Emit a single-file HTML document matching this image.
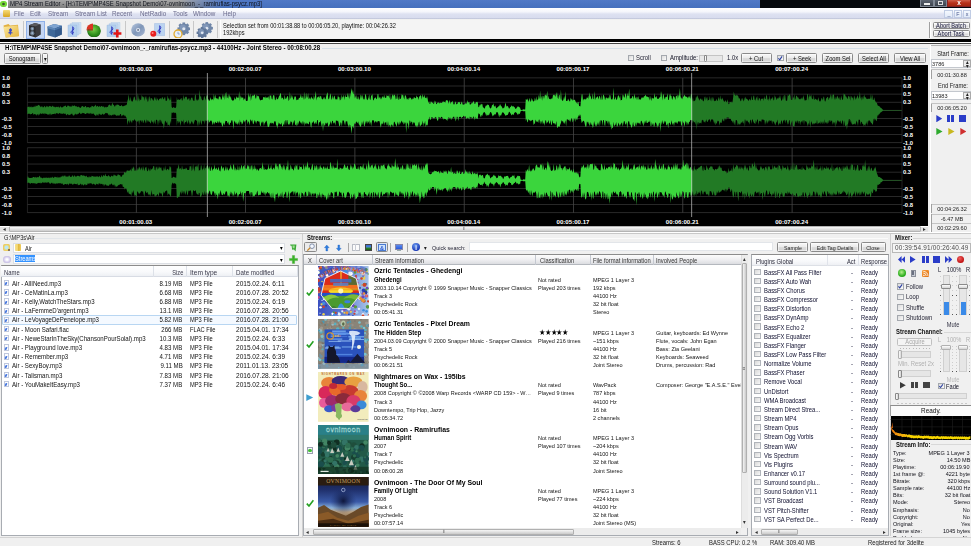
<!DOCTYPE html>
<html><head><meta charset="utf-8"><title>MP4 Stream Editor</title>
<style>
html,body{margin:0;padding:0;background:#f0f0f0;}
#r{position:relative;width:971px;height:546px;overflow:hidden;background:#f0f0f0;font-family:"Liberation Sans",sans-serif;font-size:6.1px;color:#000;}
#r div{position:absolute;box-sizing:border-box;}
#r svg{position:absolute;}
.t{position:absolute;white-space:nowrap;}
.btn{background:linear-gradient(#f8f8f8,#ececec 45%,#dcdcdc 55%,#d2d2d2);border:0.6px solid #8a8a8a;border-radius:1.5px;box-shadow:inset 0 0 0 0.5px #fff;}
.inp{background:#fff;border:1px solid #b4b8c0;}
.cb{background:#f4f4f4;border:1px solid #8f8f8f;}
</style></head><body><div id="r">

<div style="left:0px;top:0px;width:971px;height:8.3px;background:linear-gradient(#5179c6,#4670bd);"></div>
<div style="left:0px;top:0px;width:225px;height:8.3px;background:linear-gradient(#a8a8a8,#8e8e8e 60%,#7e7e7e);-webkit-mask-image:linear-gradient(90deg,#000 80%,transparent);mask-image:linear-gradient(90deg,#000 80%,transparent);"></div>
<div style="left:760.2px;top:0px;width:211px;height:8.3px;background:#05080c;"></div>
<div style="left:0px;top:0px;width:8px;height:8.3px;background:#fff;"></div>
<div style="left:0.3px;top:0.6px;width:6.6px;height:6.6px;background:radial-gradient(#3a5a2a 15%,#7fe83a 45%,#3fb81a);border-radius:4px;"></div>
<span class="t" style="top:-0.80px;line-height:10px;font-size:6.67px;color:#10131c;left:10px;transform:scaleX(0.9);transform-origin:0 50%;">MP4 Stream Editor - [H:\TEMP\MP4SE Snapshot Demo\07-ovnimoon_-_ramirufias-psycz.mp3]</span>
<div style="left:920px;top:0px;width:13.5px;height:7px;background:linear-gradient(#5c6470,#3c424c);border:0.5px solid #808894;border-top:0;"></div>
<div style="left:934px;top:0px;width:12.8px;height:7px;background:linear-gradient(#5c6470,#3c424c);border:0.5px solid #808894;border-top:0;"></div>
<div style="left:947.2px;top:0px;width:23.8px;height:7px;background:linear-gradient(#d0604a,#b83018 50%,#a42810);border:0.5px solid #822;border-top:0;"></div>
<div style="left:924px;top:3px;width:6px;height:1.5px;background:#eee;"></div>
<div style="left:937.5px;top:1px;width:5px;height:4px;border:1px solid #ddd;"></div>
<span class="t" style="top:-2.00px;line-height:10px;font-size:7.22px;color:#fff;font-weight:bold;left:859px;width:200px;text-align:center;transform:scaleX(0.9);transform-origin:50% 50%;">x</span>
<div style="left:0px;top:8.3px;width:971px;height:10.5px;background:linear-gradient(#ffffff 0%,#f4f5fb 35%,#dde1f1 55%,#d8dcee 90%,#b4bad0 100%);"></div>
<span class="t" style="top:9.40px;line-height:10px;font-size:7.0px;color:#6a6a8c;left:14px;transform:scaleX(0.9);transform-origin:0 50%;">File</span>
<span class="t" style="top:9.40px;line-height:10px;font-size:7.0px;color:#6a6a8c;left:29.5px;transform:scaleX(0.9);transform-origin:0 50%;">Edit</span>
<span class="t" style="top:9.40px;line-height:10px;font-size:7.0px;color:#6a6a8c;left:47.5px;transform:scaleX(0.9);transform-origin:0 50%;">Stream</span>
<span class="t" style="top:9.40px;line-height:10px;font-size:7.0px;color:#6a6a8c;left:74.5px;transform:scaleX(0.9);transform-origin:0 50%;">Stream List</span>
<span class="t" style="top:9.40px;line-height:10px;font-size:7.0px;color:#6a6a8c;left:112px;transform:scaleX(0.9);transform-origin:0 50%;">Recent</span>
<span class="t" style="top:9.40px;line-height:10px;font-size:7.0px;color:#6a6a8c;left:139.5px;transform:scaleX(0.9);transform-origin:0 50%;">NetRadio</span>
<span class="t" style="top:9.40px;line-height:10px;font-size:7.0px;color:#6a6a8c;left:173px;transform:scaleX(0.9);transform-origin:0 50%;">Tools</span>
<span class="t" style="top:9.40px;line-height:10px;font-size:7.0px;color:#6a6a8c;left:193px;transform:scaleX(0.9);transform-origin:0 50%;">Window</span>
<span class="t" style="top:9.40px;line-height:10px;font-size:7.0px;color:#6a6a8c;left:223px;transform:scaleX(0.9);transform-origin:0 50%;">Help</span>
<div style="left:3px;top:10px;width:7px;height:7px;background:linear-gradient(#f7dc7a,#d8a520);border-radius:1px;"></div>
<div style="left:944.3px;top:9.7px;width:8.5px;height:8.6px;background:linear-gradient(#f4f8fe,#e2eaf8);border:0.5px solid #c0cce4;"></div>
<span class="t" style="top:9.30px;line-height:10px;font-size:6.0px;color:#44558a;left:848.55px;width:200px;text-align:center;transform:scaleX(0.9);transform-origin:50% 50%;">_</span>
<div style="left:954.3px;top:9.7px;width:8px;height:8.6px;background:linear-gradient(#f4f8fe,#e2eaf8);border:0.5px solid #c0cce4;"></div>
<span class="t" style="top:9.30px;line-height:10px;font-size:6.0px;color:#44558a;left:858.3px;width:200px;text-align:center;transform:scaleX(0.9);transform-origin:50% 50%;">F</span>
<div style="left:963.4px;top:9.7px;width:7.6px;height:8.6px;background:linear-gradient(#f4f8fe,#e2eaf8);border:0.5px solid #c0cce4;"></div>
<span class="t" style="top:9.30px;line-height:10px;font-size:6.0px;color:#44558a;left:867.1999999999999px;width:200px;text-align:center;transform:scaleX(0.9);transform-origin:50% 50%;">x</span>
<div style="left:0px;top:19px;width:971px;height:20.5px;background:#f0f0f0;"></div>
<div style="left:25.5px;top:20.5px;width:19.5px;height:18px;background:#c3d5f3;border:0.5px solid #8fb0e8;"></div>
<svg style="left:2.5px;top:22.5px" width="16.5" height="15" viewBox="0 0 16.5 15"><defs><linearGradient id="fg" x1="0" y1="0" x2="1" y2="1"><stop offset="0" stop-color="#fbe9a0"/><stop offset="1" stop-color="#e6b43c"/></linearGradient></defs><path d="M0.5 2.5 L5.5 1 L7 2.5 L15 1.8 L16 13 L3 14.5Z" fill="#e2b040"/><path d="M0.3 4 L14.5 2.5 L16 13.2 L2.5 14.6Z" fill="url(#fg)"/><path d="M7.6 5 L9.2 7 L8 9 L10.2 10 L8 10.6 L7.4 12.4 L6.6 10.4 L4.8 10 L6.6 8.8 L6 6.8Z" fill="#3a4ac8"/></svg>
<svg style="left:28px;top:22px" width="13" height="15.8" viewBox="0 0 13 15.8"><path d="M1 3.2 L7 1 L12.5 2.5 L12.5 12.5 L7.5 15.5 L1 13.5Z" fill="#2c2c2e"/><path d="M1 3.2 L7 1 L12.5 2.5 L7.5 4.6Z" fill="#5a5a5e"/><path d="M7.5 4.6 L12.5 2.5 L12.5 12.5 L7.5 15.5Z" fill="#3c3c40"/><ellipse cx="4.3" cy="6.8" rx="1.9" ry="2" fill="#6a7a8c"/><ellipse cx="4.3" cy="11.2" rx="2.1" ry="2.2" fill="#6a7a8c"/><ellipse cx="4.3" cy="6.8" rx="0.9" ry="1" fill="#9ab0c8"/><ellipse cx="4.3" cy="11.2" rx="1" ry="1.1" fill="#9ab0c8"/></svg>
<svg style="left:47px;top:23px" width="15.2" height="14.8" viewBox="0 0 15.2 14.8"><path d="M0.5 3.5 L7 1 L14.8 2.8 L14.8 11.5 L8 14.4 L0.5 12.2Z" fill="#3f6898"/><path d="M0.5 3.5 L7 1 L14.8 2.8 L8 5.6Z" fill="#7fa4d0"/><path d="M8 5.6 L14.8 2.8 L14.8 11.5 L8 14.4Z" fill="#345a8a"/><path d="M0.5 3.5 L8 5.6 L8 7.2 L0.5 5.2Z" fill="#5f88b8"/><path d="M8 5.6 L14.8 2.8 L14.8 4.6 L8 7.2Z" fill="#4a74a8"/></svg>
<svg style="left:66.5px;top:22px" width="15" height="15" viewBox="0 0 15 15"><path d="M5 0.5 H14 V11.5 H5Z" fill="#cfe0f4" stroke="#a8c4e4" stroke-width="0.4"/><path d="M3 1.8 H12 V13 H3Z" fill="#c4daf2" stroke="#9fbde0" stroke-width="0.4"/><path d="M1 3.2 H10 V14.5 H1Z" fill="#b4d0ee" stroke="#8fb0dc" stroke-width="0.4"/><path d="M5.6 5 C7.4 5.4 7.2 8.2 5.2 8.6 C3.4 9.4 3.6 11.6 5.6 11.4 C6.8 11.2 6.6 9.6 5.6 9.8 M5.7 4.6 V12.8" fill="none" stroke="#2a34c0" stroke-width="0.9"/></svg>
<svg style="left:86px;top:22.6px" width="15" height="14.6" viewBox="0 0 15 14.6"><defs><radialGradient id="pg" cx="0.45" cy="0.4"><stop offset="0" stop-color="#7ad048"/><stop offset="1" stop-color="#2a8a18"/></radialGradient></defs><ellipse cx="8" cy="8.4" rx="6.6" ry="6" fill="#1f6a12"/><ellipse cx="8" cy="7.6" rx="6.6" ry="6" fill="url(#pg)"/><path d="M7 6.4 L7 0.6 A6.4 5.8 0 0 0 0.6 6.4Z" fill="#d83424"/><path d="M7 6.4 L0.6 6.4 L0.6 7.4 L7 7.4Z" fill="#a02010"/></svg>
<svg style="left:106px;top:22px" width="16" height="15.5" viewBox="0 0 16 15.5"><path d="M5 0.5 H14 V11.5 H5Z" fill="#cfe0f4" stroke="#a8c4e4" stroke-width="0.4"/><path d="M3 1.8 H12 V13 H3Z" fill="#c4daf2" stroke="#9fbde0" stroke-width="0.4"/><path d="M1 3.2 H10 V14.5 H1Z" fill="#b4d0ee" stroke="#8fb0dc" stroke-width="0.4"/><path d="M5.6 5 C7.4 5.4 7.2 8.2 5.2 8.6 C3.4 9.4 3.6 11.6 5.6 11.4 C6.8 11.2 6.6 9.6 5.6 9.8 M5.7 4.6 V12.8" fill="none" stroke="#2a34c0" stroke-width="0.9"/><path d="M10 7.6 H12.6 V10.2 H15.4 V12.8 H12.6 V15.4 H10 V12.8 H7.4 V10.2 H10Z" fill="#e01818"/></svg>
<svg style="left:130.8px;top:23.2px" width="14.2" height="13.8" viewBox="0 0 14.2 13.8"><defs><linearGradient id="cg" x1="0" y1="0" x2="1" y2="1"><stop offset="0" stop-color="#b8c8e0"/><stop offset="0.5" stop-color="#7f96b8"/><stop offset="1" stop-color="#a8b8d4"/></linearGradient></defs><ellipse cx="7.1" cy="6.9" rx="6.9" ry="6.6" fill="url(#cg)"/><ellipse cx="7.1" cy="6.9" rx="2.1" ry="2" fill="#dfe6f2"/><ellipse cx="7.1" cy="6.9" rx="0.9" ry="0.9" fill="#55657f"/></svg>
<svg style="left:149.5px;top:23px" width="15.5" height="14" viewBox="0 0 15.5 14"><path d="M4.5 0.5 H14.8 V12.6 H4.5Z" fill="#bcd4f0" stroke="#94b4de" stroke-width="0.4"/><path d="M9.6 3 C11.4 3.4 11.2 6.2 9.2 6.6 C7.4 7.4 7.6 9.6 9.6 9.4 C10.8 9.2 10.6 7.6 9.6 7.8 M9.7 2.6 V10.8" fill="none" stroke="#2a34c0" stroke-width="0.9"/><circle cx="3.3" cy="10.8" r="3" fill="#e82020"/><circle cx="2.6" cy="10" r="1" fill="#ff8080"/></svg>
<svg style="left:172.5px;top:21.5px" width="17.5" height="16.5" viewBox="0 0 17.5 16.5"><rect x="9.45" y="0.46" width="2.70" height="2.60" fill="#6f86a8" transform="rotate(0 10.8 6.8)"/><rect x="9.45" y="0.46" width="2.70" height="2.60" fill="#6f86a8" transform="rotate(45 10.8 6.8)"/><rect x="9.45" y="0.46" width="2.70" height="2.60" fill="#6f86a8" transform="rotate(90 10.8 6.8)"/><rect x="9.45" y="0.46" width="2.70" height="2.60" fill="#6f86a8" transform="rotate(135 10.8 6.8)"/><rect x="9.45" y="0.46" width="2.70" height="2.60" fill="#6f86a8" transform="rotate(180 10.8 6.8)"/><rect x="9.45" y="0.46" width="2.70" height="2.60" fill="#6f86a8" transform="rotate(225 10.8 6.8)"/><rect x="9.45" y="0.46" width="2.70" height="2.60" fill="#6f86a8" transform="rotate(270 10.8 6.8)"/><rect x="9.45" y="0.46" width="2.70" height="2.60" fill="#6f86a8" transform="rotate(315 10.8 6.8)"/><circle cx="10.8" cy="6.8" r="5.2" fill="#6f86a8"/><circle cx="9.760000000000002" cy="5.5" r="3.12" fill="#8ea4c4" opacity="0.6"/><circle cx="10.8" cy="6.8" r="1.56" fill="#dfe6f0"/><circle cx="5" cy="12" r="4" fill="#e8f0fa" stroke="#e0aa30" stroke-width="1.3"/><path d="M5 9.8 V12 H6.8" stroke="#6a88c0" stroke-width="0.7" fill="none"/></svg>
<svg style="left:196px;top:21.5px" width="17.5" height="16.5" viewBox="0 0 17.5 16.5"><rect x="9.50" y="0.10" width="2.60" height="2.50" fill="#6f86a8" transform="rotate(0 10.8 6.2)"/><rect x="9.50" y="0.10" width="2.60" height="2.50" fill="#6f86a8" transform="rotate(45 10.8 6.2)"/><rect x="9.50" y="0.10" width="2.60" height="2.50" fill="#6f86a8" transform="rotate(90 10.8 6.2)"/><rect x="9.50" y="0.10" width="2.60" height="2.50" fill="#6f86a8" transform="rotate(135 10.8 6.2)"/><rect x="9.50" y="0.10" width="2.60" height="2.50" fill="#6f86a8" transform="rotate(180 10.8 6.2)"/><rect x="9.50" y="0.10" width="2.60" height="2.50" fill="#6f86a8" transform="rotate(225 10.8 6.2)"/><rect x="9.50" y="0.10" width="2.60" height="2.50" fill="#6f86a8" transform="rotate(270 10.8 6.2)"/><rect x="9.50" y="0.10" width="2.60" height="2.50" fill="#6f86a8" transform="rotate(315 10.8 6.2)"/><circle cx="10.8" cy="6.2" r="5" fill="#6f86a8"/><circle cx="9.8" cy="4.95" r="3.0" fill="#8ea4c4" opacity="0.6"/><circle cx="10.8" cy="6.2" r="1.5" fill="#dfe6f0"/><rect x="5.00" y="5.19" width="2.39" height="2.30" fill="#62789a" transform="rotate(0 6.2 10.8)"/><rect x="5.00" y="5.19" width="2.39" height="2.30" fill="#62789a" transform="rotate(45 6.2 10.8)"/><rect x="5.00" y="5.19" width="2.39" height="2.30" fill="#62789a" transform="rotate(90 6.2 10.8)"/><rect x="5.00" y="5.19" width="2.39" height="2.30" fill="#62789a" transform="rotate(135 6.2 10.8)"/><rect x="5.00" y="5.19" width="2.39" height="2.30" fill="#62789a" transform="rotate(180 6.2 10.8)"/><rect x="5.00" y="5.19" width="2.39" height="2.30" fill="#62789a" transform="rotate(225 6.2 10.8)"/><rect x="5.00" y="5.19" width="2.39" height="2.30" fill="#62789a" transform="rotate(270 6.2 10.8)"/><rect x="5.00" y="5.19" width="2.39" height="2.30" fill="#62789a" transform="rotate(315 6.2 10.8)"/><circle cx="6.2" cy="10.8" r="4.6" fill="#62789a"/><circle cx="5.28" cy="9.65" r="2.76" fill="#8ea4c4" opacity="0.6"/><circle cx="6.2" cy="10.8" r="1.38" fill="#dfe6f0"/></svg>
<div style="left:22.5px;top:21px;width:1px;height:17px;background:#c8c8c8;"></div>
<div style="left:124.5px;top:21px;width:1px;height:17px;background:#c8c8c8;"></div>
<div style="left:168.5px;top:21px;width:1px;height:17px;background:#c8c8c8;"></div>
<div style="left:192.5px;top:21px;width:1px;height:17px;background:#c8c8c8;"></div>
<div style="left:216.5px;top:21px;width:1px;height:17px;background:#c8c8c8;"></div>
<div style="left:219.5px;top:20px;width:712px;height:19px;background:#f4f4f4;border-left:1px solid #fff;"></div>
<span class="t" style="top:21.40px;line-height:10px;font-size:6.33px;color:#111;left:222.5px;transform:scaleX(0.9);transform-origin:0 50%;">Selection set from 00:01:38.88 to 00:06:05.20, playtime: 00:04:26.32</span>
<span class="t" style="top:28.40px;line-height:10px;font-size:6.33px;color:#111;left:222.5px;transform:scaleX(0.9);transform-origin:0 50%;">192kbps</span>
<div style="left:929.3px;top:21.5px;width:0.7px;height:16px;background:#a0a0a0;"></div>
<div style="left:930px;top:21.5px;width:0.7px;height:16px;background:#fff;"></div>
<div class="btn" style="left:932.6px;top:21.7px;width:37.6px;height:6.9px;"></div>
<span class="t" style="top:20.70px;line-height:10px;font-size:6.33px;color:#15153a;left:851.4px;width:200px;text-align:center;transform:scaleX(0.9);transform-origin:50% 50%;">Abort Batch</span>
<div class="btn" style="left:932.6px;top:30.3px;width:37.6px;height:6.9px;"></div>
<span class="t" style="top:29.30px;line-height:10px;font-size:6.33px;color:#15153a;left:851.4px;width:200px;text-align:center;transform:scaleX(0.9);transform-origin:50% 50%;">Abort Task</span>
<div style="left:0px;top:39.4px;width:971px;height:3px;background:#000;"></div>
<div style="left:0px;top:42.4px;width:971px;height:0.7px;background:#fff;"></div>
<div style="left:0px;top:43.1px;width:971px;height:0.8px;background:#444;"></div>
<span class="t" style="top:43.40px;line-height:10px;font-size:6.77px;color:#000;font-weight:bold;left:4.5px;transform:scaleX(0.9);transform-origin:0 50%;">H:\TEMP\MP4SE Snapshot Demo\07-ovnimoon_-_ramirufias-psycz.mp3 - 44100Hz - Joint Stereo - 00:08:00.28</span>
<div style="left:322px;top:48.3px;width:606px;height:0.6px;background:#d5dfe8;"></div>
<div class="btn" style="left:3.5px;top:53px;width:37px;height:10.5px;"></div>
<span class="t" style="top:53.90px;line-height:10px;font-size:6.44px;color:#111;left:-78px;width:200px;text-align:center;transform:scaleX(0.9);transform-origin:50% 50%;">Sonogram</span>
<div class="btn" style="left:41.5px;top:53px;width:6.5px;height:10.5px;"></div>
<span class="t" style="top:53.90px;line-height:10px;font-size:5.56px;color:#111;left:-55.3px;width:200px;text-align:center;transform:scaleX(0.9);transform-origin:50% 50%;">▾</span>
<div style="left:627.5px;top:54.5px;width:6.3px;height:6.3px;background:linear-gradient(135deg,#dcdcdc,#fafafa);border:0.6px solid #a4a8ae;"></div>
<span class="t" style="top:53.40px;line-height:10px;font-size:6.56px;color:#223;left:636px;transform:scaleX(0.9);transform-origin:0 50%;">Scroll</span>
<div style="left:661px;top:54.5px;width:6.3px;height:6.3px;background:linear-gradient(135deg,#dcdcdc,#fafafa);border:0.6px solid #a4a8ae;"></div>
<span class="t" style="top:53.40px;line-height:10px;font-size:6.56px;color:#112;left:669.5px;transform:scaleX(0.9);transform-origin:0 50%;">Amplitude:</span>
<div style="left:699px;top:54.5px;width:24px;height:7px;background:#e8e8e8;border:0.6px solid #c4c4c4;"></div>
<div style="left:703.5px;top:55px;width:3.5px;height:6.5px;background:#f8f8f8;border:0.6px solid #888;border-radius:0 0 2px 2px;"></div>
<span class="t" style="top:53.40px;line-height:10px;font-size:6.56px;color:#223;left:727px;transform:scaleX(0.9);transform-origin:0 50%;">1.0x</span>
<div class="btn" style="left:740.5px;top:53px;width:31px;height:10.3px;"></div>
<span class="t" style="top:53.75px;line-height:10px;font-size:6.44px;color:#111;left:656.0px;width:200px;text-align:center;transform:scaleX(0.9);transform-origin:50% 50%;">+ Cut</span>
<div style="left:777px;top:54.5px;width:6.5px;height:6.5px;background:linear-gradient(135deg,#dcdcdc,#fafafa);border:0.6px solid #a4a8ae;"></div>
<svg style="left:777px;top:54.5px" width="6.5" height="6.5" viewBox="0 0 6 6"><path d="M1.3 3 L2.5 4.4 L4.7 1.3" fill="none" stroke="#2a3ea0" stroke-width="1"/></svg>
<div class="btn" style="left:786px;top:53px;width:31px;height:10.3px;"></div>
<span class="t" style="top:53.75px;line-height:10px;font-size:6.44px;color:#111;left:701.5px;width:200px;text-align:center;transform:scaleX(0.9);transform-origin:50% 50%;">+ Seek</span>
<div class="btn" style="left:822px;top:53px;width:31px;height:10.3px;"></div>
<span class="t" style="top:53.75px;line-height:10px;font-size:6.44px;color:#111;left:737.5px;width:200px;text-align:center;transform:scaleX(0.9);transform-origin:50% 50%;">Zoom Sel</span>
<div class="btn" style="left:858px;top:53px;width:31px;height:10.3px;"></div>
<span class="t" style="top:53.75px;line-height:10px;font-size:6.44px;color:#111;left:773.5px;width:200px;text-align:center;transform:scaleX(0.9);transform-origin:50% 50%;">Select All</span>
<div class="btn" style="left:894px;top:53px;width:31.5px;height:10.3px;"></div>
<span class="t" style="top:53.75px;line-height:10px;font-size:6.44px;color:#111;left:809.75px;width:200px;text-align:center;transform:scaleX(0.9);transform-origin:50% 50%;">View All</span>
<div style="left:0px;top:64.6px;width:928px;height:161.4px;background:#000;"></div>
<svg style="left:0;top:0" width="971" height="546" viewBox="0 0 971 546">
<defs>
<clipPath id="cs"><rect x="207.3" y="60" width="484.40000000000003" height="170"/></clipPath>
<clipPath id="cl"><rect x="0" y="60" width="207.3" height="170"/><rect x="691.7" y="60" width="300" height="170"/></clipPath>
</defs>
<rect x="27.3" y="77.55" width="874.7" height="0.7" fill="#3a3a3a"/>
<rect x="27.3" y="85.65" width="874.7" height="0.7" fill="#3a3a3a"/>
<rect x="27.3" y="93.75" width="874.7" height="0.7" fill="#3a3a3a"/>
<rect x="27.3" y="101.85" width="874.7" height="0.7" fill="#3a3a3a"/>
<rect x="27.3" y="109.95" width="874.7" height="0.7" fill="#3a3a3a"/>
<rect x="27.3" y="118.05" width="874.7" height="0.7" fill="#3a3a3a"/>
<rect x="27.3" y="126.15" width="874.7" height="0.7" fill="#3a3a3a"/>
<rect x="27.3" y="134.25" width="874.7" height="0.7" fill="#3a3a3a"/>
<rect x="27.3" y="142.35" width="874.7" height="0.7" fill="#3a3a3a"/>
<rect x="26.95" y="77.9" width="0.7" height="64.8" fill="#2e2e2e"/>
<rect x="901.65" y="77.9" width="0.7" height="64.8" fill="#2e2e2e"/>
<rect x="135.9" y="77.9" width="0.8" height="64.8" fill="#464646"/>
<rect x="245.2" y="77.9" width="0.8" height="64.8" fill="#464646"/>
<rect x="354.5" y="77.9" width="0.8" height="64.8" fill="#464646"/>
<rect x="463.8" y="77.9" width="0.8" height="64.8" fill="#464646"/>
<rect x="573.1" y="77.9" width="0.8" height="64.8" fill="#464646"/>
<rect x="682.4" y="77.9" width="0.8" height="64.8" fill="#464646"/>
<rect x="791.7" y="77.9" width="0.8" height="64.8" fill="#464646"/>
<rect x="27.3" y="147.45" width="874.7" height="0.7" fill="#3a3a3a"/>
<rect x="27.3" y="155.56" width="874.7" height="0.7" fill="#3a3a3a"/>
<rect x="27.3" y="163.68" width="874.7" height="0.7" fill="#3a3a3a"/>
<rect x="27.3" y="171.79" width="874.7" height="0.7" fill="#3a3a3a"/>
<rect x="27.3" y="179.90" width="874.7" height="0.7" fill="#3a3a3a"/>
<rect x="27.3" y="188.01" width="874.7" height="0.7" fill="#3a3a3a"/>
<rect x="27.3" y="196.12" width="874.7" height="0.7" fill="#3a3a3a"/>
<rect x="27.3" y="204.24" width="874.7" height="0.7" fill="#3a3a3a"/>
<rect x="27.3" y="212.35" width="874.7" height="0.7" fill="#3a3a3a"/>
<rect x="26.95" y="147.8" width="0.7" height="64.9" fill="#2e2e2e"/>
<rect x="901.65" y="147.8" width="0.7" height="64.9" fill="#2e2e2e"/>
<rect x="135.9" y="147.8" width="0.8" height="64.9" fill="#464646"/>
<rect x="245.2" y="147.8" width="0.8" height="64.9" fill="#464646"/>
<rect x="354.5" y="147.8" width="0.8" height="64.9" fill="#464646"/>
<rect x="463.8" y="147.8" width="0.8" height="64.9" fill="#464646"/>
<rect x="573.1" y="147.8" width="0.8" height="64.9" fill="#464646"/>
<rect x="682.4" y="147.8" width="0.8" height="64.9" fill="#464646"/>
<rect x="791.7" y="147.8" width="0.8" height="64.9" fill="#464646"/>
<defs><path id="w0" d="M27.3 107.2 L27.9 107.1 L28.6 106.6 L29.2 107.5 L29.9 106.3 L30.5 106.9 L31.2 107.5 L31.8 106.3 L32.5 107.2 L33.1 107.2 L33.8 106.6 L34.4 107.0 L35.1 105.3 L35.7 107.0 L36.4 105.6 L37.0 106.2 L37.7 105.6 L38.3 104.7 L39.0 105.2 L39.6 105.6 L40.3 106.5 L40.9 107.2 L41.6 106.3 L42.2 106.3 L42.9 107.6 L43.5 107.2 L44.2 106.6 L44.8 105.8 L45.5 107.4 L46.1 107.0 L46.8 105.7 L47.4 106.2 L48.1 107.3 L48.7 106.6 L49.4 105.8 L50.0 106.6 L50.7 105.9 L51.3 107.0 L52.0 106.6 L52.6 105.5 L53.3 107.1 L53.9 106.3 L54.6 107.1 L55.2 107.4 L55.9 106.8 L56.5 106.8 L57.2 107.3 L57.8 106.8 L58.5 106.4 L59.1 107.8 L59.8 107.2 L60.4 106.1 L61.1 107.5 L61.7 107.2 L62.4 107.4 L63.0 106.7 L63.7 106.6 L64.3 106.3 L65.0 105.7 L65.6 105.6 L66.3 107.1 L66.9 107.0 L67.6 105.6 L68.2 105.5 L68.9 106.0 L69.5 106.3 L70.2 106.9 L70.8 106.1 L71.5 106.9 L72.1 105.0 L72.8 106.2 L73.5 106.0 L74.1 105.5 L74.8 105.6 L75.4 106.4 L76.1 106.1 L76.7 106.5 L77.4 107.3 L78.0 106.4 L78.7 106.8 L79.3 107.0 L80.0 108.0 L80.6 107.7 L81.3 106.9 L81.9 106.1 L82.6 106.1 L83.2 106.6 L83.9 107.3 L84.5 106.9 L85.2 105.9 L85.8 105.9 L86.5 107.7 L87.1 107.0 L87.8 107.2 L88.4 107.0 L89.1 107.6 L89.7 107.8 L90.4 106.7 L91.0 107.7 L91.7 105.7 L92.3 106.1 L93.0 106.2 L93.6 106.9 L94.3 106.2 L94.9 105.7 L95.6 104.4 L96.2 106.7 L96.9 106.3 L97.5 105.8 L98.2 106.6 L98.8 106.9 L99.5 105.8 L100.1 106.9 L100.8 106.6 L101.4 105.9 L102.1 105.9 L102.7 106.9 L103.4 106.6 L104.0 106.6 L104.7 107.8 L105.3 107.3 L106.0 106.6 L106.6 107.6 L107.3 107.1 L107.9 106.7 L108.6 105.1 L109.2 105.1 L109.9 104.3 L110.5 105.8 L111.2 106.2 L111.8 104.4 L112.5 102.4 L113.1 105.3 L113.8 104.5 L114.4 106.4 L115.1 106.4 L115.7 105.0 L116.4 105.5 L117.0 104.1 L117.7 105.0 L118.3 104.8 L119.0 104.9 L119.6 105.9 L120.3 106.0 L120.9 106.0 L121.6 104.8 L122.2 106.3 L122.9 106.3 L123.5 106.2 L124.2 105.7 L124.8 105.7 L125.5 105.2 L126.1 105.3 L126.8 104.4 L127.4 101.1 L128.1 98.7 L128.7 94.2 L129.4 99.9 L130.0 101.1 L130.7 96.6 L131.3 100.7 L132.0 101.7 L132.6 101.5 L133.3 99.6 L133.9 96.9 L134.6 96.5 L135.2 99.3 L135.9 100.7 L136.5 99.8 L137.2 101.5 L137.8 93.0 L138.5 97.8 L139.1 101.4 L139.8 98.2 L140.4 100.1 L141.1 100.2 L141.7 95.1 L142.4 96.2 L143.0 97.5 L143.7 96.4 L144.3 100.9 L145.0 96.0 L145.6 97.3 L146.3 99.9 L146.9 95.9 L147.6 101.7 L148.2 101.4 L148.9 97.0 L149.5 96.3 L150.2 101.2 L150.8 97.7 L151.5 98.3 L152.1 98.6 L152.8 100.0 L153.4 101.1 L154.1 98.7 L154.7 96.8 L155.4 100.3 L156.0 96.6 L156.7 101.3 L157.3 97.9 L158.0 99.8 L158.6 100.8 L159.3 98.7 L159.9 98.7 L160.6 98.1 L161.2 99.5 L161.9 97.5 L162.5 96.9 L163.2 98.8 L163.8 99.6 L164.5 97.4 L165.1 97.1 L165.8 100.9 L166.4 101.1 L167.1 99.8 L167.7 95.3 L168.4 99.0 L169.0 98.0 L169.7 100.6 L170.3 100.1 L171.0 95.4 L171.6 106.7 L172.3 107.9 L172.9 107.7 L173.6 106.9 L174.2 107.6 L174.9 108.0 L175.5 108.1 L176.2 106.8 L176.8 96.9 L177.5 100.0 L178.1 100.1 L178.8 99.1 L179.4 100.0 L180.1 99.8 L180.7 98.8 L181.4 97.8 L182.0 100.8 L182.7 100.0 L183.3 94.8 L184.0 99.4 L184.6 98.2 L185.3 96.4 L185.9 97.2 L186.6 96.4 L187.2 98.9 L187.9 100.0 L188.5 98.4 L189.2 97.9 L189.8 100.9 L190.5 99.9 L191.1 98.0 L191.8 97.6 L192.4 97.7 L193.1 100.8 L193.7 100.5 L194.4 100.9 L195.0 94.7 L195.7 94.5 L196.3 100.8 L197.0 99.1 L197.6 100.8 L198.3 99.9 L198.9 98.5 L199.6 89.5 L200.2 97.2 L200.9 95.4 L201.5 99.1 L202.2 100.1 L202.8 100.4 L203.5 99.7 L204.1 95.7 L204.8 97.2 L205.4 100.5 L206.1 97.0 L206.7 95.2 L207.4 95.5 L208.0 101.0 L208.7 98.7 L209.3 101.2 L210.0 99.8 L210.6 96.9 L211.3 100.4 L211.9 98.8 L212.6 99.3 L213.2 100.4 L213.9 93.5 L214.5 99.3 L215.2 94.3 L215.8 98.0 L216.5 98.6 L217.1 98.1 L217.8 99.2 L218.4 99.6 L219.1 95.8 L219.7 96.9 L220.4 96.8 L221.0 100.1 L221.7 99.1 L222.3 96.7 L223.0 93.8 L223.6 98.3 L224.3 94.5 L224.9 99.9 L225.6 93.6 L226.2 92.1 L226.9 98.5 L227.5 97.5 L228.2 93.9 L228.8 99.1 L229.5 94.0 L230.1 98.0 L230.8 96.1 L231.4 99.3 L232.1 100.6 L232.7 100.5 L233.4 100.4 L234.0 100.0 L234.7 97.0 L235.3 99.7 L236.0 98.2 L236.6 96.2 L237.3 97.5 L237.9 98.1 L238.6 97.4 L239.2 90.9 L239.9 100.9 L240.5 94.9 L241.2 98.5 L241.8 96.5 L242.5 97.9 L243.1 97.3 L243.8 100.6 L244.4 98.8 L245.1 98.2 L245.7 100.3 L246.4 101.0 L247.0 101.0 L247.7 100.5 L248.3 92.4 L249.0 97.8 L249.6 96.2 L250.3 93.5 L250.9 101.1 L251.6 97.0 L252.2 95.1 L252.9 96.3 L253.5 95.8 L254.2 94.5 L254.8 94.7 L255.5 98.6 L256.1 98.6 L256.8 94.4 L257.4 96.0 L258.1 96.6 L258.7 95.7 L259.4 98.8 L260.0 100.0 L260.7 100.5 L261.3 100.1 L262.0 99.7 L262.6 100.1 L263.3 97.0 L263.9 97.1 L264.6 97.8 L265.2 96.2 L265.9 98.4 L266.5 97.4 L267.2 96.9 L267.8 97.9 L268.5 95.9 L269.1 100.1 L269.8 95.3 L270.4 95.8 L271.1 95.3 L271.7 98.7 L272.4 99.6 L273.0 95.8 L273.7 95.0 L274.3 95.4 L275.0 100.2 L275.6 99.9 L276.3 96.5 L276.9 99.2 L277.6 99.3 L278.2 98.4 L278.9 96.5 L279.5 95.8 L280.2 93.5 L280.8 93.0 L281.5 98.7 L282.1 98.0 L282.8 97.6 L283.4 99.5 L284.1 99.4 L284.7 94.7 L285.4 98.8 L286.0 99.0 L286.7 97.6 L287.3 96.1 L288.0 96.6 L288.6 101.1 L289.3 99.7 L289.9 91.4 L290.6 99.0 L291.2 97.5 L291.9 94.8 L292.5 97.1 L293.2 99.1 L293.8 100.1 L294.5 96.2 L295.1 97.0 L295.8 95.9 L296.4 100.2 L297.1 100.1 L297.7 99.6 L298.4 99.7 L299.0 97.4 L299.7 98.2 L300.3 96.4 L300.9 93.9 L301.6 97.8 L302.2 97.9 L302.9 95.4 L303.5 99.9 L304.2 91.6 L304.8 99.5 L305.5 98.1 L306.1 92.5 L306.8 97.4 L307.4 97.4 L308.1 92.8 L308.7 99.2 L309.4 98.5 L310.0 96.9 L310.7 99.7 L311.3 96.3 L312.0 98.1 L312.6 98.6 L313.3 100.0 L313.9 95.1 L314.6 99.1 L315.2 95.0 L315.9 91.0 L316.5 100.4 L317.2 96.9 L317.8 97.5 L318.5 96.8 L319.1 95.8 L319.8 98.2 L320.4 95.8 L321.1 96.3 L321.7 98.7 L322.4 99.2 L323.0 99.5 L323.7 97.5 L324.3 97.0 L325.0 99.4 L325.6 98.9 L326.3 96.1 L326.9 93.8 L327.6 92.3 L328.2 98.4 L328.9 99.4 L329.5 97.3 L330.2 93.3 L330.8 94.9 L331.5 99.9 L332.1 98.5 L332.8 94.9 L333.4 99.5 L334.1 95.6 L334.7 96.3 L335.4 99.2 L336.0 99.5 L336.7 99.3 L337.3 99.5 L338.0 95.0 L338.6 97.3 L339.3 96.9 L339.9 100.5 L340.6 99.7 L341.2 94.2 L341.9 99.6 L342.5 96.6 L343.2 97.2 L343.8 94.6 L344.5 100.2 L345.1 94.4 L345.8 97.1 L346.4 97.1 L347.1 97.1 L347.7 92.4 L348.4 97.9 L349.0 92.2 L349.7 99.2 L350.3 95.4 L351.0 92.0 L351.6 87.9 L352.3 93.5 L352.9 89.5 L353.6 94.0 L354.2 94.2 L354.9 98.4 L355.5 95.4 L356.2 99.2 L356.8 94.8 L357.5 99.0 L358.1 99.6 L358.8 95.9 L359.4 100.3 L360.1 98.6 L360.7 94.6 L361.4 95.7 L362.0 98.8 L362.7 94.4 L363.3 98.7 L364.0 99.7 L364.6 98.9 L365.3 94.0 L365.9 94.6 L366.6 98.7 L367.2 100.3 L367.9 99.2 L368.5 97.7 L369.2 94.3 L369.8 99.3 L370.5 100.1 L371.1 95.8 L371.8 95.3 L372.4 94.1 L373.1 100.6 L373.7 99.9 L374.4 98.2 L375.0 97.8 L375.7 97.3 L376.3 99.2 L377.0 98.4 L377.6 94.1 L378.3 94.1 L378.9 98.7 L379.6 96.4 L380.2 99.4 L380.9 96.7 L381.5 99.6 L382.2 95.9 L382.8 97.3 L383.5 97.7 L384.1 94.7 L384.8 97.6 L385.4 97.8 L386.1 97.9 L386.7 95.1 L387.4 96.3 L388.0 95.2 L388.7 95.9 L389.3 98.5 L390.0 93.6 L390.6 99.7 L391.3 99.2 L391.9 96.2 L392.6 94.0 L393.2 96.7 L393.9 94.4 L394.5 94.8 L395.2 95.7 L395.8 99.4 L396.5 98.6 L397.1 93.5 L397.8 98.7 L398.4 100.2 L399.1 95.7 L399.7 99.4 L400.4 98.8 L401.0 98.4 L401.7 94.0 L402.3 95.6 L403.0 94.2 L403.6 97.3 L404.3 99.6 L404.9 95.3 L405.6 95.3 L406.2 97.1 L406.9 99.4 L407.5 99.3 L408.2 97.8 L408.8 99.9 L409.5 97.6 L410.1 97.8 L410.8 97.8 L411.4 100.1 L412.1 98.0 L412.7 99.5 L413.4 98.7 L414.0 96.7 L414.7 97.8 L415.3 98.3 L416.0 98.0 L416.6 95.2 L417.3 97.5 L417.9 96.8 L418.6 100.0 L419.2 96.5 L419.9 96.2 L420.5 95.0 L421.2 96.1 L421.8 99.5 L422.5 94.0 L423.1 96.2 L423.8 97.7 L424.4 94.5 L425.1 98.3 L425.7 97.4 L426.4 98.6 L427.0 96.0 L427.7 99.0 L428.3 103.3 L429.0 100.9 L429.6 104.1 L430.3 103.7 L430.9 101.2 L431.6 101.9 L432.2 102.9 L432.9 102.5 L433.5 103.9 L434.2 103.4 L434.8 100.6 L435.5 101.7 L436.1 103.8 L436.8 104.2 L437.4 102.4 L438.1 103.2 L438.7 102.1 L439.4 103.6 L440.0 103.0 L440.7 102.8 L441.3 103.1 L442.0 103.0 L442.6 101.8 L443.3 101.2 L443.9 102.3 L444.6 101.8 L445.2 103.1 L445.9 100.4 L446.5 100.0 L447.2 100.8 L447.8 100.1 L448.5 103.8 L449.1 102.3 L449.8 99.8 L450.4 103.9 L451.1 102.3 L451.7 102.3 L452.4 100.8 L453.0 102.7 L453.7 104.5 L454.3 104.4 L455.0 102.7 L455.6 101.3 L456.3 104.3 L456.9 104.3 L457.6 103.4 L458.2 102.0 L458.9 102.3 L459.5 101.7 L460.2 103.8 L460.8 104.4 L461.5 101.4 L462.1 102.6 L462.8 104.7 L463.4 104.8 L464.1 104.2 L464.7 104.6 L465.4 103.3 L466.0 103.2 L466.7 103.7 L467.3 100.0 L468.0 103.0 L468.6 101.9 L469.3 102.0 L469.9 104.8 L470.6 104.5 L471.2 103.3 L471.9 103.4 L472.5 102.9 L473.2 101.5 L473.8 101.2 L474.5 103.8 L475.1 104.1 L475.8 102.5 L476.4 101.8 L477.1 102.4 L477.7 101.4 L478.4 107.1 L479.0 107.3 L479.7 104.8 L480.3 105.6 L481.0 103.6 L481.6 104.4 L482.3 104.0 L482.9 107.3 L483.6 107.4 L484.2 108.8 L484.9 107.9 L485.5 106.2 L486.2 105.0 L486.8 106.1 L487.5 104.2 L488.1 105.0 L488.8 104.8 L489.4 106.9 L490.1 108.2 L490.7 108.4 L491.4 107.5 L492.0 105.2 L492.7 105.1 L493.3 103.2 L494.0 106.0 L494.6 106.7 L495.3 105.3 L495.9 107.5 L496.6 108.6 L497.2 107.6 L497.9 106.9 L498.5 106.2 L499.2 106.2 L499.8 104.4 L500.5 104.6 L501.1 106.8 L501.8 105.9 L502.4 108.3 L503.1 108.5 L503.7 107.8 L504.4 107.4 L505.0 104.8 L505.7 102.5 L506.3 106.3 L507.0 106.4 L507.6 105.8 L508.3 106.9 L508.9 108.6 L509.6 108.6 L510.2 106.9 L510.9 106.7 L511.5 105.3 L512.2 106.3 L512.8 106.4 L513.5 105.9 L514.1 107.4 L514.8 107.1 L515.4 109.0 L516.1 108.7 L516.7 107.8 L517.4 107.1 L518.0 106.1 L518.7 107.0 L519.3 107.2 L520.0 107.5 L520.6 109.6 L521.3 109.9 L521.9 110.1 L522.6 109.7 L523.2 109.3 L523.9 109.4 L524.5 109.4 L525.2 109.5 L525.8 99.0 L526.5 99.5 L527.1 100.3 L527.8 98.3 L528.4 102.1 L529.1 100.2 L529.7 97.8 L530.4 101.8 L531.0 101.5 L531.7 98.0 L532.3 99.5 L533.0 101.2 L533.6 101.6 L534.3 101.1 L534.9 97.4 L535.6 101.3 L536.2 96.3 L536.9 100.8 L537.5 99.6 L538.2 99.3 L538.8 94.8 L539.5 99.6 L540.1 90.5 L540.8 99.3 L541.4 95.6 L542.1 100.7 L542.7 95.8 L543.4 96.0 L544.0 99.1 L544.7 95.6 L545.3 94.5 L546.0 95.7 L546.6 95.5 L547.3 90.8 L547.9 99.5 L548.6 95.6 L549.2 99.2 L549.9 98.7 L550.5 99.4 L551.2 98.1 L551.8 99.3 L552.5 98.1 L553.1 94.6 L553.8 95.3 L554.4 95.4 L555.1 94.0 L555.7 97.0 L556.4 93.9 L557.0 91.9 L557.7 97.7 L558.3 99.2 L559.0 94.8 L559.6 95.1 L560.3 100.1 L560.9 89.5 L561.6 99.3 L562.2 100.6 L562.9 100.9 L563.5 99.3 L564.2 96.0 L564.8 99.4 L565.5 91.2 L566.1 101.1 L566.8 101.0 L567.4 101.0 L568.1 98.4 L568.7 99.9 L569.4 101.0 L570.0 101.7 L570.7 97.4 L571.3 100.0 L572.0 98.3 L572.6 100.7 L573.3 99.7 L573.9 100.2 L574.6 99.5 L575.2 100.6 L575.9 102.3 L576.5 102.5 L577.2 104.0 L577.8 102.1 L578.5 102.1 L579.1 106.3 L579.8 105.9 L580.4 106.4 L581.1 99.2 L581.7 94.3 L582.4 94.3 L583.0 100.8 L583.7 99.0 L584.3 99.4 L585.0 98.5 L585.6 99.7 L586.3 98.9 L586.9 97.2 L587.6 98.3 L588.2 95.3 L588.9 99.5 L589.5 92.3 L590.2 95.8 L590.8 96.8 L591.5 99.5 L592.1 98.4 L592.8 93.3 L593.4 98.7 L594.1 99.6 L594.7 90.9 L595.4 99.9 L596.0 97.8 L596.7 97.4 L597.3 96.0 L598.0 97.3 L598.6 99.4 L599.3 95.7 L599.9 96.2 L600.6 100.2 L601.2 94.4 L601.9 100.3 L602.5 99.1 L603.2 94.3 L603.8 95.3 L604.5 96.9 L605.1 100.2 L605.8 97.7 L606.4 97.3 L607.1 98.7 L607.7 98.1 L608.4 97.2 L609.0 98.9 L609.7 94.7 L610.3 95.3 L611.0 99.1 L611.6 99.6 L612.3 99.4 L612.9 97.7 L613.6 87.6 L614.2 99.4 L614.9 99.2 L615.5 96.2 L616.2 99.4 L616.8 100.0 L617.5 97.6 L618.1 95.2 L618.8 95.8 L619.4 98.6 L620.1 95.2 L620.7 100.5 L621.4 100.0 L622.0 100.1 L622.7 94.5 L623.3 94.9 L624.0 97.4 L624.6 97.5 L625.3 93.4 L625.9 93.7 L626.6 99.5 L627.2 92.7 L627.9 96.3 L628.5 95.4 L629.2 88.5 L629.8 98.6 L630.5 98.4 L631.1 98.6 L631.8 98.1 L632.4 95.9 L633.1 96.3 L633.7 99.5 L634.4 93.5 L635.0 96.6 L635.7 98.7 L636.3 96.4 L637.0 100.2 L637.6 97.2 L638.3 96.2 L638.9 99.9 L639.6 99.1 L640.2 99.8 L640.9 99.3 L641.5 97.7 L642.2 97.0 L642.8 98.3 L643.5 97.5 L644.1 96.1 L644.8 96.5 L645.4 94.4 L646.1 95.9 L646.7 96.8 L647.4 96.6 L648.0 97.3 L648.7 97.0 L649.3 100.5 L650.0 95.5 L650.6 98.4 L651.3 101.0 L651.9 97.3 L652.6 98.5 L653.2 98.1 L653.9 98.9 L654.5 93.1 L655.2 97.3 L655.8 97.4 L656.5 95.7 L657.1 98.7 L657.8 98.8 L658.4 98.9 L659.1 97.9 L659.7 97.3 L660.4 97.1 L661.0 91.0 L661.7 94.6 L662.3 100.6 L663.0 94.0 L663.6 94.4 L664.3 97.9 L664.9 99.5 L665.6 96.8 L666.2 97.3 L666.9 96.6 L667.5 92.9 L668.2 99.9 L668.8 100.0 L669.5 95.5 L670.1 93.6 L670.8 96.3 L671.4 95.8 L672.1 100.1 L672.7 98.5 L673.4 95.7 L674.0 96.5 L674.7 97.4 L675.3 100.1 L676.0 95.4 L676.6 96.4 L677.3 94.6 L677.9 98.8 L678.6 95.1 L679.2 95.7 L679.9 87.9 L680.5 96.0 L681.2 99.1 L681.8 97.3 L682.5 99.5 L683.1 96.8 L683.8 96.5 L684.4 94.5 L685.1 96.3 L685.7 96.6 L686.4 97.1 L687.0 96.5 L687.7 98.4 L688.3 96.0 L689.0 98.5 L689.6 95.5 L690.3 99.1 L690.9 94.5 L691.6 93.4 L692.2 101.5 L692.9 97.1 L693.5 101.4 L694.2 100.4 L694.8 101.3 L695.5 99.5 L696.1 96.0 L696.8 98.0 L697.4 95.1 L698.1 97.6 L698.7 98.8 L699.4 100.8 L700.0 98.8 L700.7 98.4 L701.3 100.2 L702.0 98.2 L702.6 100.3 L703.3 101.5 L703.9 100.6 L704.6 97.0 L705.2 96.5 L705.9 100.4 L706.5 97.8 L707.2 97.1 L707.8 101.0 L708.5 99.8 L709.1 100.3 L709.8 96.1 L710.4 99.3 L711.1 101.5 L711.7 97.5 L712.4 97.3 L713.0 101.2 L713.7 96.9 L714.3 101.3 L715.0 101.0 L715.6 101.0 L716.3 98.4 L716.9 100.6 L717.6 101.0 L718.2 98.7 L718.9 96.7 L719.5 101.0 L720.2 95.2 L720.8 99.1 L721.5 99.8 L722.1 97.6 L722.8 99.1 L723.4 100.2 L724.1 101.8 L724.7 101.8 L725.4 100.1 L726.0 101.6 L726.7 102.7 L727.3 99.3 L728.0 102.1 L728.6 104.3 L729.3 103.8 L729.9 101.7 L730.6 102.3 L731.2 101.6 L731.9 102.7 L732.5 102.2 L733.2 97.0 L733.8 91.6 L734.5 94.7 L735.1 95.0 L735.8 96.0 L736.4 94.4 L737.1 96.3 L737.7 94.7 L738.4 96.8 L739.0 98.8 L739.7 98.0 L740.3 100.4 L741.0 101.4 L741.6 98.7 L742.3 98.0 L742.9 100.0 L743.6 101.5 L744.2 97.2 L744.9 100.5 L745.5 96.4 L746.2 98.5 L746.8 99.0 L747.5 99.2 L748.1 100.4 L748.8 100.7 L749.4 98.7 L750.1 99.7 L750.7 100.7 L751.4 95.5 L752.0 99.9 L752.7 99.9 L753.3 96.6 L754.0 95.3 L754.6 99.6 L755.3 100.8 L755.9 98.4 L756.6 96.6 L757.2 100.8 L757.9 95.4 L758.5 101.1 L759.2 98.5 L759.8 97.8 L760.5 101.4 L761.1 98.4 L761.8 99.1 L762.4 98.9 L763.1 97.7 L763.7 100.9 L764.4 96.0 L765.0 99.3 L765.7 98.7 L766.3 94.6 L767.0 96.2 L767.6 100.1 L768.3 98.5 L768.9 101.1 L769.6 95.1 L770.2 101.1 L770.9 98.2 L771.5 98.7 L772.2 98.6 L772.8 96.4 L773.5 100.4 L774.1 100.0 L774.8 95.1 L775.4 96.9 L776.1 97.9 L776.7 100.2 L777.4 97.5 L778.0 99.3 L778.7 97.3 L779.3 98.0 L780.0 95.1 L780.6 97.8 L781.3 100.7 L781.9 100.6 L782.6 98.4 L783.2 95.3 L783.9 100.1 L784.5 95.1 L785.2 95.2 L785.8 100.6 L786.5 100.7 L787.1 100.7 L787.8 94.5 L788.4 96.2 L789.1 94.6 L789.7 94.3 L790.4 95.6 L791.0 99.7 L791.7 100.1 L792.3 99.7 L793.0 96.6 L793.6 98.6 L794.3 94.1 L794.9 100.0 L795.6 98.6 L796.2 95.7 L796.9 95.8 L797.5 97.4 L798.2 97.3 L798.8 98.8 L799.5 99.6 L800.1 98.3 L800.8 99.5 L801.4 98.4 L802.1 96.9 L802.7 99.6 L803.4 94.9 L804.0 98.0 L804.7 100.6 L805.3 100.6 L806.0 99.9 L806.6 100.3 L807.3 93.9 L807.9 94.1 L808.6 100.6 L809.2 94.0 L809.9 97.3 L810.5 95.9 L811.2 94.6 L811.8 98.3 L812.5 99.0 L813.1 99.5 L813.8 94.7 L814.4 100.0 L815.1 99.2 L815.7 98.4 L816.4 100.3 L817.0 98.7 L817.7 101.1 L818.3 97.0 L819.0 100.3 L819.6 101.4 L820.3 101.5 L820.9 100.2 L821.6 97.7 L822.2 98.4 L822.9 100.5 L823.5 96.3 L824.2 97.6 L824.8 101.3 L825.5 101.4 L826.1 98.4 L826.8 98.0 L827.4 96.7 L828.1 97.2 L828.7 100.3 L829.4 97.4 L830.0 97.8 L830.7 93.9 L831.3 95.4 L832.0 99.8 L832.6 94.7 L833.3 94.7 L833.9 93.9 L834.6 100.1 L835.2 96.6 L835.9 99.7 L836.5 98.1 L837.2 95.5 L837.8 96.8 L838.5 98.9 L839.1 96.5 L839.8 99.4 L840.4 100.2 L841.1 95.5 L841.7 97.7 L842.4 100.0 L843.0 99.4 L843.7 93.3 L844.3 94.6 L845.0 94.1 L845.6 96.4 L846.3 96.4 L846.9 98.1 L847.6 99.2 L848.2 95.8 L848.9 96.6 L849.5 96.6 L850.2 100.7 L850.8 95.7 L851.5 96.5 L852.1 98.4 L852.8 97.1 L853.4 100.8 L854.1 95.3 L854.7 97.0 L855.4 100.0 L856.0 96.7 L856.7 98.9 L857.3 95.0 L858.0 96.7 L858.6 99.0 L859.3 96.1 L859.9 91.6 L860.6 99.1 L861.2 96.4 L861.9 100.6 L862.5 97.8 L863.2 95.5 L863.8 99.5 L864.5 94.1 L865.1 98.1 L865.8 96.8 L866.4 98.8 L867.1 99.2 L867.7 98.8 L868.4 98.5 L869.0 99.3 L869.7 98.5 L870.3 98.5 L871.0 93.2 L871.6 99.8 L872.3 94.3 L872.9 100.2 L873.6 99.7 L874.2 97.3 L874.9 100.3 L875.5 101.6 L876.2 102.9 L876.8 102.2 L877.5 105.0 L878.1 106.0 L878.8 105.7 L879.4 106.2 L880.1 107.3 L880.7 107.8 L881.4 108.0 L882.0 108.9 L882.7 109.4 L883.3 110.0 L884.0 110.0 L884.6 110.0 L885.3 110.0 L885.9 110.0 L886.6 110.0 L887.2 110.0 L887.9 110.0 L888.5 110.0 L889.2 110.0 L889.8 110.0 L890.5 110.0 L891.1 110.0 L891.8 110.0 L892.4 110.0 L893.1 110.0 L893.7 110.0 L894.4 110.0 L895.0 110.0 L895.7 110.0 L896.3 110.0 L897.0 110.0 L897.6 110.0 L898.3 110.0 L898.9 110.0 L899.6 110.0 L900.2 110.0 L900.9 110.0 L901.5 110.0 L901.5 110.6 L900.9 110.6 L900.2 110.6 L899.6 110.6 L898.9 110.6 L898.3 110.6 L897.6 110.6 L897.0 110.6 L896.3 110.6 L895.7 110.6 L895.0 110.6 L894.4 110.6 L893.7 110.6 L893.1 110.6 L892.4 110.6 L891.8 110.6 L891.1 110.6 L890.5 110.6 L889.8 110.6 L889.2 110.6 L888.5 110.6 L887.9 110.6 L887.2 110.6 L886.6 110.6 L885.9 110.6 L885.3 110.6 L884.6 110.6 L884.0 110.6 L883.3 110.6 L882.7 111.0 L882.0 111.4 L881.4 112.1 L880.7 112.6 L880.1 112.8 L879.4 114.3 L878.8 114.2 L878.1 115.7 L877.5 115.3 L876.8 120.4 L876.2 121.2 L875.5 118.7 L874.9 120.8 L874.2 118.1 L873.6 119.2 L872.9 124.5 L872.3 124.4 L871.6 122.9 L871.0 122.8 L870.3 121.4 L869.7 119.9 L869.0 121.6 L868.4 119.9 L867.7 125.9 L867.1 120.7 L866.4 123.7 L865.8 123.4 L865.1 126.3 L864.5 124.2 L863.8 126.3 L863.2 123.9 L862.5 123.9 L861.9 122.2 L861.2 121.4 L860.6 125.0 L859.9 119.7 L859.3 119.7 L858.6 119.8 L858.0 125.9 L857.3 122.7 L856.7 120.6 L856.0 122.7 L855.4 125.0 L854.7 123.3 L854.1 124.4 L853.4 123.9 L852.8 124.9 L852.1 123.8 L851.5 123.6 L850.8 119.6 L850.2 122.7 L849.5 119.1 L848.9 119.0 L848.2 123.3 L847.6 124.5 L846.9 129.8 L846.3 124.4 L845.6 126.0 L845.0 126.1 L844.3 120.2 L843.7 126.6 L843.0 120.5 L842.4 120.6 L841.7 123.2 L841.1 124.1 L840.4 120.5 L839.8 121.3 L839.1 122.5 L838.5 121.1 L837.8 120.1 L837.2 121.3 L836.5 125.1 L835.9 120.4 L835.2 127.9 L834.6 121.7 L833.9 124.0 L833.3 121.4 L832.6 124.9 L832.0 120.2 L831.3 120.9 L830.7 121.9 L830.0 119.7 L829.4 120.7 L828.7 123.4 L828.1 120.2 L827.4 124.3 L826.8 122.0 L826.1 124.0 L825.5 121.5 L824.8 124.3 L824.2 119.2 L823.5 123.9 L822.9 121.3 L822.2 124.2 L821.6 122.8 L820.9 121.0 L820.3 124.3 L819.6 121.9 L819.0 123.8 L818.3 123.0 L817.7 124.4 L817.0 119.8 L816.4 123.5 L815.7 123.6 L815.1 122.5 L814.4 124.1 L813.8 124.6 L813.1 122.7 L812.5 125.1 L811.8 122.6 L811.2 121.1 L810.5 128.5 L809.9 120.0 L809.2 125.0 L808.6 122.8 L807.9 126.4 L807.3 124.2 L806.6 122.1 L806.0 121.3 L805.3 121.5 L804.7 120.0 L804.0 125.2 L803.4 120.3 L802.7 120.5 L802.1 123.0 L801.4 121.0 L800.8 122.0 L800.1 125.3 L799.5 120.9 L798.8 121.0 L798.2 124.1 L797.5 120.6 L796.9 120.8 L796.2 123.2 L795.6 120.4 L794.9 123.5 L794.3 126.9 L793.6 125.9 L793.0 126.5 L792.3 120.5 L791.7 121.7 L791.0 123.4 L790.4 127.0 L789.7 120.5 L789.1 120.0 L788.4 124.1 L787.8 124.6 L787.1 122.1 L786.5 119.7 L785.8 120.4 L785.2 123.5 L784.5 119.6 L783.9 120.5 L783.2 120.4 L782.6 124.6 L781.9 121.4 L781.3 119.9 L780.6 123.8 L780.0 124.5 L779.3 122.6 L778.7 125.7 L778.0 123.3 L777.4 119.6 L776.7 122.2 L776.1 122.6 L775.4 125.6 L774.8 123.9 L774.1 122.2 L773.5 121.6 L772.8 121.1 L772.2 124.3 L771.5 120.4 L770.9 120.4 L770.2 121.1 L769.6 119.9 L768.9 122.4 L768.3 120.2 L767.6 122.4 L767.0 123.9 L766.3 120.1 L765.7 122.6 L765.0 125.1 L764.4 119.9 L763.7 120.2 L763.1 119.2 L762.4 119.8 L761.8 119.2 L761.1 122.5 L760.5 120.9 L759.8 120.7 L759.2 120.9 L758.5 124.9 L757.9 119.4 L757.2 119.6 L756.6 122.9 L755.9 119.8 L755.3 124.3 L754.6 123.3 L754.0 123.1 L753.3 121.6 L752.7 119.5 L752.0 119.6 L751.4 124.1 L750.7 119.6 L750.1 120.3 L749.4 124.8 L748.8 122.3 L748.1 122.3 L747.5 120.7 L746.8 120.3 L746.2 121.7 L745.5 119.1 L744.9 127.6 L744.2 119.1 L743.6 123.4 L742.9 123.1 L742.3 121.1 L741.6 123.1 L741.0 122.2 L740.3 124.6 L739.7 123.7 L739.0 125.5 L738.4 123.0 L737.7 125.4 L737.1 120.8 L736.4 120.0 L735.8 120.1 L735.1 125.6 L734.5 124.0 L733.8 120.5 L733.2 123.7 L732.5 121.8 L731.9 121.1 L731.2 120.6 L730.6 118.5 L729.9 119.0 L729.3 118.4 L728.6 117.4 L728.0 117.7 L727.3 117.5 L726.7 117.4 L726.0 120.5 L725.4 118.6 L724.7 117.9 L724.1 121.4 L723.4 121.1 L722.8 118.5 L722.1 120.7 L721.5 122.9 L720.8 122.7 L720.2 122.2 L719.5 125.7 L718.9 121.4 L718.2 120.7 L717.6 120.7 L716.9 122.9 L716.3 123.6 L715.6 125.2 L715.0 121.3 L714.3 124.1 L713.7 121.7 L713.0 119.6 L712.4 119.6 L711.7 119.4 L711.1 119.6 L710.4 122.6 L709.8 119.1 L709.1 119.7 L708.5 119.8 L707.8 121.8 L707.2 121.9 L706.5 118.9 L705.9 122.9 L705.2 120.4 L704.6 122.3 L703.9 122.3 L703.3 120.3 L702.6 120.3 L702.0 119.4 L701.3 123.8 L700.7 122.6 L700.0 123.4 L699.4 123.3 L698.7 121.7 L698.1 124.9 L697.4 121.8 L696.8 130.0 L696.1 119.9 L695.5 125.0 L694.8 122.1 L694.2 122.6 L693.5 120.6 L692.9 123.6 L692.2 120.0 L691.6 120.0 L690.9 120.3 L690.3 119.9 L689.6 121.9 L689.0 122.1 L688.3 125.0 L687.7 122.0 L687.0 125.8 L686.4 122.2 L685.7 121.1 L685.1 123.2 L684.4 127.1 L683.8 122.4 L683.1 122.8 L682.5 120.6 L681.8 125.7 L681.2 125.6 L680.5 120.7 L679.9 122.4 L679.2 121.1 L678.6 121.3 L677.9 122.1 L677.3 124.0 L676.6 122.9 L676.0 121.6 L675.3 123.0 L674.7 122.0 L674.0 126.5 L673.4 122.7 L672.7 125.1 L672.1 122.9 L671.4 120.3 L670.8 125.4 L670.1 123.7 L669.5 122.5 L668.8 123.3 L668.2 128.5 L667.5 122.9 L666.9 125.5 L666.2 124.8 L665.6 120.7 L664.9 122.9 L664.3 120.6 L663.6 124.1 L663.0 123.8 L662.3 120.1 L661.7 125.2 L661.0 121.1 L660.4 132.0 L659.7 123.4 L659.1 122.4 L658.4 126.4 L657.8 125.3 L657.1 128.1 L656.5 123.7 L655.8 123.1 L655.2 121.9 L654.5 126.3 L653.9 126.9 L653.2 123.1 L652.6 125.5 L651.9 122.0 L651.3 125.9 L650.6 126.0 L650.0 120.2 L649.3 122.2 L648.7 121.6 L648.0 122.5 L647.4 122.9 L646.7 123.0 L646.1 119.9 L645.4 122.2 L644.8 124.0 L644.1 121.0 L643.5 126.4 L642.8 124.0 L642.2 122.5 L641.5 120.7 L640.9 120.9 L640.2 125.2 L639.6 123.5 L638.9 122.5 L638.3 123.4 L637.6 123.2 L637.0 122.1 L636.3 126.2 L635.7 122.3 L635.0 127.0 L634.4 126.1 L633.7 125.5 L633.1 121.7 L632.4 125.7 L631.8 127.7 L631.1 126.9 L630.5 124.6 L629.8 124.7 L629.2 121.5 L628.5 121.0 L627.9 123.1 L627.2 128.8 L626.6 121.8 L625.9 124.5 L625.3 124.3 L624.6 121.3 L624.0 120.9 L623.3 123.8 L622.7 126.5 L622.0 122.3 L621.4 123.2 L620.7 123.9 L620.1 125.8 L619.4 125.5 L618.8 122.5 L618.1 124.3 L617.5 126.6 L616.8 126.4 L616.2 122.1 L615.5 124.8 L614.9 125.0 L614.2 126.4 L613.6 121.7 L612.9 128.1 L612.3 127.6 L611.6 129.7 L611.0 123.4 L610.3 127.5 L609.7 120.7 L609.0 126.0 L608.4 120.6 L607.7 123.9 L607.1 120.5 L606.4 121.4 L605.8 120.1 L605.1 126.3 L604.5 125.0 L603.8 119.9 L603.2 120.1 L602.5 126.1 L601.9 119.9 L601.2 121.1 L600.6 120.0 L599.9 126.4 L599.3 120.6 L598.6 125.8 L598.0 122.1 L597.3 124.5 L596.7 126.7 L596.0 123.6 L595.4 126.7 L594.7 123.7 L594.1 121.1 L593.4 126.4 L592.8 128.1 L592.1 124.5 L591.5 125.1 L590.8 122.1 L590.2 124.6 L589.5 126.1 L588.9 121.4 L588.2 124.3 L587.6 121.9 L586.9 121.6 L586.3 126.4 L585.6 126.9 L585.0 125.1 L584.3 121.7 L583.7 120.8 L583.0 121.1 L582.4 122.0 L581.7 123.0 L581.1 119.8 L580.4 114.2 L579.8 116.6 L579.1 114.2 L578.5 116.2 L577.8 117.3 L577.2 120.1 L576.5 119.5 L575.9 117.6 L575.2 122.0 L574.6 119.1 L573.9 117.8 L573.3 120.9 L572.6 122.5 L572.0 118.1 L571.3 118.3 L570.7 122.6 L570.0 119.0 L569.4 121.4 L568.7 119.4 L568.1 120.6 L567.4 118.9 L566.8 119.6 L566.1 126.5 L565.5 120.2 L564.8 122.4 L564.2 124.0 L563.5 122.4 L562.9 120.8 L562.2 121.7 L561.6 120.1 L560.9 122.9 L560.3 124.6 L559.6 126.8 L559.0 127.0 L558.3 125.9 L557.7 127.9 L557.0 127.3 L556.4 120.9 L555.7 124.0 L555.1 125.1 L554.4 123.1 L553.8 123.4 L553.1 123.0 L552.5 120.1 L551.8 124.6 L551.2 125.2 L550.5 120.0 L549.9 122.9 L549.2 123.9 L548.6 120.1 L547.9 121.9 L547.3 122.4 L546.6 123.8 L546.0 120.3 L545.3 120.5 L544.7 126.0 L544.0 122.3 L543.4 124.3 L542.7 120.1 L542.1 124.6 L541.4 121.5 L540.8 121.0 L540.1 124.6 L539.5 119.5 L538.8 119.8 L538.2 122.9 L537.5 121.2 L536.9 122.3 L536.2 121.1 L535.6 119.5 L534.9 123.6 L534.3 123.7 L533.6 125.1 L533.0 119.7 L532.3 120.0 L531.7 120.9 L531.0 119.9 L530.4 121.4 L529.7 119.9 L529.1 120.5 L528.4 118.8 L527.8 122.5 L527.1 121.6 L526.5 118.4 L525.8 120.9 L525.2 111.1 L524.5 111.2 L523.9 111.2 L523.2 111.3 L522.6 110.8 L521.9 110.5 L521.3 110.9 L520.6 111.3 L520.0 113.6 L519.3 114.1 L518.7 113.6 L518.0 114.9 L517.4 114.2 L516.7 112.9 L516.1 112.4 L515.4 112.0 L514.8 112.6 L514.1 113.3 L513.5 115.2 L512.8 114.2 L512.2 114.4 L511.5 115.5 L510.9 113.9 L510.2 113.0 L509.6 111.7 L508.9 112.0 L508.3 113.8 L507.6 114.9 L507.0 115.0 L506.3 115.2 L505.7 115.9 L505.0 114.8 L504.4 114.0 L503.7 112.7 L503.1 112.4 L502.4 112.3 L501.8 113.4 L501.1 115.5 L500.5 115.6 L499.8 114.9 L499.2 117.5 L498.5 114.8 L497.9 112.8 L497.2 111.9 L496.6 112.0 L495.9 113.7 L495.3 114.8 L494.6 114.0 L494.0 115.5 L493.3 115.2 L492.7 116.5 L492.0 114.5 L491.4 112.8 L490.7 111.9 L490.1 112.3 L489.4 114.2 L488.8 115.4 L488.1 114.5 L487.5 115.8 L486.8 114.3 L486.2 116.2 L485.5 113.8 L484.9 112.5 L484.2 112.0 L483.6 112.5 L482.9 113.7 L482.3 115.9 L481.6 114.7 L481.0 117.6 L480.3 115.9 L479.7 114.0 L479.0 113.7 L478.4 113.3 L477.7 118.9 L477.1 118.8 L476.4 118.3 L475.8 119.2 L475.1 116.5 L474.5 120.6 L473.8 116.1 L473.2 117.6 L472.5 117.9 L471.9 118.7 L471.2 116.7 L470.6 117.7 L469.9 116.3 L469.3 119.6 L468.6 118.5 L468.0 117.6 L467.3 118.0 L466.7 118.6 L466.0 118.7 L465.4 116.1 L464.7 117.1 L464.1 115.9 L463.4 115.8 L462.8 117.3 L462.1 117.0 L461.5 118.5 L460.8 116.5 L460.2 116.9 L459.5 116.7 L458.9 117.5 L458.2 121.0 L457.6 117.0 L456.9 116.6 L456.3 119.3 L455.6 121.4 L455.0 116.3 L454.3 118.9 L453.7 116.5 L453.0 117.0 L452.4 118.6 L451.7 118.2 L451.1 120.2 L450.4 117.6 L449.8 118.5 L449.1 117.5 L448.5 117.3 L447.8 121.2 L447.2 118.3 L446.5 120.4 L445.9 119.2 L445.2 118.9 L444.6 118.9 L443.9 118.2 L443.3 119.7 L442.6 117.9 L442.0 117.1 L441.3 116.8 L440.7 117.8 L440.0 118.2 L439.4 117.3 L438.7 116.7 L438.1 120.6 L437.4 120.8 L436.8 118.9 L436.1 117.3 L435.5 116.8 L434.8 118.7 L434.2 117.6 L433.5 118.4 L432.9 118.3 L432.2 117.0 L431.6 117.1 L430.9 119.6 L430.3 120.0 L429.6 116.4 L429.0 120.1 L428.3 118.6 L427.7 125.7 L427.0 124.6 L426.4 125.1 L425.7 127.2 L425.1 120.7 L424.4 124.0 L423.8 122.7 L423.1 126.4 L422.5 120.4 L421.8 124.3 L421.2 124.9 L420.5 125.8 L419.9 126.6 L419.2 121.4 L418.6 122.7 L417.9 127.8 L417.3 124.9 L416.6 127.5 L416.0 124.8 L415.3 126.7 L414.7 122.9 L414.0 122.3 L413.4 122.4 L412.7 125.0 L412.1 122.0 L411.4 121.4 L410.8 123.6 L410.1 120.7 L409.5 120.5 L408.8 129.5 L408.2 124.7 L407.5 123.1 L406.9 122.2 L406.2 133.1 L405.6 123.2 L404.9 122.1 L404.3 123.7 L403.6 124.4 L403.0 121.3 L402.3 123.2 L401.7 120.5 L401.0 122.1 L400.4 123.0 L399.7 125.1 L399.1 121.3 L398.4 126.1 L397.8 121.6 L397.1 124.1 L396.5 126.9 L395.8 124.4 L395.2 123.4 L394.5 121.5 L393.9 122.3 L393.2 127.3 L392.6 125.7 L391.9 124.3 L391.3 125.1 L390.6 127.7 L390.0 124.4 L389.3 125.6 L388.7 126.7 L388.0 120.9 L387.4 125.3 L386.7 125.2 L386.1 121.6 L385.4 122.7 L384.8 122.5 L384.1 125.6 L383.5 120.8 L382.8 124.6 L382.2 123.3 L381.5 123.8 L380.9 127.8 L380.2 125.3 L379.6 121.3 L378.9 121.2 L378.3 121.0 L377.6 121.3 L377.0 123.1 L376.3 121.6 L375.7 121.5 L375.0 121.2 L374.4 123.6 L373.7 119.9 L373.1 120.4 L372.4 120.0 L371.8 122.2 L371.1 126.4 L370.5 121.4 L369.8 124.6 L369.2 120.2 L368.5 123.1 L367.9 120.7 L367.2 123.9 L366.6 120.5 L365.9 124.6 L365.3 120.9 L364.6 126.4 L364.0 125.9 L363.3 120.3 L362.7 125.3 L362.0 121.2 L361.4 124.9 L360.7 126.7 L360.1 126.7 L359.4 124.8 L358.8 124.2 L358.1 121.3 L357.5 123.4 L356.8 122.2 L356.2 121.3 L355.5 123.4 L354.9 124.6 L354.2 122.8 L353.6 128.4 L352.9 126.8 L352.3 125.7 L351.6 133.9 L351.0 128.5 L350.3 125.2 L349.7 124.2 L349.0 128.1 L348.4 125.7 L347.7 124.3 L347.1 121.1 L346.4 121.5 L345.8 121.3 L345.1 125.5 L344.5 123.5 L343.8 120.4 L343.2 120.6 L342.5 120.4 L341.9 126.5 L341.2 122.7 L340.6 122.3 L339.9 126.2 L339.3 125.9 L338.6 122.8 L338.0 120.5 L337.3 121.2 L336.7 121.1 L336.0 120.1 L335.4 125.7 L334.7 121.9 L334.1 123.5 L333.4 123.3 L332.8 120.7 L332.1 121.0 L331.5 125.0 L330.8 121.0 L330.2 123.3 L329.5 124.8 L328.9 126.8 L328.2 125.9 L327.6 122.6 L326.9 122.7 L326.3 123.9 L325.6 122.6 L325.0 125.8 L324.3 125.2 L323.7 122.7 L323.0 131.7 L322.4 122.7 L321.7 127.1 L321.1 123.4 L320.4 120.4 L319.8 122.3 L319.1 122.2 L318.5 126.5 L317.8 120.0 L317.2 120.1 L316.5 123.7 L315.9 123.9 L315.2 121.7 L314.6 124.4 L313.9 122.5 L313.3 120.7 L312.6 123.3 L312.0 122.0 L311.3 127.7 L310.7 126.8 L310.0 122.0 L309.4 121.4 L308.7 124.4 L308.1 123.9 L307.4 123.6 L306.8 122.6 L306.1 124.5 L305.5 123.7 L304.8 122.0 L304.2 126.6 L303.5 121.0 L302.9 125.0 L302.2 120.7 L301.6 124.4 L300.9 121.4 L300.3 123.4 L299.7 120.5 L299.0 121.7 L298.4 123.8 L297.7 125.8 L297.1 122.1 L296.4 126.0 L295.8 125.1 L295.1 124.6 L294.5 120.1 L293.8 121.5 L293.2 123.3 L292.5 126.0 L291.9 121.2 L291.2 122.6 L290.6 120.9 L289.9 125.3 L289.3 123.3 L288.6 124.7 L288.0 124.2 L287.3 120.1 L286.7 120.2 L286.0 125.6 L285.4 119.8 L284.7 121.6 L284.1 125.4 L283.4 123.4 L282.8 126.7 L282.1 125.9 L281.5 122.5 L280.8 124.8 L280.2 124.1 L279.5 123.0 L278.9 124.9 L278.2 122.0 L277.6 129.0 L276.9 124.4 L276.3 126.7 L275.6 121.0 L275.0 121.9 L274.3 120.7 L273.7 124.8 L273.0 122.4 L272.4 123.4 L271.7 122.5 L271.1 124.0 L270.4 122.5 L269.8 123.7 L269.1 126.8 L268.5 127.0 L267.8 127.1 L267.2 123.7 L266.5 120.5 L265.9 121.2 L265.2 122.5 L264.6 123.3 L263.9 125.9 L263.3 121.7 L262.6 121.5 L262.0 123.7 L261.3 121.6 L260.7 126.3 L260.0 125.4 L259.4 121.3 L258.7 122.1 L258.1 120.7 L257.4 120.9 L256.8 121.6 L256.1 124.0 L255.5 121.8 L254.8 120.0 L254.2 121.7 L253.5 124.3 L252.9 123.8 L252.2 119.5 L251.6 121.8 L250.9 119.4 L250.3 119.8 L249.6 125.5 L249.0 122.6 L248.3 121.1 L247.7 124.6 L247.0 120.0 L246.4 119.6 L245.7 121.8 L245.1 119.9 L244.4 122.7 L243.8 119.7 L243.1 122.2 L242.5 123.8 L241.8 124.4 L241.2 121.7 L240.5 122.5 L239.9 119.5 L239.2 125.7 L238.6 121.3 L237.9 125.3 L237.3 123.3 L236.6 124.2 L236.0 121.4 L235.3 123.9 L234.7 120.5 L234.0 122.2 L233.4 129.6 L232.7 122.0 L232.1 120.0 L231.4 120.5 L230.8 122.8 L230.1 123.1 L229.5 125.3 L228.8 124.4 L228.2 121.6 L227.5 123.7 L226.9 121.1 L226.2 121.1 L225.6 120.7 L224.9 123.0 L224.3 125.6 L223.6 122.4 L223.0 125.2 L222.3 127.0 L221.7 124.4 L221.0 122.0 L220.4 122.9 L219.7 122.5 L219.1 120.5 L218.4 123.8 L217.8 120.7 L217.1 123.0 L216.5 123.1 L215.8 122.4 L215.2 121.4 L214.5 124.7 L213.9 121.6 L213.2 123.8 L212.6 125.0 L211.9 121.7 L211.3 120.5 L210.6 120.6 L210.0 121.4 L209.3 122.7 L208.7 119.5 L208.0 124.8 L207.4 119.5 L206.7 121.0 L206.1 120.5 L205.4 120.5 L204.8 124.4 L204.1 120.3 L203.5 121.7 L202.8 120.4 L202.2 121.2 L201.5 124.9 L200.9 122.9 L200.2 119.9 L199.6 123.2 L198.9 125.9 L198.3 120.8 L197.6 126.4 L197.0 121.0 L196.3 120.6 L195.7 120.1 L195.0 119.7 L194.4 121.5 L193.7 123.4 L193.1 124.5 L192.4 122.2 L191.8 120.9 L191.1 122.4 L190.5 124.4 L189.8 122.1 L189.2 125.1 L188.5 119.8 L187.9 122.1 L187.2 124.2 L186.6 120.2 L185.9 122.2 L185.3 122.1 L184.6 123.0 L184.0 125.3 L183.3 119.5 L182.7 122.3 L182.0 120.7 L181.4 120.8 L180.7 126.0 L180.1 123.3 L179.4 121.0 L178.8 123.6 L178.1 120.8 L177.5 121.1 L176.8 125.8 L176.2 113.7 L175.5 112.5 L174.9 113.2 L174.2 112.6 L173.6 112.6 L172.9 112.6 L172.3 113.0 L171.6 112.4 L171.0 124.5 L170.3 120.8 L169.7 126.0 L169.0 125.3 L168.4 124.4 L167.7 125.8 L167.1 121.3 L166.4 123.3 L165.8 121.4 L165.1 120.5 L164.5 124.6 L163.8 128.7 L163.2 124.3 L162.5 123.8 L161.9 123.0 L161.2 120.8 L160.6 119.5 L159.9 123.4 L159.3 119.6 L158.6 121.3 L158.0 125.7 L157.3 120.4 L156.7 119.8 L156.0 119.8 L155.4 124.5 L154.7 122.2 L154.1 120.1 L153.4 124.5 L152.8 121.2 L152.1 122.8 L151.5 119.7 L150.8 123.8 L150.2 122.8 L149.5 121.6 L148.9 122.0 L148.2 120.5 L147.6 120.2 L146.9 123.2 L146.3 119.0 L145.6 123.7 L145.0 121.0 L144.3 119.5 L143.7 122.3 L143.0 123.3 L142.4 119.7 L141.7 122.4 L141.1 120.1 L140.4 120.7 L139.8 120.3 L139.1 125.3 L138.5 119.9 L137.8 122.3 L137.2 120.5 L136.5 122.5 L135.9 119.9 L135.2 121.2 L134.6 119.0 L133.9 120.0 L133.3 120.9 L132.6 119.8 L132.0 123.5 L131.3 121.4 L130.7 121.4 L130.0 119.5 L129.4 123.7 L128.7 120.1 L128.1 121.8 L127.4 125.3 L126.8 117.8 L126.1 117.6 L125.5 116.1 L124.8 115.1 L124.2 116.4 L123.5 114.5 L122.9 115.2 L122.2 115.6 L121.6 116.6 L120.9 114.1 L120.3 114.0 L119.6 115.2 L119.0 115.9 L118.3 115.3 L117.7 115.5 L117.0 115.5 L116.4 115.9 L115.7 114.5 L115.1 115.6 L114.4 114.2 L113.8 114.2 L113.1 115.4 L112.5 114.6 L111.8 115.4 L111.2 115.4 L110.5 114.8 L109.9 116.1 L109.2 114.2 L108.6 115.6 L107.9 113.4 L107.3 113.3 L106.6 113.3 L106.0 112.8 L105.3 113.2 L104.7 114.1 L104.0 114.4 L103.4 114.8 L102.7 113.4 L102.1 114.3 L101.4 115.0 L100.8 114.3 L100.1 114.9 L99.5 113.7 L98.8 113.7 L98.2 116.0 L97.5 114.9 L96.9 114.1 L96.2 115.8 L95.6 116.0 L94.9 114.5 L94.3 114.9 L93.6 113.5 L93.0 113.4 L92.3 113.9 L91.7 113.3 L91.0 114.5 L90.4 112.8 L89.7 113.7 L89.1 113.4 L88.4 113.5 L87.8 113.6 L87.1 112.8 L86.5 113.4 L85.8 114.1 L85.2 113.9 L84.5 113.6 L83.9 113.0 L83.2 113.3 L82.6 112.8 L81.9 113.7 L81.3 113.5 L80.6 114.2 L80.0 113.0 L79.3 112.6 L78.7 113.9 L78.0 113.4 L77.4 114.6 L76.7 113.9 L76.1 114.9 L75.4 113.4 L74.8 114.2 L74.1 115.5 L73.5 115.6 L72.8 115.2 L72.1 113.6 L71.5 113.8 L70.8 114.4 L70.2 114.5 L69.5 114.9 L68.9 115.3 L68.2 114.6 L67.6 114.0 L66.9 114.7 L66.3 115.4 L65.6 113.7 L65.0 113.5 L64.3 114.0 L63.7 113.3 L63.0 113.7 L62.4 113.8 L61.7 113.9 L61.1 113.2 L60.4 113.8 L59.8 113.1 L59.1 113.3 L58.5 114.2 L57.8 112.8 L57.2 114.1 L56.5 112.9 L55.9 113.2 L55.2 114.6 L54.6 113.6 L53.9 114.0 L53.3 114.1 L52.6 114.0 L52.0 114.5 L51.3 114.7 L50.7 113.2 L50.0 115.8 L49.4 113.6 L48.7 114.6 L48.1 114.8 L47.4 114.6 L46.8 113.8 L46.1 114.0 L45.5 113.7 L44.8 113.1 L44.2 114.4 L43.5 113.5 L42.9 113.7 L42.2 113.3 L41.6 114.3 L40.9 113.3 L40.3 113.4 L39.6 115.1 L39.0 113.6 L38.3 115.7 L37.7 114.6 L37.0 114.0 L36.4 115.7 L35.7 114.4 L35.1 114.0 L34.4 114.0 L33.8 115.1 L33.1 113.4 L32.5 113.1 L31.8 113.9 L31.2 114.1 L30.5 114.6 L29.9 113.6 L29.2 114.1 L28.6 113.5 L27.9 114.3 L27.3 114.1Z"/></defs>
<use href="#w0" fill="#227a25" clip-path="url(#cl)"/>
<use href="#w0" fill="#3bd53d" clip-path="url(#cs)"/>
<defs><path id="w1" d="M27.3 178.0 L27.9 175.9 L28.6 177.7 L29.2 178.0 L29.9 177.8 L30.5 177.9 L31.2 177.9 L31.8 177.8 L32.5 177.8 L33.1 177.0 L33.8 177.0 L34.4 177.3 L35.1 177.7 L35.7 176.7 L36.4 177.5 L37.0 177.8 L37.7 176.7 L38.3 177.5 L39.0 176.8 L39.6 175.5 L40.3 176.9 L40.9 177.9 L41.6 177.5 L42.2 178.3 L42.9 178.2 L43.5 177.4 L44.2 177.9 L44.8 177.5 L45.5 177.8 L46.1 177.7 L46.8 177.5 L47.4 178.1 L48.1 177.5 L48.7 177.8 L49.4 178.3 L50.0 177.0 L50.7 178.1 L51.3 177.2 L52.0 177.9 L52.6 176.5 L53.3 177.7 L53.9 178.0 L54.6 176.8 L55.2 176.7 L55.9 177.2 L56.5 177.6 L57.2 176.5 L57.8 178.0 L58.5 177.3 L59.1 177.6 L59.8 177.2 L60.4 177.5 L61.1 175.9 L61.7 177.0 L62.4 176.2 L63.0 175.2 L63.7 176.8 L64.3 176.0 L65.0 175.1 L65.6 176.5 L66.3 176.9 L66.9 176.0 L67.6 176.8 L68.2 176.7 L68.9 175.6 L69.5 175.5 L70.2 176.9 L70.8 176.7 L71.5 177.1 L72.1 175.4 L72.8 175.4 L73.5 177.0 L74.1 176.2 L74.8 174.9 L75.4 176.8 L76.1 176.4 L76.7 176.4 L77.4 175.4 L78.0 176.2 L78.7 175.7 L79.3 176.0 L80.0 176.9 L80.6 175.1 L81.3 175.1 L81.9 175.3 L82.6 175.8 L83.2 175.5 L83.9 175.5 L84.5 175.8 L85.2 176.4 L85.8 176.3 L86.5 175.5 L87.1 177.0 L87.8 177.3 L88.4 177.4 L89.1 175.8 L89.7 177.4 L90.4 176.6 L91.0 177.6 L91.7 175.8 L92.3 176.1 L93.0 176.2 L93.6 176.6 L94.3 177.1 L94.9 175.9 L95.6 177.0 L96.2 176.1 L96.9 176.9 L97.5 176.0 L98.2 177.3 L98.8 176.6 L99.5 175.8 L100.1 177.3 L100.8 177.2 L101.4 174.7 L102.1 176.9 L102.7 176.6 L103.4 175.0 L104.0 175.6 L104.7 176.2 L105.3 173.5 L106.0 176.1 L106.6 176.1 L107.3 176.5 L107.9 176.1 L108.6 175.0 L109.2 175.9 L109.9 176.7 L110.5 177.3 L111.2 175.6 L111.8 175.9 L112.5 176.3 L113.1 176.4 L113.8 174.5 L114.4 174.8 L115.1 176.1 L115.7 175.0 L116.4 176.1 L117.0 176.2 L117.7 174.6 L118.3 174.3 L119.0 175.2 L119.6 174.9 L120.3 175.5 L120.9 176.9 L121.6 176.7 L122.2 175.6 L122.9 174.5 L123.5 175.0 L124.2 172.3 L124.8 172.1 L125.5 172.7 L126.1 172.6 L126.8 170.6 L127.4 170.2 L128.1 171.0 L128.7 170.6 L129.4 170.5 L130.0 170.7 L130.7 169.0 L131.3 171.4 L132.0 166.9 L132.6 169.3 L133.3 167.6 L133.9 166.2 L134.6 170.7 L135.2 171.0 L135.9 169.3 L136.5 171.2 L137.2 167.8 L137.8 170.4 L138.5 168.7 L139.1 166.5 L139.8 167.8 L140.4 170.4 L141.1 166.9 L141.7 168.2 L142.4 170.8 L143.0 166.0 L143.7 168.5 L144.3 171.2 L145.0 168.3 L145.6 167.3 L146.3 166.8 L146.9 170.3 L147.6 171.5 L148.2 170.1 L148.9 167.6 L149.5 171.4 L150.2 167.9 L150.8 170.9 L151.5 168.9 L152.1 168.9 L152.8 168.0 L153.4 166.0 L154.1 166.1 L154.7 169.9 L155.4 170.4 L156.0 166.3 L156.7 167.4 L157.3 170.0 L158.0 165.9 L158.6 169.2 L159.3 166.3 L159.9 168.4 L160.6 167.4 L161.2 167.2 L161.9 170.5 L162.5 170.4 L163.2 170.8 L163.8 167.1 L164.5 170.4 L165.1 165.2 L165.8 169.7 L166.4 170.6 L167.1 168.7 L167.7 168.9 L168.4 169.5 L169.0 170.4 L169.7 165.7 L170.3 167.8 L171.0 166.1 L171.6 178.1 L172.3 178.0 L172.9 177.1 L173.6 176.8 L174.2 176.9 L174.9 177.5 L175.5 177.4 L176.2 177.7 L176.8 168.3 L177.5 168.8 L178.1 167.0 L178.8 164.1 L179.4 169.4 L180.1 168.1 L180.7 168.5 L181.4 169.9 L182.0 165.3 L182.7 168.7 L183.3 169.4 L184.0 168.5 L184.6 168.9 L185.3 169.2 L185.9 167.6 L186.6 168.2 L187.2 169.8 L187.9 170.1 L188.5 170.0 L189.2 169.8 L189.8 166.1 L190.5 166.8 L191.1 165.3 L191.8 171.3 L192.4 169.5 L193.1 163.6 L193.7 168.5 L194.4 171.4 L195.0 167.1 L195.7 166.5 L196.3 165.5 L197.0 167.8 L197.6 165.9 L198.3 163.5 L198.9 171.0 L199.6 169.9 L200.2 170.3 L200.9 165.2 L201.5 165.6 L202.2 170.6 L202.8 168.8 L203.5 168.4 L204.1 164.1 L204.8 170.5 L205.4 167.5 L206.1 168.4 L206.7 166.2 L207.4 165.2 L208.0 166.3 L208.7 169.5 L209.3 165.6 L210.0 170.9 L210.6 170.8 L211.3 166.0 L211.9 168.5 L212.6 170.9 L213.2 168.2 L213.9 169.4 L214.5 164.2 L215.2 169.8 L215.8 168.4 L216.5 167.4 L217.1 170.1 L217.8 169.5 L218.4 166.6 L219.1 169.3 L219.7 171.0 L220.4 171.5 L221.0 167.1 L221.7 165.3 L222.3 169.5 L223.0 166.9 L223.6 167.6 L224.3 170.1 L224.9 171.2 L225.6 165.7 L226.2 170.8 L226.9 166.6 L227.5 168.2 L228.2 170.7 L228.8 169.8 L229.5 168.7 L230.1 167.3 L230.8 164.2 L231.4 167.5 L232.1 169.6 L232.7 169.5 L233.4 164.1 L234.0 165.0 L234.7 170.8 L235.3 167.0 L236.0 170.9 L236.6 169.1 L237.3 170.2 L237.9 165.1 L238.6 170.2 L239.2 170.2 L239.9 165.8 L240.5 170.0 L241.2 166.0 L241.8 164.8 L242.5 169.7 L243.1 166.5 L243.8 165.9 L244.4 164.6 L245.1 169.7 L245.7 167.7 L246.4 169.3 L247.0 167.2 L247.7 164.5 L248.3 166.9 L249.0 164.8 L249.6 169.2 L250.3 169.4 L250.9 165.4 L251.6 165.4 L252.2 170.8 L252.9 164.8 L253.5 169.2 L254.2 169.3 L254.8 164.8 L255.5 169.3 L256.1 168.2 L256.8 170.7 L257.4 168.4 L258.1 170.5 L258.7 170.7 L259.4 168.7 L260.0 167.9 L260.7 168.1 L261.3 169.6 L262.0 166.5 L262.6 162.1 L263.3 170.2 L263.9 165.7 L264.6 170.3 L265.2 169.0 L265.9 169.6 L266.5 170.0 L267.2 168.4 L267.8 169.8 L268.5 163.5 L269.1 169.3 L269.8 168.2 L270.4 168.2 L271.1 164.6 L271.7 168.4 L272.4 169.7 L273.0 168.4 L273.7 167.2 L274.3 169.7 L275.0 167.0 L275.6 163.2 L276.3 163.7 L276.9 167.1 L277.6 165.6 L278.2 169.9 L278.9 164.5 L279.5 164.0 L280.2 163.5 L280.8 166.0 L281.5 167.0 L282.1 170.1 L282.8 166.4 L283.4 164.4 L284.1 169.4 L284.7 164.9 L285.4 170.6 L286.0 169.0 L286.7 165.4 L287.3 167.3 L288.0 159.6 L288.6 170.5 L289.3 169.0 L289.9 170.7 L290.6 164.5 L291.2 166.6 L291.9 169.3 L292.5 168.4 L293.2 169.7 L293.8 170.7 L294.5 165.6 L295.1 169.3 L295.8 164.4 L296.4 166.8 L297.1 164.1 L297.7 169.6 L298.4 169.4 L299.0 169.8 L299.7 165.3 L300.3 167.1 L300.9 166.9 L301.6 166.4 L302.2 169.1 L302.9 169.6 L303.5 163.7 L304.2 166.4 L304.8 169.9 L305.5 164.6 L306.1 168.0 L306.8 165.6 L307.4 161.3 L308.1 165.8 L308.7 168.6 L309.4 166.7 L310.0 168.7 L310.7 169.9 L311.3 167.9 L312.0 165.1 L312.6 163.6 L313.3 170.3 L313.9 170.0 L314.6 165.3 L315.2 166.0 L315.9 168.8 L316.5 164.7 L317.2 166.6 L317.8 170.0 L318.5 169.0 L319.1 165.6 L319.8 169.5 L320.4 164.5 L321.1 168.3 L321.7 166.9 L322.4 169.7 L323.0 167.3 L323.7 166.0 L324.3 169.4 L325.0 165.9 L325.6 168.7 L326.3 167.3 L326.9 169.4 L327.6 165.2 L328.2 169.3 L328.9 168.7 L329.5 169.2 L330.2 163.6 L330.8 161.8 L331.5 168.8 L332.1 164.8 L332.8 169.2 L333.4 164.8 L334.1 168.9 L334.7 167.2 L335.4 167.9 L336.0 167.5 L336.7 168.1 L337.3 158.6 L338.0 170.3 L338.6 168.5 L339.3 169.7 L339.9 167.2 L340.6 168.2 L341.2 168.0 L341.9 169.6 L342.5 168.5 L343.2 168.3 L343.8 166.2 L344.5 163.9 L345.1 165.5 L345.8 168.1 L346.4 167.9 L347.1 166.1 L347.7 165.4 L348.4 169.1 L349.0 169.8 L349.7 170.1 L350.3 163.7 L351.0 168.5 L351.6 164.9 L352.3 169.5 L352.9 165.9 L353.6 168.5 L354.2 163.4 L354.9 164.0 L355.5 165.7 L356.2 169.0 L356.8 168.7 L357.5 169.2 L358.1 166.1 L358.8 169.0 L359.4 170.1 L360.1 165.8 L360.7 166.5 L361.4 166.4 L362.0 168.3 L362.7 166.1 L363.3 163.4 L364.0 169.8 L364.6 167.5 L365.3 170.0 L365.9 167.9 L366.6 163.5 L367.2 170.1 L367.9 165.6 L368.5 159.4 L369.2 168.3 L369.8 164.0 L370.5 168.2 L371.1 165.8 L371.8 164.9 L372.4 164.5 L373.1 167.5 L373.7 168.8 L374.4 165.0 L375.0 167.2 L375.7 163.2 L376.3 167.3 L377.0 169.3 L377.6 169.6 L378.3 166.1 L378.9 165.1 L379.6 168.9 L380.2 169.6 L380.9 164.8 L381.5 165.6 L382.2 166.5 L382.8 165.2 L383.5 165.0 L384.1 163.9 L384.8 167.3 L385.4 168.5 L386.1 168.4 L386.7 169.7 L387.4 164.7 L388.0 166.5 L388.7 163.3 L389.3 166.0 L390.0 166.8 L390.6 167.4 L391.3 168.4 L391.9 164.0 L392.6 166.5 L393.2 166.0 L393.9 167.3 L394.5 166.2 L395.2 157.9 L395.8 164.8 L396.5 169.0 L397.1 163.2 L397.8 167.9 L398.4 166.3 L399.1 168.4 L399.7 170.3 L400.4 168.2 L401.0 166.1 L401.7 169.4 L402.3 164.7 L403.0 166.0 L403.6 169.6 L404.3 169.6 L404.9 168.1 L405.6 170.3 L406.2 163.1 L406.9 169.3 L407.5 163.5 L408.2 164.4 L408.8 168.0 L409.5 168.9 L410.1 163.7 L410.8 169.2 L411.4 169.0 L412.1 166.0 L412.7 163.9 L413.4 165.5 L414.0 165.2 L414.7 163.8 L415.3 166.1 L416.0 165.6 L416.6 163.5 L417.3 167.6 L417.9 169.9 L418.6 162.8 L419.2 169.5 L419.9 166.6 L420.5 169.6 L421.2 170.4 L421.8 165.3 L422.5 170.7 L423.1 168.8 L423.8 165.2 L424.4 169.6 L425.1 166.0 L425.7 164.2 L426.4 164.6 L427.0 162.4 L427.7 164.5 L428.3 172.3 L429.0 173.6 L429.6 173.8 L430.3 174.3 L430.9 174.3 L431.6 173.8 L432.2 172.0 L432.9 172.6 L433.5 171.9 L434.2 170.3 L434.8 171.4 L435.5 171.0 L436.1 171.1 L436.8 171.6 L437.4 172.0 L438.1 172.1 L438.7 170.8 L439.4 173.0 L440.0 173.5 L440.7 170.5 L441.3 172.6 L442.0 172.8 L442.6 172.9 L443.3 173.3 L443.9 170.2 L444.6 171.7 L445.2 172.2 L445.9 170.3 L446.5 171.2 L447.2 173.8 L447.8 173.6 L448.5 169.7 L449.1 172.0 L449.8 170.9 L450.4 172.6 L451.1 166.8 L451.7 172.9 L452.4 171.6 L453.0 172.5 L453.7 174.0 L454.3 173.2 L455.0 172.4 L455.6 174.0 L456.3 173.7 L456.9 170.3 L457.6 171.0 L458.2 173.5 L458.9 172.8 L459.5 170.4 L460.2 174.0 L460.8 174.1 L461.5 173.3 L462.1 171.8 L462.8 172.0 L463.4 173.9 L464.1 173.4 L464.7 173.2 L465.4 169.1 L466.0 172.5 L466.7 171.0 L467.3 173.8 L468.0 171.1 L468.6 174.2 L469.3 170.8 L469.9 173.9 L470.6 172.4 L471.2 174.4 L471.9 173.9 L472.5 170.9 L473.2 173.2 L473.8 174.2 L474.5 172.9 L475.1 173.0 L475.8 174.5 L476.4 173.3 L477.1 174.7 L477.7 171.9 L478.4 178.4 L479.0 174.9 L479.7 174.8 L480.3 174.4 L481.0 175.4 L481.6 175.7 L482.3 175.0 L482.9 175.1 L483.6 177.9 L484.2 178.6 L484.9 178.1 L485.5 175.8 L486.2 174.7 L486.8 174.8 L487.5 173.5 L488.1 175.2 L488.8 175.2 L489.4 175.2 L490.1 177.7 L490.7 178.6 L491.4 177.3 L492.0 177.1 L492.7 176.4 L493.3 175.6 L494.0 174.6 L494.6 175.9 L495.3 175.7 L495.9 177.1 L496.6 178.2 L497.2 178.0 L497.9 177.6 L498.5 174.9 L499.2 176.2 L499.8 175.7 L500.5 175.7 L501.1 176.1 L501.8 177.3 L502.4 177.2 L503.1 179.2 L503.7 178.3 L504.4 176.3 L505.0 176.6 L505.7 176.5 L506.3 176.1 L507.0 176.0 L507.6 175.7 L508.3 176.4 L508.9 177.9 L509.6 178.7 L510.2 177.6 L510.9 176.9 L511.5 177.1 L512.2 175.8 L512.8 175.6 L513.5 176.3 L514.1 174.5 L514.8 178.1 L515.4 178.8 L516.1 178.1 L516.7 177.0 L517.4 175.9 L518.0 175.4 L518.7 176.2 L519.3 176.1 L520.0 176.2 L520.6 179.4 L521.3 179.8 L521.9 180.0 L522.6 179.9 L523.2 179.3 L523.9 179.4 L524.5 179.4 L525.2 179.5 L525.8 169.7 L526.5 171.9 L527.1 169.1 L527.8 169.9 L528.4 171.4 L529.1 164.5 L529.7 170.4 L530.4 171.8 L531.0 169.4 L531.7 171.4 L532.3 169.8 L533.0 168.2 L533.6 168.6 L534.3 170.3 L534.9 170.8 L535.6 165.9 L536.2 165.2 L536.9 164.2 L537.5 167.2 L538.2 167.5 L538.8 167.2 L539.5 168.1 L540.1 165.6 L540.8 163.8 L541.4 165.7 L542.1 163.0 L542.7 170.1 L543.4 163.9 L544.0 170.1 L544.7 169.6 L545.3 167.8 L546.0 167.7 L546.6 170.4 L547.3 163.8 L547.9 161.1 L548.6 164.2 L549.2 168.0 L549.9 164.3 L550.5 169.4 L551.2 171.0 L551.8 170.7 L552.5 170.6 L553.1 169.3 L553.8 163.8 L554.4 170.9 L555.1 170.1 L555.7 170.5 L556.4 165.4 L557.0 165.5 L557.7 170.6 L558.3 166.1 L559.0 170.3 L559.6 163.8 L560.3 164.8 L560.9 168.1 L561.6 167.9 L562.2 170.5 L562.9 168.1 L563.5 168.4 L564.2 166.0 L564.8 167.1 L565.5 166.0 L566.1 171.2 L566.8 167.8 L567.4 169.4 L568.1 168.9 L568.7 169.8 L569.4 167.0 L570.0 169.3 L570.7 171.4 L571.3 169.3 L572.0 171.0 L572.6 172.8 L573.3 168.4 L573.9 171.2 L574.6 172.7 L575.2 173.2 L575.9 171.7 L576.5 172.6 L577.2 173.9 L577.8 172.4 L578.5 173.8 L579.1 176.6 L579.8 177.4 L580.4 176.6 L581.1 165.4 L581.7 168.5 L582.4 167.0 L583.0 166.1 L583.7 164.3 L584.3 168.8 L585.0 166.5 L585.6 168.0 L586.3 166.3 L586.9 168.9 L587.6 164.1 L588.2 164.6 L588.9 168.9 L589.5 165.6 L590.2 164.0 L590.8 164.1 L591.5 164.2 L592.1 163.4 L592.8 163.9 L593.4 170.0 L594.1 169.1 L594.7 163.4 L595.4 166.5 L596.0 165.2 L596.7 167.8 L597.3 168.8 L598.0 167.9 L598.6 169.9 L599.3 170.0 L599.9 170.4 L600.6 170.2 L601.2 164.0 L601.9 163.8 L602.5 166.8 L603.2 169.7 L603.8 169.0 L604.5 163.9 L605.1 169.6 L605.8 169.4 L606.4 167.4 L607.1 168.0 L607.7 169.1 L608.4 166.7 L609.0 167.0 L609.7 166.6 L610.3 169.0 L611.0 164.6 L611.6 167.6 L612.3 167.0 L612.9 169.8 L613.6 162.6 L614.2 164.1 L614.9 163.4 L615.5 169.2 L616.2 166.8 L616.8 167.4 L617.5 170.2 L618.1 167.2 L618.8 169.0 L619.4 170.7 L620.1 168.5 L620.7 169.2 L621.4 168.1 L622.0 166.2 L622.7 159.8 L623.3 168.6 L624.0 164.3 L624.6 169.4 L625.3 167.5 L625.9 169.8 L626.6 164.7 L627.2 168.0 L627.9 165.8 L628.5 162.9 L629.2 170.4 L629.8 169.3 L630.5 169.1 L631.1 167.6 L631.8 169.8 L632.4 169.8 L633.1 167.8 L633.7 165.2 L634.4 164.0 L635.0 167.3 L635.7 169.6 L636.3 167.2 L637.0 167.6 L637.6 166.8 L638.3 165.9 L638.9 168.9 L639.6 163.5 L640.2 169.9 L640.9 167.0 L641.5 165.8 L642.2 165.6 L642.8 168.0 L643.5 164.0 L644.1 169.4 L644.8 166.3 L645.4 166.4 L646.1 168.8 L646.7 170.0 L647.4 169.2 L648.0 164.1 L648.7 168.8 L649.3 167.7 L650.0 169.7 L650.6 167.8 L651.3 164.7 L651.9 167.5 L652.6 169.8 L653.2 166.1 L653.9 169.3 L654.5 167.8 L655.2 158.9 L655.8 164.5 L656.5 166.0 L657.1 169.9 L657.8 168.0 L658.4 170.7 L659.1 164.2 L659.7 166.3 L660.4 168.8 L661.0 169.1 L661.7 165.1 L662.3 169.4 L663.0 163.9 L663.6 164.0 L664.3 168.0 L664.9 170.1 L665.6 167.0 L666.2 169.0 L666.9 169.9 L667.5 168.5 L668.2 164.4 L668.8 166.9 L669.5 166.5 L670.1 168.7 L670.8 170.2 L671.4 166.6 L672.1 167.1 L672.7 169.5 L673.4 166.2 L674.0 164.1 L674.7 169.6 L675.3 162.5 L676.0 168.8 L676.6 165.3 L677.3 163.5 L677.9 170.0 L678.6 167.9 L679.2 169.5 L679.9 167.5 L680.5 169.6 L681.2 169.8 L681.8 166.3 L682.5 168.0 L683.1 159.5 L683.8 165.6 L684.4 166.8 L685.1 164.2 L685.7 164.9 L686.4 162.2 L687.0 169.5 L687.7 162.7 L688.3 165.1 L689.0 169.7 L689.6 168.3 L690.3 166.7 L690.9 167.7 L691.6 170.6 L692.2 168.9 L692.9 171.3 L693.5 170.3 L694.2 165.3 L694.8 169.3 L695.5 169.3 L696.1 170.7 L696.8 168.4 L697.4 169.1 L698.1 168.4 L698.7 167.4 L699.4 167.5 L700.0 167.1 L700.7 166.1 L701.3 165.7 L702.0 166.1 L702.6 170.2 L703.3 171.1 L703.9 166.0 L704.6 169.8 L705.2 170.3 L705.9 170.1 L706.5 164.9 L707.2 167.2 L707.8 168.7 L708.5 170.2 L709.1 167.5 L709.8 167.9 L710.4 165.9 L711.1 166.9 L711.7 166.0 L712.4 166.7 L713.0 169.2 L713.7 168.9 L714.3 170.7 L715.0 169.3 L715.6 168.8 L716.3 169.7 L716.9 168.9 L717.6 169.0 L718.2 166.0 L718.9 168.8 L719.5 165.0 L720.2 167.1 L720.8 168.2 L721.5 167.5 L722.1 171.1 L722.8 170.4 L723.4 171.3 L724.1 170.7 L724.7 170.6 L725.4 172.1 L726.0 170.5 L726.7 173.6 L727.3 172.5 L728.0 173.0 L728.6 167.7 L729.3 171.5 L729.9 171.6 L730.6 170.3 L731.2 171.1 L731.9 167.7 L732.5 172.2 L733.2 164.0 L733.8 167.4 L734.5 169.4 L735.1 166.4 L735.8 167.5 L736.4 164.7 L737.1 165.4 L737.7 165.8 L738.4 169.8 L739.0 166.1 L739.7 168.5 L740.3 169.5 L741.0 166.1 L741.6 168.0 L742.3 168.9 L742.9 166.9 L743.6 170.7 L744.2 164.6 L744.9 168.2 L745.5 164.6 L746.2 170.0 L746.8 167.4 L747.5 167.4 L748.1 170.4 L748.8 170.4 L749.4 165.8 L750.1 165.8 L750.7 168.3 L751.4 168.3 L752.0 163.8 L752.7 163.8 L753.3 166.9 L754.0 165.8 L754.6 161.1 L755.3 169.0 L755.9 164.1 L756.6 168.0 L757.2 168.7 L757.9 169.7 L758.5 170.4 L759.2 170.4 L759.8 169.4 L760.5 166.6 L761.1 166.2 L761.8 168.1 L762.4 169.4 L763.1 167.8 L763.7 168.2 L764.4 170.8 L765.0 167.4 L765.7 166.5 L766.3 169.1 L767.0 165.8 L767.6 171.0 L768.3 166.3 L768.9 166.6 L769.6 166.5 L770.2 169.7 L770.9 168.9 L771.5 169.4 L772.2 169.1 L772.8 164.6 L773.5 169.3 L774.1 167.0 L774.8 165.5 L775.4 167.6 L776.1 168.3 L776.7 167.6 L777.4 166.3 L778.0 170.6 L778.7 164.8 L779.3 165.6 L780.0 165.9 L780.6 169.1 L781.3 168.6 L781.9 170.9 L782.6 165.1 L783.2 166.6 L783.9 168.4 L784.5 167.9 L785.2 167.2 L785.8 167.8 L786.5 169.9 L787.1 168.5 L787.8 165.0 L788.4 168.3 L789.1 170.9 L789.7 169.3 L790.4 170.0 L791.0 164.7 L791.7 169.1 L792.3 169.3 L793.0 161.6 L793.6 169.5 L794.3 170.1 L794.9 163.4 L795.6 168.3 L796.2 164.7 L796.9 165.3 L797.5 169.0 L798.2 170.3 L798.8 168.5 L799.5 169.6 L800.1 168.6 L800.8 169.7 L801.4 169.9 L802.1 166.0 L802.7 170.2 L803.4 167.6 L804.0 169.3 L804.7 169.6 L805.3 170.1 L806.0 170.2 L806.6 164.0 L807.3 168.2 L807.9 165.9 L808.6 169.2 L809.2 168.6 L809.9 167.1 L810.5 168.8 L811.2 167.1 L811.8 165.0 L812.5 167.3 L813.1 164.8 L813.8 159.6 L814.4 167.0 L815.1 170.4 L815.7 166.6 L816.4 169.7 L817.0 164.9 L817.7 169.8 L818.3 169.5 L819.0 169.5 L819.6 168.2 L820.3 168.5 L820.9 165.5 L821.6 170.5 L822.2 170.4 L822.9 165.5 L823.5 170.5 L824.2 167.2 L824.8 168.1 L825.5 168.8 L826.1 168.9 L826.8 165.8 L827.4 169.0 L828.1 167.1 L828.7 168.2 L829.4 170.1 L830.0 168.9 L830.7 167.1 L831.3 169.7 L832.0 162.9 L832.6 171.0 L833.3 170.8 L833.9 166.7 L834.6 170.6 L835.2 168.4 L835.9 167.9 L836.5 167.1 L837.2 168.4 L837.8 166.0 L838.5 170.7 L839.1 166.8 L839.8 167.2 L840.4 169.8 L841.1 167.1 L841.7 171.1 L842.4 170.7 L843.0 165.4 L843.7 168.7 L844.3 168.7 L845.0 166.0 L845.6 168.2 L846.3 165.0 L846.9 169.5 L847.6 164.9 L848.2 168.6 L848.9 170.0 L849.5 169.4 L850.2 164.8 L850.8 170.4 L851.5 163.6 L852.1 165.2 L852.8 163.9 L853.4 170.0 L854.1 170.0 L854.7 165.4 L855.4 170.5 L856.0 170.6 L856.7 167.8 L857.3 165.0 L858.0 165.0 L858.6 170.6 L859.3 170.4 L859.9 170.4 L860.6 168.2 L861.2 170.0 L861.9 170.3 L862.5 164.9 L863.2 167.0 L863.8 164.4 L864.5 167.6 L865.1 159.8 L865.8 166.7 L866.4 170.4 L867.1 171.1 L867.7 168.3 L868.4 165.6 L869.0 170.7 L869.7 165.1 L870.3 171.2 L871.0 168.2 L871.6 167.4 L872.3 170.7 L872.9 170.7 L873.6 170.5 L874.2 167.2 L874.9 169.4 L875.5 166.3 L876.2 170.6 L876.8 173.1 L877.5 174.7 L878.1 176.5 L878.8 177.0 L879.4 177.0 L880.1 177.3 L880.7 178.1 L881.4 178.3 L882.0 178.7 L882.7 179.5 L883.3 180.0 L884.0 180.0 L884.6 180.0 L885.3 180.0 L885.9 180.0 L886.6 180.0 L887.2 180.0 L887.9 180.0 L888.5 180.0 L889.2 180.0 L889.8 180.0 L890.5 180.0 L891.1 180.0 L891.8 180.0 L892.4 180.0 L893.1 180.0 L893.7 180.0 L894.4 180.0 L895.0 180.0 L895.7 180.0 L896.3 180.0 L897.0 180.0 L897.6 180.0 L898.3 180.0 L898.9 180.0 L899.6 180.0 L900.2 180.0 L900.9 180.0 L901.5 180.0 L901.5 180.6 L900.9 180.6 L900.2 180.6 L899.6 180.6 L898.9 180.6 L898.3 180.6 L897.6 180.6 L897.0 180.6 L896.3 180.6 L895.7 180.6 L895.0 180.6 L894.4 180.6 L893.7 180.6 L893.1 180.6 L892.4 180.6 L891.8 180.6 L891.1 180.6 L890.5 180.6 L889.8 180.6 L889.2 180.6 L888.5 180.6 L887.9 180.6 L887.2 180.6 L886.6 180.6 L885.9 180.6 L885.3 180.6 L884.6 180.6 L884.0 180.6 L883.3 180.6 L882.7 181.1 L882.0 181.8 L881.4 182.2 L880.7 182.3 L880.1 183.9 L879.4 184.1 L878.8 184.7 L878.1 184.7 L877.5 184.7 L876.8 191.7 L876.2 190.9 L875.5 191.9 L874.9 189.3 L874.2 190.5 L873.6 188.8 L872.9 192.9 L872.3 193.3 L871.6 191.1 L871.0 196.9 L870.3 196.9 L869.7 193.1 L869.0 194.5 L868.4 194.6 L867.7 194.8 L867.1 194.3 L866.4 193.0 L865.8 196.7 L865.1 195.6 L864.5 191.6 L863.8 193.1 L863.2 194.5 L862.5 191.8 L861.9 191.4 L861.2 194.5 L860.6 194.9 L859.9 191.5 L859.3 195.8 L858.6 193.3 L858.0 192.3 L857.3 196.0 L856.7 191.3 L856.0 194.3 L855.4 196.9 L854.7 191.0 L854.1 194.0 L853.4 193.6 L852.8 196.4 L852.1 194.4 L851.5 197.9 L850.8 194.3 L850.2 192.3 L849.5 196.1 L848.9 198.8 L848.2 191.3 L847.6 193.9 L846.9 194.7 L846.3 195.3 L845.6 192.7 L845.0 192.6 L844.3 191.6 L843.7 190.6 L843.0 193.5 L842.4 191.4 L841.7 193.5 L841.1 194.0 L840.4 194.0 L839.8 194.4 L839.1 191.7 L838.5 195.4 L837.8 190.4 L837.2 192.8 L836.5 195.3 L835.9 193.5 L835.2 195.4 L834.6 192.9 L833.9 195.8 L833.3 192.1 L832.6 196.2 L832.0 193.1 L831.3 196.2 L830.7 193.5 L830.0 196.3 L829.4 192.6 L828.7 194.6 L828.1 192.0 L827.4 191.0 L826.8 197.0 L826.1 195.4 L825.5 194.0 L824.8 191.4 L824.2 191.2 L823.5 194.7 L822.9 194.0 L822.2 191.3 L821.6 198.1 L820.9 195.3 L820.3 198.0 L819.6 194.8 L819.0 194.4 L818.3 197.2 L817.7 191.9 L817.0 195.4 L816.4 191.2 L815.7 194.6 L815.1 197.1 L814.4 192.3 L813.8 191.2 L813.1 191.9 L812.5 196.1 L811.8 195.0 L811.2 196.5 L810.5 196.7 L809.9 191.9 L809.2 195.3 L808.6 195.3 L807.9 195.9 L807.3 198.5 L806.6 196.1 L806.0 193.8 L805.3 192.1 L804.7 197.7 L804.0 195.4 L803.4 192.3 L802.7 192.6 L802.1 196.4 L801.4 194.9 L800.8 195.5 L800.1 197.2 L799.5 195.6 L798.8 196.5 L798.2 197.3 L797.5 196.7 L796.9 193.8 L796.2 193.0 L795.6 197.0 L794.9 195.8 L794.3 195.0 L793.6 196.6 L793.0 193.7 L792.3 193.2 L791.7 195.0 L791.0 194.2 L790.4 193.7 L789.7 193.6 L789.1 191.5 L788.4 194.3 L787.8 190.9 L787.1 195.3 L786.5 192.9 L785.8 193.4 L785.2 192.5 L784.5 196.6 L783.9 196.5 L783.2 197.1 L782.6 195.5 L781.9 192.0 L781.3 194.5 L780.6 193.9 L780.0 197.6 L779.3 197.9 L778.7 192.4 L778.0 193.9 L777.4 197.7 L776.7 191.1 L776.1 197.5 L775.4 197.9 L774.8 191.0 L774.1 196.0 L773.5 193.1 L772.8 195.4 L772.2 192.9 L771.5 196.9 L770.9 193.7 L770.2 194.2 L769.6 190.5 L768.9 194.6 L768.3 194.2 L767.6 195.1 L767.0 190.6 L766.3 190.6 L765.7 192.7 L765.0 197.0 L764.4 195.9 L763.7 191.7 L763.1 193.9 L762.4 200.2 L761.8 193.1 L761.1 192.9 L760.5 194.9 L759.8 191.1 L759.2 196.8 L758.5 191.4 L757.9 193.1 L757.2 191.9 L756.6 193.8 L755.9 192.1 L755.3 191.2 L754.6 192.7 L754.0 196.3 L753.3 197.1 L752.7 193.4 L752.0 196.4 L751.4 196.3 L750.7 195.1 L750.1 193.0 L749.4 198.7 L748.8 195.8 L748.1 196.2 L747.5 191.4 L746.8 196.1 L746.2 196.5 L745.5 193.1 L744.9 200.1 L744.2 193.0 L743.6 194.2 L742.9 197.8 L742.3 193.9 L741.6 191.0 L741.0 192.0 L740.3 193.6 L739.7 192.0 L739.0 191.9 L738.4 201.5 L737.7 196.4 L737.1 191.5 L736.4 192.2 L735.8 197.4 L735.1 192.1 L734.5 191.6 L733.8 196.2 L733.2 197.7 L732.5 194.4 L731.9 188.8 L731.2 190.9 L730.6 192.2 L729.9 188.9 L729.3 187.6 L728.6 187.5 L728.0 188.9 L727.3 190.8 L726.7 189.1 L726.0 192.4 L725.4 188.0 L724.7 191.4 L724.1 189.6 L723.4 190.4 L722.8 190.0 L722.1 189.5 L721.5 191.0 L720.8 191.7 L720.2 191.6 L719.5 192.6 L718.9 192.9 L718.2 190.3 L717.6 193.7 L716.9 191.3 L716.3 195.0 L715.6 195.3 L715.0 195.9 L714.3 194.4 L713.7 190.9 L713.0 194.9 L712.4 195.2 L711.7 192.8 L711.1 191.2 L710.4 191.2 L709.8 190.9 L709.1 196.6 L708.5 195.5 L707.8 193.6 L707.2 194.7 L706.5 194.6 L705.9 193.5 L705.2 191.2 L704.6 191.7 L703.9 191.7 L703.3 194.5 L702.6 194.2 L702.0 191.3 L701.3 190.2 L700.7 196.6 L700.0 191.1 L699.4 193.3 L698.7 191.9 L698.1 193.9 L697.4 194.2 L696.8 190.4 L696.1 196.4 L695.5 192.7 L694.8 196.6 L694.2 193.7 L693.5 196.3 L692.9 190.9 L692.2 194.2 L691.6 195.9 L690.9 191.8 L690.3 196.8 L689.6 192.2 L689.0 191.9 L688.3 197.6 L687.7 198.0 L687.0 196.5 L686.4 191.9 L685.7 192.3 L685.1 197.3 L684.4 198.8 L683.8 192.8 L683.1 191.6 L682.5 191.1 L681.8 194.2 L681.2 196.7 L680.5 196.6 L679.9 191.3 L679.2 197.5 L678.6 198.5 L677.9 195.5 L677.3 196.3 L676.6 192.0 L676.0 196.9 L675.3 197.9 L674.7 196.3 L674.0 197.9 L673.4 195.1 L672.7 199.4 L672.1 199.3 L671.4 193.6 L670.8 203.5 L670.1 193.0 L669.5 194.2 L668.8 192.8 L668.2 197.0 L667.5 198.3 L666.9 195.3 L666.2 194.2 L665.6 191.3 L664.9 192.5 L664.3 198.0 L663.6 195.3 L663.0 196.0 L662.3 194.3 L661.7 192.9 L661.0 191.7 L660.4 192.4 L659.7 191.7 L659.1 196.7 L658.4 192.6 L657.8 197.8 L657.1 197.2 L656.5 191.6 L655.8 194.9 L655.2 192.4 L654.5 202.1 L653.9 191.6 L653.2 192.0 L652.6 198.4 L651.9 192.3 L651.3 194.3 L650.6 198.1 L650.0 192.5 L649.3 193.4 L648.7 198.4 L648.0 195.4 L647.4 199.5 L646.7 197.7 L646.1 197.1 L645.4 193.8 L644.8 196.9 L644.1 192.3 L643.5 195.9 L642.8 199.0 L642.2 197.2 L641.5 193.2 L640.9 197.4 L640.2 197.3 L639.6 191.8 L638.9 196.8 L638.3 191.9 L637.6 194.2 L637.0 193.5 L636.3 205.5 L635.7 192.9 L635.0 192.0 L634.4 201.6 L633.7 199.5 L633.1 199.0 L632.4 196.0 L631.8 192.4 L631.1 192.3 L630.5 198.3 L629.8 194.3 L629.2 198.1 L628.5 191.6 L627.9 192.0 L627.2 191.6 L626.6 198.9 L625.9 197.2 L625.3 195.3 L624.6 197.5 L624.0 195.6 L623.3 193.2 L622.7 194.8 L622.0 197.3 L621.4 192.4 L620.7 191.1 L620.1 191.8 L619.4 192.2 L618.8 197.8 L618.1 195.5 L617.5 194.6 L616.8 193.2 L616.2 195.1 L615.5 191.2 L614.9 192.7 L614.2 193.3 L613.6 191.3 L612.9 192.2 L612.3 196.2 L611.6 191.9 L611.0 196.5 L610.3 197.3 L609.7 204.0 L609.0 194.9 L608.4 198.8 L607.7 199.4 L607.1 193.0 L606.4 195.9 L605.8 199.4 L605.1 193.4 L604.5 193.0 L603.8 199.5 L603.2 191.8 L602.5 191.6 L601.9 198.5 L601.2 197.1 L600.6 193.5 L599.9 191.6 L599.3 191.2 L598.6 193.8 L598.0 195.6 L597.3 192.0 L596.7 194.0 L596.0 196.1 L595.4 194.5 L594.7 191.7 L594.1 191.6 L593.4 198.9 L592.8 197.4 L592.1 191.9 L591.5 200.8 L590.8 192.0 L590.2 196.8 L589.5 197.0 L588.9 194.7 L588.2 192.3 L587.6 191.7 L586.9 192.5 L586.3 198.0 L585.6 199.8 L585.0 198.3 L584.3 192.2 L583.7 198.0 L583.0 192.2 L582.4 196.6 L581.7 197.8 L581.1 196.5 L580.4 183.9 L579.8 183.7 L579.1 184.4 L578.5 190.7 L577.8 191.0 L577.2 188.4 L576.5 191.1 L575.9 189.3 L575.2 189.2 L574.6 191.3 L573.9 188.7 L573.3 193.3 L572.6 191.9 L572.0 190.0 L571.3 191.2 L570.7 193.7 L570.0 189.4 L569.4 189.8 L568.7 190.3 L568.1 194.5 L567.4 190.2 L566.8 194.1 L566.1 195.8 L565.5 193.0 L564.8 196.8 L564.2 190.7 L563.5 195.9 L562.9 195.9 L562.2 191.6 L561.6 193.0 L560.9 197.5 L560.3 196.2 L559.6 191.8 L559.0 198.0 L558.3 197.0 L557.7 196.3 L557.0 192.3 L556.4 191.1 L555.7 197.8 L555.1 196.0 L554.4 195.0 L553.8 197.2 L553.1 194.1 L552.5 191.7 L551.8 200.9 L551.2 192.5 L550.5 190.6 L549.9 200.3 L549.2 195.8 L548.6 196.6 L547.9 196.0 L547.3 194.5 L546.6 192.6 L546.0 192.7 L545.3 197.2 L544.7 191.9 L544.0 197.5 L543.4 196.6 L542.7 193.7 L542.1 198.8 L541.4 194.2 L540.8 194.4 L540.1 198.4 L539.5 197.0 L538.8 198.6 L538.2 191.3 L537.5 197.7 L536.9 198.4 L536.2 193.2 L535.6 191.1 L534.9 192.7 L534.3 192.6 L533.6 192.5 L533.0 192.7 L532.3 196.4 L531.7 192.9 L531.0 189.9 L530.4 195.5 L529.7 194.3 L529.1 190.2 L528.4 193.3 L527.8 191.4 L527.1 189.6 L526.5 190.9 L525.8 189.1 L525.2 181.1 L524.5 181.2 L523.9 181.2 L523.2 181.3 L522.6 180.7 L521.9 180.6 L521.3 180.9 L520.6 181.1 L520.0 184.5 L519.3 183.4 L518.7 184.8 L518.0 183.5 L517.4 183.3 L516.7 183.7 L516.1 182.6 L515.4 181.6 L514.8 183.1 L514.1 183.1 L513.5 184.0 L512.8 184.4 L512.2 185.2 L511.5 184.9 L510.9 183.0 L510.2 182.9 L509.6 182.2 L508.9 182.6 L508.3 182.9 L507.6 185.5 L507.0 185.2 L506.3 184.4 L505.7 186.2 L505.0 183.7 L504.4 184.2 L503.7 182.4 L503.1 181.9 L502.4 183.0 L501.8 184.6 L501.1 183.6 L500.5 187.6 L499.8 185.2 L499.2 184.0 L498.5 184.7 L497.9 183.5 L497.2 182.8 L496.6 182.0 L495.9 182.5 L495.3 183.4 L494.6 183.7 L494.0 186.7 L493.3 184.4 L492.7 184.3 L492.0 183.6 L491.4 184.0 L490.7 182.0 L490.1 183.6 L489.4 183.5 L488.8 185.6 L488.1 187.4 L487.5 184.7 L486.8 186.8 L486.2 184.3 L485.5 184.0 L484.9 183.2 L484.2 181.6 L483.6 184.0 L482.9 183.9 L482.3 186.3 L481.6 184.5 L481.0 185.1 L480.3 185.1 L479.7 184.2 L479.0 183.6 L478.4 182.7 L477.7 185.8 L477.1 188.5 L476.4 186.4 L475.8 187.7 L475.1 188.6 L474.5 188.1 L473.8 186.2 L473.2 188.4 L472.5 187.1 L471.9 187.2 L471.2 190.3 L470.6 189.7 L469.9 188.0 L469.3 188.4 L468.6 188.5 L468.0 188.8 L467.3 186.5 L466.7 188.3 L466.0 187.8 L465.4 189.1 L464.7 190.1 L464.1 190.1 L463.4 187.5 L462.8 187.1 L462.1 190.3 L461.5 190.6 L460.8 188.3 L460.2 187.7 L459.5 190.3 L458.9 187.3 L458.2 188.8 L457.6 187.3 L456.9 187.8 L456.3 190.0 L455.6 187.7 L455.0 187.3 L454.3 187.0 L453.7 186.9 L453.0 187.4 L452.4 188.0 L451.7 191.7 L451.1 188.1 L450.4 190.2 L449.8 187.3 L449.1 192.0 L448.5 188.6 L447.8 192.2 L447.2 190.3 L446.5 190.2 L445.9 187.9 L445.2 188.0 L444.6 188.0 L443.9 188.7 L443.3 189.3 L442.6 191.6 L442.0 188.4 L441.3 190.3 L440.7 189.8 L440.0 190.7 L439.4 188.9 L438.7 190.5 L438.1 187.5 L437.4 189.1 L436.8 195.0 L436.1 190.6 L435.5 187.0 L434.8 191.3 L434.2 187.7 L433.5 187.0 L432.9 186.9 L432.2 187.0 L431.6 189.1 L430.9 187.0 L430.3 190.1 L429.6 190.0 L429.0 191.1 L428.3 188.0 L427.7 193.0 L427.0 191.9 L426.4 196.4 L425.7 194.1 L425.1 192.1 L424.4 197.4 L423.8 198.6 L423.1 196.0 L422.5 197.3 L421.8 191.3 L421.2 196.4 L420.5 198.2 L419.9 203.5 L419.2 196.4 L418.6 196.1 L417.9 192.3 L417.3 196.3 L416.6 194.2 L416.0 197.6 L415.3 194.5 L414.7 192.4 L414.0 195.6 L413.4 196.0 L412.7 191.5 L412.1 191.6 L411.4 195.8 L410.8 191.5 L410.1 197.7 L409.5 195.4 L408.8 200.0 L408.2 192.9 L407.5 191.3 L406.9 196.7 L406.2 195.1 L405.6 191.3 L404.9 198.4 L404.3 197.1 L403.6 193.1 L403.0 195.8 L402.3 192.8 L401.7 192.5 L401.0 194.7 L400.4 191.6 L399.7 191.4 L399.1 195.1 L398.4 196.4 L397.8 195.8 L397.1 194.5 L396.5 195.0 L395.8 192.0 L395.2 195.2 L394.5 197.2 L393.9 192.4 L393.2 192.8 L392.6 193.5 L391.9 192.3 L391.3 192.5 L390.6 191.2 L390.0 192.6 L389.3 196.4 L388.7 191.9 L388.0 198.6 L387.4 192.2 L386.7 192.0 L386.1 193.8 L385.4 192.3 L384.8 194.5 L384.1 193.7 L383.5 193.8 L382.8 196.1 L382.2 195.5 L381.5 191.5 L380.9 192.0 L380.2 195.7 L379.6 198.7 L378.9 196.2 L378.3 191.8 L377.6 195.0 L377.0 196.4 L376.3 194.5 L375.7 193.4 L375.0 192.1 L374.4 198.4 L373.7 192.2 L373.1 192.1 L372.4 199.1 L371.8 192.7 L371.1 192.8 L370.5 195.8 L369.8 198.1 L369.2 191.6 L368.5 194.1 L367.9 195.0 L367.2 196.4 L366.6 195.4 L365.9 193.7 L365.3 194.4 L364.6 192.1 L364.0 191.9 L363.3 198.2 L362.7 197.5 L362.0 193.5 L361.4 198.4 L360.7 193.7 L360.1 192.0 L359.4 193.5 L358.8 191.4 L358.1 197.3 L357.5 196.5 L356.8 198.3 L356.2 198.7 L355.5 199.2 L354.9 192.7 L354.2 196.8 L353.6 193.4 L352.9 197.4 L352.3 197.4 L351.6 193.6 L351.0 198.2 L350.3 198.7 L349.7 193.4 L349.0 193.3 L348.4 191.8 L347.7 192.1 L347.1 192.9 L346.4 196.0 L345.8 198.2 L345.1 196.9 L344.5 197.8 L343.8 192.8 L343.2 192.8 L342.5 198.1 L341.9 195.6 L341.2 192.2 L340.6 193.1 L339.9 191.9 L339.3 191.2 L338.6 195.7 L338.0 196.3 L337.3 196.1 L336.7 191.7 L336.0 191.4 L335.4 192.6 L334.7 191.7 L334.1 198.6 L333.4 197.8 L332.8 193.2 L332.1 193.3 L331.5 191.9 L330.8 192.6 L330.2 196.0 L329.5 194.5 L328.9 199.1 L328.2 192.6 L327.6 197.0 L326.9 200.0 L326.3 199.2 L325.6 195.1 L325.0 198.3 L324.3 195.4 L323.7 194.4 L323.0 195.8 L322.4 193.0 L321.7 198.5 L321.1 193.5 L320.4 197.9 L319.8 191.7 L319.1 196.3 L318.5 195.5 L317.8 193.5 L317.2 198.0 L316.5 198.0 L315.9 192.5 L315.2 194.3 L314.6 193.0 L313.9 195.9 L313.3 193.0 L312.6 194.3 L312.0 192.4 L311.3 197.3 L310.7 192.1 L310.0 196.2 L309.4 192.1 L308.7 191.3 L308.1 196.2 L307.4 195.4 L306.8 197.0 L306.1 192.4 L305.5 191.6 L304.8 193.0 L304.2 196.7 L303.5 195.3 L302.9 193.2 L302.2 193.2 L301.6 192.2 L300.9 198.4 L300.3 197.5 L299.7 192.2 L299.0 197.9 L298.4 195.5 L297.7 191.4 L297.1 192.9 L296.4 192.4 L295.8 196.3 L295.1 191.0 L294.5 192.3 L293.8 195.2 L293.2 191.3 L292.5 191.2 L291.9 192.7 L291.2 191.5 L290.6 193.3 L289.9 193.4 L289.3 202.4 L288.6 190.8 L288.0 194.0 L287.3 197.9 L286.7 197.7 L286.0 191.4 L285.4 192.2 L284.7 194.9 L284.1 193.4 L283.4 198.3 L282.8 197.2 L282.1 191.5 L281.5 195.6 L280.8 197.0 L280.2 193.0 L279.5 196.9 L278.9 195.3 L278.2 198.5 L277.6 192.5 L276.9 194.8 L276.3 194.2 L275.6 194.4 L275.0 202.4 L274.3 198.0 L273.7 197.9 L273.0 192.2 L272.4 197.5 L271.7 198.0 L271.1 192.7 L270.4 198.0 L269.8 194.9 L269.1 192.6 L268.5 193.8 L267.8 192.2 L267.2 191.9 L266.5 194.2 L265.9 192.2 L265.2 196.0 L264.6 194.1 L263.9 191.3 L263.3 194.0 L262.6 192.3 L262.0 193.3 L261.3 190.6 L260.7 195.2 L260.0 194.5 L259.4 195.0 L258.7 195.6 L258.1 194.9 L257.4 190.6 L256.8 192.3 L256.1 195.4 L255.5 193.9 L254.8 195.4 L254.2 196.4 L253.5 195.4 L252.9 197.6 L252.2 192.4 L251.6 191.7 L250.9 196.7 L250.3 191.7 L249.6 195.1 L249.0 190.9 L248.3 191.1 L247.7 190.9 L247.0 191.1 L246.4 191.0 L245.7 193.2 L245.1 193.1 L244.4 192.9 L243.8 195.9 L243.1 201.7 L242.5 192.0 L241.8 192.9 L241.2 196.1 L240.5 190.8 L239.9 194.3 L239.2 193.9 L238.6 195.1 L237.9 197.7 L237.3 194.8 L236.6 192.3 L236.0 193.7 L235.3 195.1 L234.7 190.8 L234.0 196.2 L233.4 195.0 L232.7 192.9 L232.1 196.3 L231.4 191.5 L230.8 194.7 L230.1 191.3 L229.5 197.5 L228.8 194.9 L228.2 196.6 L227.5 195.5 L226.9 191.1 L226.2 191.7 L225.6 191.4 L224.9 194.3 L224.3 194.7 L223.6 192.8 L223.0 195.2 L222.3 194.7 L221.7 194.7 L221.0 191.9 L220.4 190.1 L219.7 196.0 L219.1 192.3 L218.4 194.4 L217.8 199.6 L217.1 195.1 L216.5 195.0 L215.8 192.5 L215.2 196.5 L214.5 193.4 L213.9 192.1 L213.2 191.1 L212.6 191.2 L211.9 194.4 L211.3 195.1 L210.6 194.0 L210.0 190.7 L209.3 190.7 L208.7 194.7 L208.0 191.6 L207.4 194.0 L206.7 192.1 L206.1 196.0 L205.4 193.8 L204.8 191.0 L204.1 195.2 L203.5 195.1 L202.8 191.8 L202.2 194.2 L201.5 195.5 L200.9 196.8 L200.2 197.2 L199.6 192.9 L198.9 192.8 L198.3 195.2 L197.6 194.2 L197.0 194.2 L196.3 193.1 L195.7 190.1 L195.0 191.0 L194.4 191.2 L193.7 190.2 L193.1 190.5 L192.4 195.4 L191.8 195.9 L191.1 191.5 L190.5 190.3 L189.8 190.4 L189.2 191.3 L188.5 190.5 L187.9 194.1 L187.2 195.5 L186.6 190.1 L185.9 192.8 L185.3 195.3 L184.6 190.4 L184.0 194.7 L183.3 190.7 L182.7 193.6 L182.0 190.1 L181.4 195.1 L180.7 191.3 L180.1 193.6 L179.4 196.9 L178.8 197.2 L178.1 196.6 L177.5 198.3 L176.8 197.8 L176.2 184.4 L175.5 183.7 L174.9 183.3 L174.2 183.3 L173.6 184.0 L172.9 182.6 L172.3 183.2 L171.6 184.9 L171.0 197.3 L170.3 195.8 L169.7 195.1 L169.0 193.4 L168.4 193.8 L167.7 195.6 L167.1 190.5 L166.4 190.4 L165.8 191.3 L165.1 191.3 L164.5 193.4 L163.8 191.6 L163.2 193.8 L162.5 197.5 L161.9 194.6 L161.2 193.1 L160.6 193.8 L159.9 192.3 L159.3 193.1 L158.6 196.7 L158.0 194.8 L157.3 193.8 L156.7 196.0 L156.0 195.0 L155.4 196.8 L154.7 196.3 L154.1 193.8 L153.4 194.4 L152.8 193.6 L152.1 196.0 L151.5 190.1 L150.8 194.5 L150.2 196.2 L149.5 194.8 L148.9 193.5 L148.2 195.5 L147.6 191.9 L146.9 192.6 L146.3 193.2 L145.6 190.6 L145.0 192.6 L144.3 197.0 L143.7 194.4 L143.0 190.9 L142.4 191.8 L141.7 191.3 L141.1 191.0 L140.4 192.7 L139.8 192.9 L139.1 194.3 L138.5 192.9 L137.8 191.4 L137.2 191.5 L136.5 196.7 L135.9 195.3 L135.2 195.5 L134.6 196.1 L133.9 193.0 L133.3 190.1 L132.6 193.7 L132.0 191.1 L131.3 196.2 L130.7 194.2 L130.0 194.3 L129.4 193.7 L128.7 193.4 L128.1 190.9 L127.4 193.0 L126.8 190.0 L126.1 188.1 L125.5 187.9 L124.8 189.7 L124.2 187.6 L123.5 186.7 L122.9 187.0 L122.2 184.1 L121.6 184.5 L120.9 184.3 L120.3 184.1 L119.6 184.7 L119.0 184.7 L118.3 185.3 L117.7 185.8 L117.0 186.7 L116.4 186.7 L115.7 185.3 L115.1 187.5 L114.4 184.4 L113.8 184.5 L113.1 185.4 L112.5 184.9 L111.8 183.5 L111.2 183.7 L110.5 184.8 L109.9 184.1 L109.2 185.2 L108.6 185.8 L107.9 186.1 L107.3 185.2 L106.6 185.8 L106.0 184.4 L105.3 184.5 L104.7 184.6 L104.0 186.5 L103.4 184.1 L102.7 184.8 L102.1 183.8 L101.4 184.0 L100.8 183.5 L100.1 184.6 L99.5 183.2 L98.8 183.3 L98.2 185.0 L97.5 184.0 L96.9 184.3 L96.2 183.5 L95.6 185.4 L94.9 184.3 L94.3 184.5 L93.6 183.4 L93.0 184.2 L92.3 184.4 L91.7 183.8 L91.0 183.1 L90.4 183.6 L89.7 182.9 L89.1 184.3 L88.4 183.6 L87.8 183.2 L87.1 185.1 L86.5 184.8 L85.8 185.6 L85.2 184.0 L84.5 184.2 L83.9 185.5 L83.2 185.3 L82.6 183.9 L81.9 185.6 L81.3 184.3 L80.6 183.5 L80.0 184.4 L79.3 185.1 L78.7 184.7 L78.0 185.4 L77.4 183.3 L76.7 184.2 L76.1 184.3 L75.4 183.9 L74.8 184.0 L74.1 183.5 L73.5 184.2 L72.8 184.8 L72.1 184.2 L71.5 183.6 L70.8 184.1 L70.2 183.5 L69.5 183.4 L68.9 184.0 L68.2 185.4 L67.6 183.4 L66.9 184.5 L66.3 184.3 L65.6 183.9 L65.0 184.1 L64.3 184.6 L63.7 185.1 L63.0 184.5 L62.4 183.3 L61.7 183.9 L61.1 183.3 L60.4 183.2 L59.8 183.4 L59.1 183.1 L58.5 183.3 L57.8 183.6 L57.2 183.6 L56.5 183.4 L55.9 183.3 L55.2 184.2 L54.6 183.7 L53.9 182.8 L53.3 184.1 L52.6 183.6 L52.0 182.5 L51.3 182.9 L50.7 183.6 L50.0 184.1 L49.4 183.0 L48.7 182.2 L48.1 182.2 L47.4 182.5 L46.8 182.9 L46.1 182.3 L45.5 182.5 L44.8 182.7 L44.2 182.6 L43.5 182.8 L42.9 182.3 L42.2 182.4 L41.6 183.5 L40.9 182.5 L40.3 183.6 L39.6 183.1 L39.0 182.7 L38.3 183.1 L37.7 183.2 L37.0 183.6 L36.4 184.1 L35.7 183.0 L35.1 184.3 L34.4 183.1 L33.8 183.0 L33.1 183.6 L32.5 183.3 L31.8 183.1 L31.2 183.1 L30.5 183.9 L29.9 182.7 L29.2 183.5 L28.6 182.5 L27.9 182.7 L27.3 183.2Z"/></defs>
<use href="#w1" fill="#227a25" clip-path="url(#cl)"/>
<use href="#w1" fill="#3bd53d" clip-path="url(#cs)"/>
<rect x="206.9" y="73" width="0.8" height="144" fill="#acacac"/>
<rect x="691.3000000000001" y="73" width="0.8" height="144" fill="#acacac"/>
<clipPath id="wc"><use href="#w0"/><use href="#w1"/></clipPath>
<g clip-path="url(#wc)"><rect x="206.9" y="73" width="0.8" height="144" fill="#98e298"/><rect x="691.3000000000001" y="73" width="0.8" height="144" fill="#98e298"/></g>
<text x="135.8" y="71.1" text-anchor="middle" font-size="6.1" font-weight="bold" fill="#fff">00:01:00.03</text>
<text x="135.8" y="223.9" text-anchor="middle" font-size="6.1" font-weight="bold" fill="#fff">00:01:00.03</text>
<text x="245.1" y="71.1" text-anchor="middle" font-size="6.1" font-weight="bold" fill="#fff">00:02:00.07</text>
<text x="245.1" y="223.9" text-anchor="middle" font-size="6.1" font-weight="bold" fill="#fff">00:02:00.07</text>
<text x="354.4" y="71.1" text-anchor="middle" font-size="6.1" font-weight="bold" fill="#fff">00:03:00.10</text>
<text x="354.4" y="223.9" text-anchor="middle" font-size="6.1" font-weight="bold" fill="#fff">00:03:00.10</text>
<text x="463.7" y="71.1" text-anchor="middle" font-size="6.1" font-weight="bold" fill="#fff">00:04:00.14</text>
<text x="463.7" y="223.9" text-anchor="middle" font-size="6.1" font-weight="bold" fill="#fff">00:04:00.14</text>
<text x="573.0" y="71.1" text-anchor="middle" font-size="6.1" font-weight="bold" fill="#fff">00:05:00.17</text>
<text x="573.0" y="223.9" text-anchor="middle" font-size="6.1" font-weight="bold" fill="#fff">00:05:00.17</text>
<text x="682.3" y="71.1" text-anchor="middle" font-size="6.1" font-weight="bold" fill="#fff">00:06:00.21</text>
<text x="682.3" y="223.9" text-anchor="middle" font-size="6.1" font-weight="bold" fill="#fff">00:06:00.21</text>
<text x="791.6" y="71.1" text-anchor="middle" font-size="6.1" font-weight="bold" fill="#fff">00:07:00.24</text>
<text x="791.6" y="223.9" text-anchor="middle" font-size="6.1" font-weight="bold" fill="#fff">00:07:00.24</text>
<text x="1.9" y="80.1" font-size="5.9" font-weight="bold" fill="#fff">1.0</text>
<text x="902.9" y="80.1" font-size="5.9" font-weight="bold" fill="#fff">1.0</text>
<text x="1.9" y="88.2" font-size="5.9" font-weight="bold" fill="#fff">0.8</text>
<text x="902.9" y="88.2" font-size="5.9" font-weight="bold" fill="#fff">0.8</text>
<text x="1.9" y="96.3" font-size="5.9" font-weight="bold" fill="#fff">0.5</text>
<text x="902.9" y="96.3" font-size="5.9" font-weight="bold" fill="#fff">0.5</text>
<text x="1.9" y="104.4" font-size="5.9" font-weight="bold" fill="#fff">0.3</text>
<text x="902.9" y="104.4" font-size="5.9" font-weight="bold" fill="#fff">0.3</text>
<text x="1.7" y="120.6" font-size="5.9" font-weight="bold" fill="#fff">-0.3</text>
<text x="902.9" y="120.6" font-size="5.9" font-weight="bold" fill="#fff">-0.3</text>
<text x="1.7" y="128.7" font-size="5.9" font-weight="bold" fill="#fff">-0.5</text>
<text x="902.9" y="128.7" font-size="5.9" font-weight="bold" fill="#fff">-0.5</text>
<text x="1.7" y="136.8" font-size="5.9" font-weight="bold" fill="#fff">-0.8</text>
<text x="902.9" y="136.8" font-size="5.9" font-weight="bold" fill="#fff">-0.8</text>
<text x="1.7" y="144.9" font-size="5.9" font-weight="bold" fill="#fff">-1.0</text>
<text x="902.9" y="144.9" font-size="5.9" font-weight="bold" fill="#fff">-1.0</text>
<text x="1.9" y="150.0" font-size="5.9" font-weight="bold" fill="#fff">1.0</text>
<text x="902.9" y="150.0" font-size="5.9" font-weight="bold" fill="#fff">1.0</text>
<text x="1.9" y="158.1" font-size="5.9" font-weight="bold" fill="#fff">0.8</text>
<text x="902.9" y="158.1" font-size="5.9" font-weight="bold" fill="#fff">0.8</text>
<text x="1.9" y="166.2" font-size="5.9" font-weight="bold" fill="#fff">0.5</text>
<text x="902.9" y="166.2" font-size="5.9" font-weight="bold" fill="#fff">0.5</text>
<text x="1.9" y="174.3" font-size="5.9" font-weight="bold" fill="#fff">0.3</text>
<text x="902.9" y="174.3" font-size="5.9" font-weight="bold" fill="#fff">0.3</text>
<text x="1.7" y="190.6" font-size="5.9" font-weight="bold" fill="#fff">-0.3</text>
<text x="902.9" y="190.6" font-size="5.9" font-weight="bold" fill="#fff">-0.3</text>
<text x="1.7" y="198.7" font-size="5.9" font-weight="bold" fill="#fff">-0.5</text>
<text x="902.9" y="198.7" font-size="5.9" font-weight="bold" fill="#fff">-0.5</text>
<text x="1.7" y="206.8" font-size="5.9" font-weight="bold" fill="#fff">-0.8</text>
<text x="902.9" y="206.8" font-size="5.9" font-weight="bold" fill="#fff">-0.8</text>
<text x="1.7" y="214.9" font-size="5.9" font-weight="bold" fill="#fff">-1.0</text>
<text x="902.9" y="214.9" font-size="5.9" font-weight="bold" fill="#fff">-1.0</text>
</svg>
<div style="left:0px;top:226px;width:928px;height:6px;background:#e4e4e4;border-top:0.5px solid #fff;"></div>
<div style="left:9px;top:226.4px;width:912px;height:5.2px;background:linear-gradient(#f8f8f8,#e4e4e4 50%,#cdcdcd);border:0.5px solid #b4b4b4;border-radius:1px;"></div>
<span class="t" style="top:224.40px;line-height:10px;font-size:5.56px;color:#333;left:-96.5px;width:200px;text-align:center;transform:scaleX(0.9);transform-origin:50% 50%;">◂</span>
<span class="t" style="top:224.40px;line-height:10px;font-size:5.56px;color:#333;left:824px;width:200px;text-align:center;transform:scaleX(0.9);transform-origin:50% 50%;">▸</span>
<span class="t" style="top:224.40px;line-height:10px;font-size:4.44px;color:#555;left:364px;width:200px;text-align:center;transform:scaleX(0.9);transform-origin:50% 50%;">⦀</span>
<div style="left:928px;top:43.5px;width:43px;height:189px;background:#f0f0f0;"></div>
<div style="left:929.6px;top:44.6px;width:0.8px;height:187.4px;background:#a8a8a8;"></div>
<div style="left:929.6px;top:44.6px;width:42px;height:0.6px;background:#b4b4b4;"></div>
<div style="left:930.4px;top:45.2px;width:0.8px;height:186.8px;background:#fff;"></div>
<span class="t" style="top:48.60px;line-height:10px;font-size:6.33px;color:#222;left:852.5px;width:200px;text-align:center;transform:scaleX(0.9);transform-origin:50% 50%;">Start Frame:</span>
<div style="left:930.8px;top:59px;width:40.2px;height:8.6px;background:#fff;border:0.6px solid #c4c8ce;"></div>
<span class="t" style="top:58.70px;line-height:10px;font-size:6.22px;color:#222;left:932.3px;transform:scaleX(0.9);transform-origin:0 50%;">3786</span>
<div style="left:963px;top:59.5px;width:7.6px;height:7.6px;background:#ececec;border:0.5px solid #aaa;"></div>
<span class="t" style="top:56.80px;line-height:10px;font-size:5.56px;color:#222;left:866.8px;width:200px;text-align:center;transform:scaleX(0.9);transform-origin:50% 50%;">▴</span>
<span class="t" style="top:60.70px;line-height:10px;font-size:5.56px;color:#222;left:866.8px;width:200px;text-align:center;transform:scaleX(0.9);transform-origin:50% 50%;">▾</span>
<div style="left:931.2px;top:69.3px;width:39.8px;height:0.6px;background:#c4c4c4;"></div>
<div style="left:931.2px;top:70px;width:0.7px;height:8.5px;background:#a0a0a0;"></div>
<span class="t" style="top:69.70px;line-height:10px;font-size:6.22px;color:#222;left:852px;width:200px;text-align:center;transform:scaleX(0.9);transform-origin:50% 50%;">00:01:30.88</span>
<span class="t" style="top:80.60px;line-height:10px;font-size:6.33px;color:#222;left:852.5px;width:200px;text-align:center;transform:scaleX(0.9);transform-origin:50% 50%;">End Frame:</span>
<div style="left:930.8px;top:91.3px;width:40.2px;height:8.6px;background:#fff;border:0.6px solid #c4c8ce;"></div>
<span class="t" style="top:91.00px;line-height:10px;font-size:6.22px;color:#222;left:932.3px;transform:scaleX(0.9);transform-origin:0 50%;">13983</span>
<div style="left:963px;top:91.8px;width:7.6px;height:7.6px;background:#ececec;border:0.5px solid #aaa;"></div>
<span class="t" style="top:89.10px;line-height:10px;font-size:5.56px;color:#222;left:866.8px;width:200px;text-align:center;transform:scaleX(0.9);transform-origin:50% 50%;">▴</span>
<span class="t" style="top:93.00px;line-height:10px;font-size:5.56px;color:#222;left:866.8px;width:200px;text-align:center;transform:scaleX(0.9);transform-origin:50% 50%;">▾</span>
<div style="left:931.2px;top:103px;width:39.8px;height:0.6px;background:#c4c4c4;"></div>
<div style="left:931.2px;top:103.7px;width:0.7px;height:8.5px;background:#a0a0a0;"></div>
<span class="t" style="top:102.70px;line-height:10px;font-size:6.22px;color:#222;left:852px;width:200px;text-align:center;transform:scaleX(0.9);transform-origin:50% 50%;">00:06:05.20</span>
<svg style="left:936px;top:115px" width="6.3" height="7.3" viewBox="0 0 10 10" preserveAspectRatio="none"><path d="M0.5 0 L10 5 L0.5 10Z" fill="#2a3cc8"/></svg>
<div style="left:947.2px;top:115.3px;width:2.8px;height:6.8px;background:#2a3cc8;"></div>
<div style="left:951px;top:115.3px;width:2.8px;height:6.8px;background:#2a3cc8;"></div>
<div style="left:959px;top:115.3px;width:7px;height:6.8px;background:#2a3cc8;"></div>
<svg style="left:936px;top:128.3px" width="6.5" height="7" viewBox="0 0 10 10" preserveAspectRatio="none"><path d="M0.5 0 L10 5 L0.5 10Z" fill="#2eaa2e"/></svg>
<svg style="left:948px;top:128.3px" width="6.5" height="7" viewBox="0 0 10 10" preserveAspectRatio="none"><path d="M0.5 0 L10 5 L0.5 10Z" fill="#c8b820"/></svg>
<svg style="left:959.5px;top:128.3px" width="6.5" height="7" viewBox="0 0 10 10" preserveAspectRatio="none"><path d="M0.5 0 L10 5 L0.5 10Z" fill="#d03030"/></svg>
<div style="left:931.2px;top:204.2px;width:39.8px;height:0.6px;background:#c4c4c4;"></div>
<div style="left:931.2px;top:204.2px;width:0.7px;height:9px;background:#a0a0a0;"></div>
<div style="left:931.2px;top:213.6px;width:39.8px;height:0.6px;background:#c4c4c4;"></div>
<div style="left:931.2px;top:213.6px;width:0.7px;height:9px;background:#a0a0a0;"></div>
<div style="left:931.2px;top:222.7px;width:39.8px;height:0.6px;background:#c4c4c4;"></div>
<div style="left:931.2px;top:222.7px;width:0.7px;height:9px;background:#a0a0a0;"></div>
<span class="t" style="top:204.40px;line-height:10px;font-size:6.22px;color:#222;left:852px;width:200px;text-align:center;transform:scaleX(0.9);transform-origin:50% 50%;">00:04:26.32</span>
<span class="t" style="top:213.60px;line-height:10px;font-size:6.22px;color:#222;left:852px;width:200px;text-align:center;transform:scaleX(0.9);transform-origin:50% 50%;">-6.47 MB</span>
<span class="t" style="top:222.70px;line-height:10px;font-size:6.22px;color:#222;left:852px;width:200px;text-align:center;transform:scaleX(0.9);transform-origin:50% 50%;">00:02:29.60</span>
<div style="left:0px;top:232px;width:971px;height:1px;background:#fff;"></div>
<div style="left:0px;top:233px;width:971px;height:0.8px;background:#c8c8c8;"></div>
<span class="t" style="top:233.20px;line-height:10px;font-size:6.33px;color:#222;left:4px;transform:scaleX(0.9);transform-origin:0 50%;">G:\MP3s\Air</span>
<div style="left:34px;top:237.6px;width:266px;height:0.6px;background:#e2e6ea;"></div>
<div style="left:12.5px;top:242.8px;width:272px;height:10px;background:#fff;border:0.6px solid #dcdfe4;"></div>
<div style="left:15.1px;top:243.6px;width:6.4px;height:7.8px;background:linear-gradient(90deg,#f6e08a,#f2d670 45%,#e2b840 55%,#eccc60);border-radius:0.8px;"></div>
<span class="t" style="top:243.60px;line-height:10px;font-size:6.33px;color:#222;left:25px;transform:scaleX(0.9);transform-origin:0 50%;">Air</span>
<span class="t" style="top:243.20px;line-height:10px;font-size:6.11px;color:#000;left:180.8px;width:200px;text-align:center;transform:scaleX(0.9);transform-origin:50% 50%;">▾</span>
<div style="left:12.5px;top:254.2px;width:272px;height:10px;background:#fff;border:0.6px solid #dcdfe4;"></div>
<div style="left:14.9px;top:255.1px;width:20px;height:6.9px;background:#3392ff;"></div>
<span class="t" style="top:254.30px;line-height:10px;font-size:6.33px;color:#fff;left:15.3px;transform:scaleX(0.9);transform-origin:0 50%;">Streams</span>
<span class="t" style="top:254.60px;line-height:10px;font-size:6.11px;color:#000;left:180.8px;width:200px;text-align:center;transform:scaleX(0.9);transform-origin:50% 50%;">▾</span>
<div style="left:3px;top:244.3px;width:7.2px;height:6.7px;background:radial-gradient(#b8e8fa 25%,#f0d468 55%,#e0b840);border-radius:2px;"></div>
<div style="left:8.3px;top:249.3px;width:2px;height:2px;background:#6a5a4a;border-radius:1px;"></div>
<div style="left:3px;top:255.8px;width:7.5px;height:7.5px;background:radial-gradient(#fff 15%,#d8d0f0 50%,#a9a4c8);border-radius:4px;"></div>
<svg style="left:288.5px;top:243.5px" width="8" height="9" viewBox="0 0 8 9"><path d="M1.2 0.4 H7.4 L6.6 7.6 L5 5.4 L3.2 5.8 L2.6 1.8 L1.2 1.6Z" fill="#3aa836"/><path d="M3.4 1.6H5.8L5.5 4.2H3.8Z" fill="#9fdc90"/></svg>
<svg style="left:288.5px;top:255px" width="9" height="9" viewBox="0 0 9 9"><path d="M3.4 0.4H5.6V3.4H8.6V5.6H5.6V8.6H3.4V5.6H0.4V3.4H3.4Z" fill="#38b424" stroke="#2b9a1c" stroke-width="0.3"/></svg>
<div style="left:0.5px;top:264.8px;width:298px;height:271.4px;background:#fff;border:0.7px solid #a8acb2;border-top:0.9px solid #8c8c8c;"></div>
<div style="left:1.2px;top:266.3px;width:296.6px;height:11.2px;background:linear-gradient(#ffffff,#f8f9fb 60%,#eef0f4);border-bottom:0.6px solid #d8dce4;"></div>
<div style="left:153.3px;top:266.3px;width:0.7px;height:11.2px;background:#dde1e8;"></div>
<div style="left:186px;top:266.3px;width:0.7px;height:11.2px;background:#dde1e8;"></div>
<div style="left:232.4px;top:266.3px;width:0.7px;height:11.2px;background:#dde1e8;"></div>
<div style="left:296.6px;top:266.3px;width:0.7px;height:11.2px;background:#dde1e8;"></div>
<span class="t" style="top:267.70px;line-height:10px;font-size:6.56px;color:#3a3a4a;left:4px;transform:scaleX(0.9);transform-origin:0 50%;">Name</span>
<span class="t" style="top:267.70px;line-height:10px;font-size:6.33px;color:#3a3a4a;right:788px;text-align:right;transform:scaleX(0.9);transform-origin:100% 50%;">Size</span>
<span class="t" style="top:267.70px;line-height:10px;font-size:7.38px;color:#3a3a4a;left:189.8px;transform:scaleX(0.9);transform-origin:0 50%;">Item type</span>
<span class="t" style="top:267.70px;line-height:10px;font-size:6.88px;color:#3a3a4a;left:235.6px;transform:scaleX(0.9);transform-origin:0 50%;">Date modified</span>
<div style="left:4.3px;top:280.0px;width:4.8px;height:6.4px;background:#fdfdff;border:0.5px solid #c0c8dc;"></div>
<div style="left:5.4px;top:282.3px;width:2.4px;height:3.2px;background:#4a7ae0;border-radius:1.2px 0.4px;transform:skewX(-12deg);"></div>
<span class="t" style="top:278.70px;line-height:10px;font-size:6.78px;color:#111;left:12.3px;transform:scaleX(0.9);transform-origin:0 50%;">Air - AllINeed.mp3</span>
<span class="t" style="top:278.70px;line-height:10px;font-size:6.78px;color:#111;right:788.4px;text-align:right;transform:scaleX(0.9);transform-origin:100% 50%;">8.19 MB</span>
<span class="t" style="top:278.70px;line-height:10px;font-size:6.39px;color:#111;left:189.8px;transform:scaleX(0.9);transform-origin:0 50%;">MP3 File</span>
<span class="t" style="top:278.70px;line-height:10px;font-size:7.27px;color:#111;left:235.6px;transform:scaleX(0.9);transform-origin:0 50%;">2015.02.24. 6:11</span>
<div style="left:4.3px;top:289.18px;width:4.8px;height:6.4px;background:#fdfdff;border:0.5px solid #c0c8dc;"></div>
<div style="left:5.4px;top:291.48px;width:2.4px;height:3.2px;background:#4a7ae0;border-radius:1.2px 0.4px;transform:skewX(-12deg);"></div>
<span class="t" style="top:287.88px;line-height:10px;font-size:6.78px;color:#111;left:12.3px;transform:scaleX(0.9);transform-origin:0 50%;">Air - CeMatinLa.mp3</span>
<span class="t" style="top:287.88px;line-height:10px;font-size:6.78px;color:#111;right:788.4px;text-align:right;transform:scaleX(0.9);transform-origin:100% 50%;">6.68 MB</span>
<span class="t" style="top:287.88px;line-height:10px;font-size:6.39px;color:#111;left:189.8px;transform:scaleX(0.9);transform-origin:0 50%;">MP3 File</span>
<span class="t" style="top:287.88px;line-height:10px;font-size:7.27px;color:#111;left:235.6px;transform:scaleX(0.9);transform-origin:0 50%;">2016.07.28. 20:52</span>
<div style="left:4.3px;top:298.36px;width:4.8px;height:6.4px;background:#fdfdff;border:0.5px solid #c0c8dc;"></div>
<div style="left:5.4px;top:300.66px;width:2.4px;height:3.2px;background:#4a7ae0;border-radius:1.2px 0.4px;transform:skewX(-12deg);"></div>
<span class="t" style="top:297.06px;line-height:10px;font-size:6.78px;color:#111;left:12.3px;transform:scaleX(0.9);transform-origin:0 50%;">Air - Kelly,WatchTheStars.mp3</span>
<span class="t" style="top:297.06px;line-height:10px;font-size:6.78px;color:#111;right:788.4px;text-align:right;transform:scaleX(0.9);transform-origin:100% 50%;">6.88 MB</span>
<span class="t" style="top:297.06px;line-height:10px;font-size:6.39px;color:#111;left:189.8px;transform:scaleX(0.9);transform-origin:0 50%;">MP3 File</span>
<span class="t" style="top:297.06px;line-height:10px;font-size:7.27px;color:#111;left:235.6px;transform:scaleX(0.9);transform-origin:0 50%;">2015.02.24. 6:19</span>
<div style="left:4.3px;top:307.54px;width:4.8px;height:6.4px;background:#fdfdff;border:0.5px solid #c0c8dc;"></div>
<div style="left:5.4px;top:309.84000000000003px;width:2.4px;height:3.2px;background:#4a7ae0;border-radius:1.2px 0.4px;transform:skewX(-12deg);"></div>
<span class="t" style="top:306.24px;line-height:10px;font-size:6.78px;color:#111;left:12.3px;transform:scaleX(0.9);transform-origin:0 50%;">Air - LaFemmeD'argent.mp3</span>
<span class="t" style="top:306.24px;line-height:10px;font-size:6.78px;color:#111;right:788.4px;text-align:right;transform:scaleX(0.9);transform-origin:100% 50%;">13.1 MB</span>
<span class="t" style="top:306.24px;line-height:10px;font-size:6.39px;color:#111;left:189.8px;transform:scaleX(0.9);transform-origin:0 50%;">MP3 File</span>
<span class="t" style="top:306.24px;line-height:10px;font-size:7.27px;color:#111;left:235.6px;transform:scaleX(0.9);transform-origin:0 50%;">2016.07.28. 20:56</span>
<div style="left:2px;top:315.41999999999996px;width:294.5px;height:9.3px;background:#f4f9ff;border:0.6px solid #b8d6f2;border-radius:1px;"></div>
<div style="left:4.3px;top:316.71999999999997px;width:4.8px;height:6.4px;background:#fdfdff;border:0.5px solid #c0c8dc;"></div>
<div style="left:5.4px;top:319.02px;width:2.4px;height:3.2px;background:#4a7ae0;border-radius:1.2px 0.4px;transform:skewX(-12deg);"></div>
<span class="t" style="top:315.42px;line-height:10px;font-size:6.78px;color:#111;left:12.3px;transform:scaleX(0.9);transform-origin:0 50%;">Air - LeVoyageDePenelope.mp3</span>
<span class="t" style="top:315.42px;line-height:10px;font-size:6.78px;color:#111;right:788.4px;text-align:right;transform:scaleX(0.9);transform-origin:100% 50%;">5.82 MB</span>
<span class="t" style="top:315.42px;line-height:10px;font-size:6.39px;color:#111;left:189.8px;transform:scaleX(0.9);transform-origin:0 50%;">MP3 File</span>
<span class="t" style="top:315.42px;line-height:10px;font-size:7.27px;color:#111;left:235.6px;transform:scaleX(0.9);transform-origin:0 50%;">2016.07.28. 21:00</span>
<div style="left:4.3px;top:325.9px;width:4.8px;height:6.4px;background:#fdfdff;border:0.5px solid #c0c8dc;"></div>
<div style="left:5.4px;top:328.2px;width:2.4px;height:3.2px;background:#4a7ae0;border-radius:1.2px 0.4px;transform:skewX(-12deg);"></div>
<span class="t" style="top:324.60px;line-height:10px;font-size:6.78px;color:#111;left:12.3px;transform:scaleX(0.9);transform-origin:0 50%;">Air - Moon Safari.flac</span>
<span class="t" style="top:324.60px;line-height:10px;font-size:6.78px;color:#111;right:788.4px;text-align:right;transform:scaleX(0.9);transform-origin:100% 50%;">266 MB</span>
<span class="t" style="top:324.60px;line-height:10px;font-size:6.39px;color:#111;left:189.8px;transform:scaleX(0.9);transform-origin:0 50%;">FLAC File</span>
<span class="t" style="top:324.60px;line-height:10px;font-size:7.27px;color:#111;left:235.6px;transform:scaleX(0.9);transform-origin:0 50%;">2015.04.01. 17:34</span>
<div style="left:4.3px;top:335.08px;width:4.8px;height:6.4px;background:#fdfdff;border:0.5px solid #c0c8dc;"></div>
<div style="left:5.4px;top:337.38px;width:2.4px;height:3.2px;background:#4a7ae0;border-radius:1.2px 0.4px;transform:skewX(-12deg);"></div>
<span class="t" style="top:333.78px;line-height:10px;font-size:6.78px;color:#111;left:12.3px;transform:scaleX(0.9);transform-origin:0 50%;">Air - NeweStarInTheSky(ChansonPourSolal).mp3</span>
<span class="t" style="top:333.78px;line-height:10px;font-size:6.78px;color:#111;right:788.4px;text-align:right;transform:scaleX(0.9);transform-origin:100% 50%;">10.3 MB</span>
<span class="t" style="top:333.78px;line-height:10px;font-size:6.39px;color:#111;left:189.8px;transform:scaleX(0.9);transform-origin:0 50%;">MP3 File</span>
<span class="t" style="top:333.78px;line-height:10px;font-size:7.27px;color:#111;left:235.6px;transform:scaleX(0.9);transform-origin:0 50%;">2015.02.24. 6:33</span>
<div style="left:4.3px;top:344.26px;width:4.8px;height:6.4px;background:#fdfdff;border:0.5px solid #c0c8dc;"></div>
<div style="left:5.4px;top:346.56px;width:2.4px;height:3.2px;background:#4a7ae0;border-radius:1.2px 0.4px;transform:skewX(-12deg);"></div>
<span class="t" style="top:342.96px;line-height:10px;font-size:6.78px;color:#111;left:12.3px;transform:scaleX(0.9);transform-origin:0 50%;">Air - Playground love.mp3</span>
<span class="t" style="top:342.96px;line-height:10px;font-size:6.78px;color:#111;right:788.4px;text-align:right;transform:scaleX(0.9);transform-origin:100% 50%;">4.83 MB</span>
<span class="t" style="top:342.96px;line-height:10px;font-size:6.39px;color:#111;left:189.8px;transform:scaleX(0.9);transform-origin:0 50%;">MP3 File</span>
<span class="t" style="top:342.96px;line-height:10px;font-size:7.27px;color:#111;left:235.6px;transform:scaleX(0.9);transform-origin:0 50%;">2015.04.01. 17:34</span>
<div style="left:4.3px;top:353.44px;width:4.8px;height:6.4px;background:#fdfdff;border:0.5px solid #c0c8dc;"></div>
<div style="left:5.4px;top:355.74px;width:2.4px;height:3.2px;background:#4a7ae0;border-radius:1.2px 0.4px;transform:skewX(-12deg);"></div>
<span class="t" style="top:352.14px;line-height:10px;font-size:6.78px;color:#111;left:12.3px;transform:scaleX(0.9);transform-origin:0 50%;">Air - Remember.mp3</span>
<span class="t" style="top:352.14px;line-height:10px;font-size:6.78px;color:#111;right:788.4px;text-align:right;transform:scaleX(0.9);transform-origin:100% 50%;">4.71 MB</span>
<span class="t" style="top:352.14px;line-height:10px;font-size:6.39px;color:#111;left:189.8px;transform:scaleX(0.9);transform-origin:0 50%;">MP3 File</span>
<span class="t" style="top:352.14px;line-height:10px;font-size:7.27px;color:#111;left:235.6px;transform:scaleX(0.9);transform-origin:0 50%;">2015.02.24. 6:39</span>
<div style="left:4.3px;top:362.62px;width:4.8px;height:6.4px;background:#fdfdff;border:0.5px solid #c0c8dc;"></div>
<div style="left:5.4px;top:364.92px;width:2.4px;height:3.2px;background:#4a7ae0;border-radius:1.2px 0.4px;transform:skewX(-12deg);"></div>
<span class="t" style="top:361.32px;line-height:10px;font-size:6.78px;color:#111;left:12.3px;transform:scaleX(0.9);transform-origin:0 50%;">Air - SexyBoy.mp3</span>
<span class="t" style="top:361.32px;line-height:10px;font-size:6.78px;color:#111;right:788.4px;text-align:right;transform:scaleX(0.9);transform-origin:100% 50%;">9.11 MB</span>
<span class="t" style="top:361.32px;line-height:10px;font-size:6.39px;color:#111;left:189.8px;transform:scaleX(0.9);transform-origin:0 50%;">MP3 File</span>
<span class="t" style="top:361.32px;line-height:10px;font-size:7.27px;color:#111;left:235.6px;transform:scaleX(0.9);transform-origin:0 50%;">2011.01.13. 23:05</span>
<div style="left:4.3px;top:371.8px;width:4.8px;height:6.4px;background:#fdfdff;border:0.5px solid #c0c8dc;"></div>
<div style="left:5.4px;top:374.1px;width:2.4px;height:3.2px;background:#4a7ae0;border-radius:1.2px 0.4px;transform:skewX(-12deg);"></div>
<span class="t" style="top:370.50px;line-height:10px;font-size:6.78px;color:#111;left:12.3px;transform:scaleX(0.9);transform-origin:0 50%;">Air - Talisman.mp3</span>
<span class="t" style="top:370.50px;line-height:10px;font-size:6.78px;color:#111;right:788.4px;text-align:right;transform:scaleX(0.9);transform-origin:100% 50%;">7.83 MB</span>
<span class="t" style="top:370.50px;line-height:10px;font-size:6.39px;color:#111;left:189.8px;transform:scaleX(0.9);transform-origin:0 50%;">MP3 File</span>
<span class="t" style="top:370.50px;line-height:10px;font-size:7.27px;color:#111;left:235.6px;transform:scaleX(0.9);transform-origin:0 50%;">2016.07.28. 21:06</span>
<div style="left:4.3px;top:380.97999999999996px;width:4.8px;height:6.4px;background:#fdfdff;border:0.5px solid #c0c8dc;"></div>
<div style="left:5.4px;top:383.28px;width:2.4px;height:3.2px;background:#4a7ae0;border-radius:1.2px 0.4px;transform:skewX(-12deg);"></div>
<span class="t" style="top:379.68px;line-height:10px;font-size:6.78px;color:#111;left:12.3px;transform:scaleX(0.9);transform-origin:0 50%;">Air - YouMakeItEasy.mp3</span>
<span class="t" style="top:379.68px;line-height:10px;font-size:6.78px;color:#111;right:788.4px;text-align:right;transform:scaleX(0.9);transform-origin:100% 50%;">7.37 MB</span>
<span class="t" style="top:379.68px;line-height:10px;font-size:6.39px;color:#111;left:189.8px;transform:scaleX(0.9);transform-origin:0 50%;">MP3 File</span>
<span class="t" style="top:379.68px;line-height:10px;font-size:7.27px;color:#111;left:235.6px;transform:scaleX(0.9);transform-origin:0 50%;">2015.02.24. 6:46</span>
<div style="left:302px;top:233.8px;width:446.5px;height:302.8px;border-left:0.6px solid #d0d0d0;"></div>
<span class="t" style="top:233.40px;line-height:10px;font-size:6.56px;color:#111;font-weight:bold;left:307px;transform:scaleX(0.9);transform-origin:0 50%;">Streams:</span>
<div style="left:334px;top:237.6px;width:554px;height:0.6px;background:#d4d4d4;"></div>
<div style="left:334px;top:238.2px;width:554px;height:0.5px;background:#fbfbfb;"></div>
<div style="left:304.4px;top:242.4px;width:12.2px;height:10px;background:#ebebeb;border:0.7px solid #8a8a8a;border-radius:1.5px;"></div>
<svg style="left:305.5px;top:243px" width="10" height="8.5" viewBox="0 0 10 8.5"><circle cx="6" cy="3.2" r="2.3" fill="#f4f8ff" stroke="#6a7a9a" stroke-width="0.8"/><path d="M4.2 4.8 L1.3 7.6" stroke="#c8882a" stroke-width="1.3"/></svg>
<svg style="left:324px;top:243.5px" width="5.6" height="8" viewBox="0 0 7 8"><path d="M3.5 0.3 L6.5 3.6 H4.6 V7.7 H2.4 V3.6 H0.5Z" fill="#2d7ee0" stroke="#1a58b8" stroke-width="0.4"/></svg>
<svg style="left:336.4px;top:243.5px" width="5.6" height="8" viewBox="0 0 7 8"><path d="M3.5 7.7 L6.5 4.4 H4.6 V0.3 H2.4 V4.4 H0.5Z" fill="#2d7ee0" stroke="#1a58b8" stroke-width="0.4"/></svg>
<div style="left:347.5px;top:243px;width:0.7px;height:9px;background:#a8a8a8;"></div>
<div style="left:390px;top:243px;width:0.7px;height:9px;background:#a8a8a8;"></div>
<div style="left:407px;top:243px;width:0.7px;height:9px;background:#a8a8a8;"></div>
<div style="left:352px;top:244px;width:8px;height:7px;background:#fbfbfb;border:0.6px solid #b8bcc4;"></div>
<div style="left:354.5px;top:244px;width:0.5px;height:7px;background:#c8ccd4;"></div>
<div style="left:364.5px;top:244px;width:7.5px;height:6.8px;background:linear-gradient(#3a6ad0 0%,#4a86d8 45%,#2f8a2a 55%,#1d5a18 100%);border:0.5px solid #444;"></div>
<div style="left:375.5px;top:242.2px;width:12.5px;height:10px;background:#dfe6f2;border:0.7px solid #8a8a8a;border-radius:1.5px;"></div>
<div style="left:378px;top:244px;width:7.5px;height:6.5px;background:#cfe2fa;border:0.6px solid #4a7ad0;"></div>
<span class="t" style="top:242.70px;line-height:10px;font-size:6.11px;color:#2a5ad0;font-weight:bold;left:281.8px;width:200px;text-align:center;transform:scaleX(0.9);transform-origin:50% 50%;">&</span>
<div style="left:394.5px;top:244px;width:8.5px;height:6px;background:linear-gradient(#5a8af0,#2a5ad8);border:0.5px solid #88a;"></div>
<div style="left:397px;top:250px;width:3.5px;height:1.3px;background:#9aa;"></div>
<div style="left:411.5px;top:243.3px;width:8px;height:8px;background:radial-gradient(circle at 40% 30%,#6a9af0,#1a3ab8 70%);border-radius:4px;"></div>
<span class="t" style="top:242.80px;line-height:10px;font-size:6.67px;color:#fff;font-weight:bold;left:315.5px;width:200px;text-align:center;transform:scaleX(0.9);transform-origin:50% 50%;">i</span>
<span class="t" style="top:242.80px;line-height:10px;font-size:5.56px;color:#222;left:324.8px;width:200px;text-align:center;transform:scaleX(0.9);transform-origin:50% 50%;">▾</span>
<span class="t" style="top:242.60px;line-height:10px;font-size:6.11px;color:#223;left:431.8px;transform:scaleX(0.9);transform-origin:0 50%;">Quick search:</span>
<div style="left:468.5px;top:242.2px;width:304px;height:9.2px;background:#fff;border:0.6px solid #e2e5e9;"></div>
<div class="btn" style="left:777.3px;top:242.2px;width:31px;height:9.4px;"></div>
<span class="t" style="top:242.50px;line-height:10px;font-size:5.89px;color:#2a2a2a;left:692.8px;width:200px;text-align:center;transform:scaleX(0.9);transform-origin:50% 50%;">Sample</span>
<div class="btn" style="left:810.2px;top:242.2px;width:49px;height:9.4px;"></div>
<span class="t" style="top:242.50px;line-height:10px;font-size:5.89px;color:#2a2a2a;left:734.7px;width:200px;text-align:center;transform:scaleX(0.9);transform-origin:50% 50%;">Edit Tag Details</span>
<div class="btn" style="left:861px;top:242.2px;width:24.5px;height:9.4px;"></div>
<span class="t" style="top:242.50px;line-height:10px;font-size:5.89px;color:#2a2a2a;left:773.25px;width:200px;text-align:center;transform:scaleX(0.9);transform-origin:50% 50%;">Close</span>
<div style="left:303px;top:254.3px;width:445px;height:281.9px;background:#fff;border:0.6px solid #a8acb2;border-top:0.9px solid #8c8c8c;"></div>
<div style="left:303.6px;top:255.1px;width:437.5px;height:10px;background:linear-gradient(#fcfcfc,#f0f0f2 50%,#dcdde1);border-bottom:0.6px solid #b4b8be;"></div>
<div style="left:315.6px;top:255.1px;width:0.7px;height:10px;background:#c4c8d0;"></div>
<div style="left:371.6px;top:255.1px;width:0.7px;height:10px;background:#c4c8d0;"></div>
<div style="left:535px;top:255.1px;width:0.7px;height:10px;background:#c4c8d0;"></div>
<div style="left:590px;top:255.1px;width:0.7px;height:10px;background:#c4c8d0;"></div>
<div style="left:653.3px;top:255.1px;width:0.7px;height:10px;background:#c4c8d0;"></div>
<div style="left:740.5px;top:255.1px;width:0.7px;height:10px;background:#c4c8d0;"></div>
<span class="t" style="top:255.60px;line-height:10px;font-size:6.44px;color:#333;left:307.8px;transform:scaleX(0.9);transform-origin:0 50%;">X</span>
<span class="t" style="top:255.60px;line-height:10px;font-size:6.44px;color:#333;left:318.8px;transform:scaleX(0.9);transform-origin:0 50%;">Cover art</span>
<span class="t" style="top:255.60px;line-height:10px;font-size:6.44px;color:#333;left:374.8px;transform:scaleX(0.9);transform-origin:0 50%;">Stream information</span>
<span class="t" style="top:255.60px;line-height:10px;font-size:6.44px;color:#333;left:540px;transform:scaleX(0.9);transform-origin:0 50%;">Classification</span>
<span class="t" style="top:255.60px;line-height:10px;font-size:6.44px;color:#333;left:593.3px;transform:scaleX(0.9);transform-origin:0 50%;">File format information</span>
<span class="t" style="top:255.60px;line-height:10px;font-size:6.44px;color:#333;left:656px;transform:scaleX(0.9);transform-origin:0 50%;">Involved People</span>
<div style="left:741.2px;top:255.1px;width:6.6px;height:273px;background:#ececec;border-left:0.5px solid #ddd;"></div>
<span class="t" style="top:254.20px;line-height:10px;font-size:5.56px;color:#333;left:644.4px;width:200px;text-align:center;transform:scaleX(0.9);transform-origin:50% 50%;">▴</span>
<div style="left:741.7px;top:263px;width:5.8px;height:210px;background:linear-gradient(90deg,#f4f4f4,#dadada 60%,#c8c8c8);border:0.5px solid #b0b0b0;border-radius:1px;"></div>
<span class="t" style="top:363.40px;line-height:10px;font-size:5.0px;color:#444;left:644.4px;width:200px;text-align:center;transform:scaleX(0.9);transform-origin:50% 50%;">≡</span>
<span class="t" style="top:517.40px;line-height:10px;font-size:5.56px;color:#333;left:644.4px;width:200px;text-align:center;transform:scaleX(0.9);transform-origin:50% 50%;">▾</span>
<div style="left:303.6px;top:528.2px;width:437.5px;height:7.3px;background:#ececec;"></div>
<span class="t" style="top:527.10px;line-height:10px;font-size:5.56px;color:#333;left:207px;width:200px;text-align:center;transform:scaleX(0.9);transform-origin:50% 50%;">◂</span>
<div style="left:313.3px;top:528.7px;width:261px;height:6px;background:linear-gradient(#f6f6f6,#dcdcdc 60%,#cacaca);border:0.5px solid #b0b0b0;border-radius:1px;"></div>
<span class="t" style="top:527.00px;line-height:10px;font-size:4.44px;color:#555;left:344px;width:200px;text-align:center;transform:scaleX(0.9);transform-origin:50% 50%;">⦀</span>
<span class="t" style="top:527.10px;line-height:10px;font-size:5.56px;color:#333;left:636.5px;width:200px;text-align:center;transform:scaleX(0.9);transform-origin:50% 50%;">▸</span>
<div style="left:741.2px;top:528.2px;width:6.3px;height:7.3px;background:#f0f0f0;"></div>
<div style="left:303.6px;top:265.1px;width:437.5px;height:263.1px;overflow:hidden;"><div style="left:-303.6px;top:-265.1px;width:971px;height:546px;">
<svg style="left:318.4px;top:266.2px" width="50.6" height="49.8" viewBox="0 0 100 100" preserveAspectRatio="none"><defs><linearGradient id="g0" x1="0" y1="0" x2="1" y2="0"><stop offset="0" stop-color="#3a50c0"/><stop offset="0.5" stop-color="#5a78d0"/><stop offset="1" stop-color="#a8c4e8"/></linearGradient></defs><rect width="100" height="100" fill="url(#g0)"/><circle cx="62" cy="74" r="3.3" fill="#5a9a40"/><circle cx="65" cy="53" r="3.4" fill="#e8923a"/><circle cx="65" cy="90" r="1.5" fill="#c04a90"/><circle cx="87" cy="38" r="1.5" fill="#e8923a"/><circle cx="1" cy="22" r="1.9" fill="#e8eef8"/><circle cx="16" cy="80" r="1.6" fill="#2a3a9a"/><circle cx="44" cy="13" r="3.7" fill="#2a40b8"/><circle cx="21" cy="22" r="3.8" fill="#d04028"/><circle cx="29" cy="96" r="2.6" fill="#ffffff"/><circle cx="63" cy="18" r="3.7" fill="#e8923a"/><circle cx="97" cy="89" r="2.0" fill="#a8c8f0"/><circle cx="41" cy="94" r="1.9" fill="#a8c8f0"/><circle cx="30" cy="60" r="1.2" fill="#ffffff"/><circle cx="71" cy="7" r="2.1" fill="#3f8fe0"/><circle cx="48" cy="32" r="2.5" fill="#5a9a40"/><circle cx="18" cy="26" r="3.6" fill="#5a9a40"/><circle cx="36" cy="40" r="2.6" fill="#e8eef8"/><circle cx="37" cy="58" r="1.2" fill="#2a40b8"/><circle cx="71" cy="62" r="3.7" fill="#6a4ac0"/><circle cx="76" cy="93" r="3.6" fill="#a8c8f0"/><circle cx="51" cy="89" r="1.9" fill="#c04a90"/><circle cx="11" cy="75" r="3.3" fill="#3f8fe0"/><circle cx="4" cy="95" r="1.4" fill="#a8c8f0"/><circle cx="51" cy="36" r="1.6" fill="#3f8fe0"/><circle cx="92" cy="55" r="2.0" fill="#a8c8f0"/><circle cx="31" cy="80" r="2.8" fill="#5a9a40"/><circle cx="69" cy="100" r="1.6" fill="#2a40b8"/><circle cx="8" cy="60" r="3.6" fill="#2a40b8"/><circle cx="24" cy="59" r="3.3" fill="#c04a90"/><circle cx="65" cy="15" r="3.7" fill="#ffffff"/><circle cx="3" cy="49" r="3.4" fill="#d04028"/><circle cx="98" cy="56" r="1.5" fill="#e8eef8"/><circle cx="11" cy="43" r="1.6" fill="#e8eef8"/><circle cx="29" cy="45" r="3.8" fill="#d04028"/><circle cx="98" cy="45" r="2.5" fill="#5a9a40"/><circle cx="32" cy="27" r="2.4" fill="#d04028"/><circle cx="11" cy="82" r="2.6" fill="#d04028"/><circle cx="63" cy="50" r="2.1" fill="#6a4ac0"/><circle cx="49" cy="52" r="2.6" fill="#e8d050"/><circle cx="36" cy="79" r="3.2" fill="#5a9a40"/><circle cx="59" cy="3" r="2.0" fill="#e8d050"/><circle cx="70" cy="28" r="2.5" fill="#5a9a40"/><circle cx="72" cy="96" r="2.1" fill="#d04028"/><circle cx="58" cy="1" r="2.6" fill="#3f8fe0"/><circle cx="33" cy="27" r="2.0" fill="#e8d050"/><circle cx="65" cy="80" r="2.1" fill="#ffffff"/><circle cx="35" cy="94" r="2.3" fill="#d04028"/><circle cx="87" cy="69" r="3.7" fill="#a8c8f0"/><circle cx="52" cy="53" r="1.6" fill="#a8c8f0"/><circle cx="94" cy="48" r="3.0" fill="#5a9a40"/><circle cx="67" cy="42" r="2.8" fill="#2a3a9a"/><circle cx="52" cy="94" r="2.0" fill="#e8d050"/><circle cx="77" cy="64" r="3.1" fill="#2a40b8"/><circle cx="20" cy="59" r="2.8" fill="#d04028"/><circle cx="22" cy="69" r="2.8" fill="#2a40b8"/><circle cx="99" cy="98" r="1.6" fill="#d04028"/><circle cx="11" cy="97" r="2.5" fill="#e8d050"/><circle cx="4" cy="47" r="2.2" fill="#2a3a9a"/><circle cx="7" cy="20" r="3.1" fill="#a8c8f0"/><circle cx="0" cy="41" r="1.9" fill="#e8eef8"/><circle cx="87" cy="69" r="2.6" fill="#2a40b8"/><circle cx="55" cy="30" r="2.0" fill="#e8d050"/><circle cx="34" cy="58" r="3.7" fill="#d04028"/><circle cx="42" cy="81" r="2.9" fill="#a8c8f0"/><circle cx="47" cy="16" r="2.2" fill="#c04a90"/><circle cx="96" cy="97" r="2.8" fill="#a8c8f0"/><circle cx="82" cy="66" r="2.2" fill="#a8c8f0"/><circle cx="57" cy="62" r="1.6" fill="#ffffff"/><circle cx="88" cy="56" r="2.3" fill="#e8923a"/><circle cx="49" cy="48" r="3.0" fill="#e8eef8"/><circle cx="96" cy="91" r="2.7" fill="#3f8fe0"/><circle cx="74" cy="30" r="1.9" fill="#2a40b8"/><circle cx="32" cy="98" r="2.5" fill="#3f8fe0"/><circle cx="14" cy="2" r="2.9" fill="#c04a90"/><circle cx="25" cy="4" r="1.6" fill="#e8eef8"/><circle cx="1" cy="53" r="1.9" fill="#c04a90"/><circle cx="78" cy="25" r="1.9" fill="#d04028"/><circle cx="72" cy="29" r="2.5" fill="#c04a90"/><circle cx="52" cy="86" r="3.5" fill="#6a4ac0"/><circle cx="2" cy="13" r="1.9" fill="#5a9a40"/><circle cx="34" cy="30" r="2.6" fill="#c04a90"/><circle cx="35" cy="68" r="3.3" fill="#d04028"/><circle cx="4" cy="25" r="2.4" fill="#6a4ac0"/><circle cx="89" cy="55" r="1.2" fill="#e8eef8"/><circle cx="59" cy="69" r="3.7" fill="#ffffff"/><circle cx="48" cy="91" r="2.2" fill="#e8eef8"/><circle cx="68" cy="72" r="3.5" fill="#c04a90"/><circle cx="83" cy="7" r="3.4" fill="#5a9a40"/><circle cx="78" cy="58" r="2.9" fill="#c04a90"/><circle cx="91" cy="14" r="2.4" fill="#e8d050"/><circle cx="89" cy="97" r="2.6" fill="#e8eef8"/><circle cx="59" cy="81" r="1.4" fill="#e8923a"/><circle cx="27" cy="9" r="1.4" fill="#2a40b8"/><circle cx="33" cy="43" r="1.4" fill="#e8eef8"/><circle cx="70" cy="5" r="3.4" fill="#e8923a"/><circle cx="61" cy="82" r="1.5" fill="#d04028"/><circle cx="99" cy="71" r="2.3" fill="#d04028"/><circle cx="61" cy="41" r="1.6" fill="#2a3a9a"/><circle cx="21" cy="56" r="2.9" fill="#5a9a40"/><circle cx="7" cy="6" r="2.7" fill="#5a9a40"/><circle cx="40" cy="62" r="1.2" fill="#6a4ac0"/><circle cx="31" cy="60" r="2.5" fill="#ffffff"/><circle cx="37" cy="6" r="3.0" fill="#d04028"/><circle cx="57" cy="68" r="2.0" fill="#e8d050"/><circle cx="55" cy="22" r="1.4" fill="#e8923a"/><circle cx="25" cy="75" r="2.5" fill="#d04028"/><circle cx="81" cy="86" r="2.4" fill="#e8eef8"/><circle cx="18" cy="71" r="2.9" fill="#6a4ac0"/><circle cx="57" cy="4" r="3.4" fill="#e8d050"/><circle cx="59" cy="24" r="3.5" fill="#c04a90"/><circle cx="96" cy="11" r="2.6" fill="#e8d050"/><circle cx="73" cy="5" r="1.6" fill="#e8eef8"/><circle cx="68" cy="22" r="1.5" fill="#ffffff"/><circle cx="49" cy="21" r="3.0" fill="#e8eef8"/><circle cx="35" cy="24" r="2.1" fill="#2a3a9a"/><circle cx="71" cy="80" r="2.2" fill="#5a9a40"/><circle cx="83" cy="65" r="3.3" fill="#e8eef8"/><circle cx="96" cy="36" r="1.3" fill="#2a3a9a"/><circle cx="21" cy="18" r="1.4" fill="#2a40b8"/><circle cx="3" cy="20" r="1.3" fill="#c04a90"/><circle cx="66" cy="35" r="2.3" fill="#3f8fe0"/><circle cx="89" cy="62" r="2.3" fill="#c04a90"/><circle cx="46" cy="19" r="2.9" fill="#6a4ac0"/><circle cx="37" cy="39" r="3.5" fill="#d04028"/><circle cx="55" cy="11" r="3.3" fill="#3f8fe0"/><circle cx="67" cy="3" r="3.5" fill="#a8c8f0"/><circle cx="92" cy="37" r="3.6" fill="#5a9a40"/><circle cx="2" cy="46" r="3.4" fill="#d04028"/><circle cx="12" cy="67" r="2.0" fill="#ffffff"/><circle cx="24" cy="99" r="1.3" fill="#5a9a40"/><circle cx="2" cy="23" r="1.4" fill="#e8eef8"/><circle cx="91" cy="71" r="3.0" fill="#d04028"/><circle cx="47" cy="28" r="3.1" fill="#5a9a40"/><circle cx="47" cy="78" r="1.7" fill="#e8923a"/><circle cx="94" cy="65" r="2.3" fill="#3f8fe0"/><circle cx="1" cy="6" r="3.2" fill="#e8eef8"/><circle cx="17" cy="3" r="3.4" fill="#e8d050"/><circle cx="57" cy="94" r="3.1" fill="#e8923a"/><circle cx="90" cy="49" r="3.6" fill="#2a40b8"/><circle cx="68" cy="64" r="2.5" fill="#2a40b8"/><circle cx="5" cy="83" r="2.4" fill="#ffffff"/><circle cx="5" cy="4" r="3.7" fill="#d04028"/><circle cx="70" cy="64" r="1.7" fill="#e8923a"/><circle cx="8" cy="31" r="1.5" fill="#e8d050"/><circle cx="99" cy="16" r="1.4" fill="#5a9a40"/><circle cx="21" cy="2" r="2.6" fill="#c04a90"/><circle cx="42" cy="77" r="2.6" fill="#d04028"/><circle cx="73" cy="91" r="2.0" fill="#c04a90"/><circle cx="89" cy="100" r="2.6" fill="#d04028"/><circle cx="31" cy="9" r="3.2" fill="#e8eef8"/><circle cx="31" cy="13" r="1.4" fill="#e8923a"/><circle cx="70" cy="80" r="3.7" fill="#ffffff"/><circle cx="25" cy="6" r="3.0" fill="#2a40b8"/><circle cx="70" cy="80" r="3.5" fill="#6a4ac0"/><circle cx="7" cy="77" r="2.2" fill="#e8d050"/><circle cx="0" cy="29" r="3.6" fill="#d04028"/><circle cx="57" cy="44" r="3.3" fill="#ffffff"/><circle cx="78" cy="2" r="1.3" fill="#e8eef8"/><circle cx="27" cy="81" r="2.2" fill="#d04028"/><circle cx="32" cy="31" r="1.6" fill="#c04a90"/><circle cx="68" cy="29" r="1.4" fill="#5a9a40"/><circle cx="56" cy="3" r="1.3" fill="#d04028"/><circle cx="83" cy="44" r="1.9" fill="#2a3a9a"/><circle cx="2" cy="53" r="1.5" fill="#e8923a"/><circle cx="33" cy="1" r="2.7" fill="#d04028"/><circle cx="73" cy="10" r="2.6" fill="#d04028"/><circle cx="63" cy="14" r="3.2" fill="#e8eef8"/><circle cx="79" cy="12" r="2.0" fill="#e8923a"/><circle cx="46" cy="43" r="2.3" fill="#ffffff"/><circle cx="94" cy="53" r="3.7" fill="#2a3a9a"/><circle cx="0" cy="13" r="3.4" fill="#ffffff"/><circle cx="5" cy="98" r="1.3" fill="#2a3a9a"/><circle cx="24" cy="71" r="2.1" fill="#c04a90"/><circle cx="22" cy="28" r="1.7" fill="#e8d050"/><circle cx="52" cy="76" r="3.2" fill="#a8c8f0"/><circle cx="35" cy="25" r="3.8" fill="#2a40b8"/><circle cx="62" cy="40" r="1.6" fill="#e8923a"/><circle cx="49" cy="4" r="1.6" fill="#6a4ac0"/><circle cx="75" cy="28" r="3.6" fill="#a8c8f0"/><circle cx="48" cy="47" r="2.6" fill="#6a4ac0"/><circle cx="80" cy="38" r="1.2" fill="#e8d050"/><circle cx="61" cy="62" r="3.3" fill="#2a40b8"/><circle cx="32" cy="3" r="2.0" fill="#e8eef8"/><circle cx="50" cy="55" r="3.0" fill="#c04a90"/><circle cx="98" cy="82" r="3.6" fill="#5a9a40"/><circle cx="56" cy="6" r="1.6" fill="#e8eef8"/><circle cx="36" cy="59" r="3.0" fill="#e8d050"/><circle cx="21" cy="29" r="1.3" fill="#a8c8f0"/><circle cx="61" cy="86" r="3.6" fill="#e8eef8"/><circle cx="31" cy="93" r="1.9" fill="#5a9a40"/><circle cx="23" cy="4" r="1.4" fill="#3f8fe0"/><circle cx="90" cy="69" r="3.4" fill="#5a9a40"/><circle cx="61" cy="56" r="2.5" fill="#6a4ac0"/><circle cx="90" cy="24" r="3.7" fill="#e8d050"/><circle cx="42" cy="97" r="2.9" fill="#e8eef8"/><circle cx="18" cy="65" r="3.5" fill="#ffffff"/><circle cx="61" cy="39" r="1.5" fill="#5a9a40"/><circle cx="89" cy="69" r="3.8" fill="#e8923a"/><circle cx="89" cy="21" r="2.0" fill="#3f8fe0"/><circle cx="80" cy="8" r="3.7" fill="#6a4ac0"/><circle cx="63" cy="77" r="1.8" fill="#6a4ac0"/><circle cx="57" cy="63" r="2.9" fill="#e8d050"/><circle cx="73" cy="42" r="2.3" fill="#e8d050"/><circle cx="60" cy="24" r="2.3" fill="#6a4ac0"/><circle cx="61" cy="97" r="1.7" fill="#2a40b8"/><circle cx="15" cy="30" r="2.6" fill="#2a3a9a"/><circle cx="18" cy="19" r="2.7" fill="#ffffff"/><circle cx="79" cy="33" r="1.4" fill="#c04a90"/><circle cx="14" cy="52" r="1.4" fill="#e8923a"/><circle cx="85" cy="65" r="3.6" fill="#e8923a"/><circle cx="89" cy="62" r="3.3" fill="#6a4ac0"/><circle cx="0" cy="67" r="1.5" fill="#a8c8f0"/><circle cx="15" cy="62" r="1.5" fill="#c04a90"/><circle cx="74" cy="82" r="3.3" fill="#5a9a40"/><circle cx="89" cy="55" r="2.7" fill="#6a4ac0"/><circle cx="37" cy="81" r="1.7" fill="#a8c8f0"/><circle cx="37" cy="46" r="3.0" fill="#5a9a40"/><circle cx="77" cy="25" r="3.6" fill="#c04a90"/><circle cx="38" cy="12" r="2.8" fill="#a8c8f0"/><circle cx="13" cy="0" r="2.2" fill="#a8c8f0"/><circle cx="95" cy="7" r="3.2" fill="#5a9a40"/><circle cx="71" cy="2" r="3.3" fill="#a8c8f0"/><circle cx="75" cy="20" r="2.1" fill="#d04028"/><circle cx="29" cy="50" r="3.0" fill="#6a4ac0"/><circle cx="58" cy="30" r="2.1" fill="#6a4ac0"/><circle cx="52" cy="5" r="2.3" fill="#e8923a"/><circle cx="27" cy="72" r="1.6" fill="#6a4ac0"/><circle cx="55" cy="43" r="1.7" fill="#e8eef8"/><circle cx="86" cy="25" r="2.4" fill="#d04028"/><circle cx="81" cy="1" r="3.2" fill="#a8c8f0"/><circle cx="81" cy="2" r="2.7" fill="#e8eef8"/><circle cx="87" cy="8" r="3.7" fill="#e8923a"/><circle cx="97" cy="44" r="2.4" fill="#6a4ac0"/><circle cx="96" cy="60" r="3.4" fill="#c04a90"/><circle cx="51" cy="5" r="2.2" fill="#e8d050"/><circle cx="43" cy="59" r="3.5" fill="#ffffff"/><circle cx="62" cy="59" r="1.8" fill="#e8eef8"/><circle cx="77" cy="41" r="3.5" fill="#e8eef8"/><circle cx="92" cy="38" r="3.8" fill="#d04028"/><circle cx="89" cy="15" r="3.2" fill="#e8eef8"/><circle cx="83" cy="8" r="2.2" fill="#e8eef8"/><circle cx="42" cy="27" r="2.4" fill="#3f8fe0"/><circle cx="0" cy="63" r="3.2" fill="#c04a90"/><circle cx="8" cy="69" r="1.3" fill="#e8eef8"/><circle cx="89" cy="20" r="1.2" fill="#c04a90"/><circle cx="96" cy="60" r="1.6" fill="#e8923a"/><circle cx="8" cy="36" r="2.8" fill="#2a40b8"/><circle cx="18" cy="43" r="1.9" fill="#ffffff"/><circle cx="37" cy="78" r="1.6" fill="#e8d050"/><circle cx="90" cy="89" r="2.6" fill="#3f8fe0"/><circle cx="11" cy="64" r="2.2" fill="#a8c8f0"/><circle cx="91" cy="55" r="2.4" fill="#e8923a"/><circle cx="97" cy="14" r="1.2" fill="#2a40b8"/><circle cx="73" cy="13" r="2.5" fill="#5a9a40"/><circle cx="6" cy="2" r="1.7" fill="#e8923a"/><circle cx="50" cy="61" r="3.3" fill="#2a40b8"/><circle cx="80" cy="24" r="3.0" fill="#a8c8f0"/><circle cx="78" cy="56" r="2.3" fill="#6a4ac0"/><circle cx="65" cy="92" r="2.2" fill="#e8d050"/><circle cx="28" cy="58" r="2.7" fill="#e8eef8"/><path id="arc0" d="M6 24 Q50 -6 94 20" fill="none"/><path d="M4 20 Q50 -10 96 16 L96 4 Q50 -14 4 6Z" fill="#3a58c8" opacity="0.55"/><text font-size="10.5" font-weight="bold" fill="#e0602a" font-family="Liberation Serif,serif" letter-spacing="0.5"><textPath href="#arc0">OZRIC TENTACLES</textPath></text><clipPath id="hp"><polygon points="44.7,10.0 75.6,24.9 83.2,58.3 61.8,85.1 27.6,85.1 6.2,58.3 13.8,24.9"/></clipPath><g clip-path="url(#hp)"><rect width="100" height="100" fill="#dc2a1a"/><rect x="60" y="8" width="30" height="40" fill="#3a7a38" opacity="0.8"/><path d="M44 8 L47 8 L46 42 L45 42Z" fill="#f8c030"/><rect y="38" width="100" height="8" fill="#f07020"/><ellipse cx="45" cy="50" rx="24" ry="7" fill="#f8d828"/><rect y="45" width="100" height="4" fill="#f8a020" opacity="0.7"/><rect y="54" width="100" height="7" fill="#2450c8"/><rect y="60" width="100" height="50" fill="#4a9a30"/><path d="M36 95 Q45 56 56 95Z" fill="#3a90e0"/><ellipse cx="58" cy="72" rx="6" ry="3" fill="#3a80e0"/><circle cx="45" cy="50" r="5" fill="#fff6b0"/><rect x="24" y="26" width="42" height="7" fill="#3a70d0" opacity="0.85"/><rect x="30" y="34" width="30" height="6" fill="#4a88d8" opacity="0.8"/><path d="M8 66 Q26 50 42 64 Q26 60 10 78Z" fill="#88c840"/><path d="M86 62 Q66 50 50 66 Q68 60 84 76Z" fill="#78b838"/><path d="M14 92 Q34 70 44 94Z" fill="#2a6a28"/><path d="M80 90 Q60 70 50 94Z" fill="#2a6a28"/></g><polygon points="44.7,10.0 75.6,24.9 83.2,58.3 61.8,85.1 27.6,85.1 6.2,58.3 13.8,24.9" fill="none" stroke="#f4f8ff" stroke-width="1.8"/></svg>
<span class="t" style="top:266.40px;line-height:10px;font-size:7.67px;color:#000;font-weight:bold;left:374.3px;transform:scaleX(0.9);transform-origin:0 50%;">Ozric Tentacles - Ghedengi</span>
<span class="t" style="top:274.70px;line-height:10px;font-size:6.67px;color:#000;font-weight:bold;left:374.3px;transform:scaleX(0.9);transform-origin:0 50%;">Ghedengi</span>
<span class="t" style="top:282.80px;line-height:10px;font-size:6.11px;color:#141414;left:374.3px;transform:scaleX(0.9);transform-origin:0 50%;">2003.10.14 Copyright © 1999 Snapper Music - Snapper Classics</span>
<span class="t" style="top:290.90px;line-height:10px;font-size:6.11px;color:#141414;left:374.3px;transform:scaleX(0.9);transform-origin:0 50%;">Track 3</span>
<span class="t" style="top:299.00px;line-height:10px;font-size:6.11px;color:#141414;left:374.3px;transform:scaleX(0.9);transform-origin:0 50%;">Psychedelic Rock</span>
<span class="t" style="top:307.10px;line-height:10px;font-size:6.11px;color:#141414;left:374.3px;transform:scaleX(0.9);transform-origin:0 50%;">00:05:41.31</span>
<span class="t" style="top:274.70px;line-height:10px;font-size:6.17px;color:#141414;left:537.7px;transform:scaleX(0.9);transform-origin:0 50%;">Not rated</span>
<span class="t" style="top:282.80px;line-height:10px;font-size:6.17px;color:#141414;left:537.7px;transform:scaleX(0.9);transform-origin:0 50%;">Played 203 times</span>
<span class="t" style="top:274.70px;line-height:10px;font-size:6.17px;color:#141414;left:592.8px;transform:scaleX(0.9);transform-origin:0 50%;">MPEG 1 Layer 3</span>
<span class="t" style="top:282.80px;line-height:10px;font-size:6.17px;color:#141414;left:592.8px;transform:scaleX(0.9);transform-origin:0 50%;">192 kbps</span>
<span class="t" style="top:290.90px;line-height:10px;font-size:6.17px;color:#141414;left:592.8px;transform:scaleX(0.9);transform-origin:0 50%;">44100 Hz</span>
<span class="t" style="top:299.00px;line-height:10px;font-size:6.17px;color:#141414;left:592.8px;transform:scaleX(0.9);transform-origin:0 50%;">32 bit float</span>
<span class="t" style="top:307.10px;line-height:10px;font-size:6.17px;color:#141414;left:592.8px;transform:scaleX(0.9);transform-origin:0 50%;">Stereo</span>
<svg style="left:305.8px;top:287.5px" width="8" height="8" viewBox="0 0 8 8"><path d="M0.8 4.6 L3 7 L7.4 1.2" fill="none" stroke="#24a020" stroke-width="1.6"/></svg>
<svg style="left:318.4px;top:319.0px" width="50.6" height="49.8" viewBox="0 0 100 100" preserveAspectRatio="none"><rect width="100" height="100" fill="#8a8478"/><circle cx="99" cy="30" r="1.6" fill="#9a9084"/><circle cx="64" cy="6" r="1.8" fill="#4a98b0"/><circle cx="10" cy="51" r="3.3" fill="#9ab8c0"/><circle cx="83" cy="14" r="2.1" fill="#a0988c"/><circle cx="0" cy="56" r="2.7" fill="#7a7268"/><circle cx="6" cy="9" r="2.1" fill="#5ab0c0"/><circle cx="14" cy="12" r="1.9" fill="#7a7268"/><circle cx="26" cy="88" r="2.3" fill="#5ab0c0"/><circle cx="90" cy="36" r="1.5" fill="#a0988c"/><circle cx="4" cy="82" r="2.5" fill="#7a7268"/><circle cx="3" cy="41" r="2.3" fill="#6f8f9f"/><circle cx="22" cy="95" r="1.5" fill="#9a9084"/><circle cx="4" cy="72" r="2.0" fill="#6f8f9f"/><circle cx="7" cy="64" r="3.4" fill="#9a9084"/><circle cx="94" cy="31" r="2.8" fill="#a0988c"/><circle cx="9" cy="35" r="1.4" fill="#4a98b0"/><circle cx="39" cy="20" r="3.6" fill="#5ab0c0"/><circle cx="57" cy="91" r="1.6" fill="#8a7a6a"/><circle cx="95" cy="22" r="1.8" fill="#5ab0c0"/><circle cx="11" cy="26" r="2.1" fill="#6f8f9f"/><circle cx="64" cy="96" r="1.5" fill="#9a9084"/><circle cx="34" cy="10" r="2.8" fill="#5ab0c0"/><circle cx="5" cy="97" r="2.2" fill="#9ab8c0"/><circle cx="10" cy="6" r="3.1" fill="#4a98b0"/><circle cx="100" cy="41" r="1.4" fill="#9a9084"/><circle cx="18" cy="94" r="3.3" fill="#6f8f9f"/><circle cx="7" cy="42" r="3.6" fill="#6f8f9f"/><circle cx="29" cy="11" r="2.5" fill="#9ab8c0"/><circle cx="95" cy="47" r="1.5" fill="#7ac4d0"/><circle cx="11" cy="54" r="1.4" fill="#6f8f9f"/><circle cx="38" cy="11" r="2.0" fill="#a0988c"/><circle cx="97" cy="43" r="1.7" fill="#6f8f9f"/><circle cx="98" cy="13" r="2.9" fill="#5ab0c0"/><circle cx="92" cy="33" r="3.3" fill="#6f8f9f"/><circle cx="7" cy="31" r="3.4" fill="#a0988c"/><circle cx="26" cy="17" r="2.8" fill="#a0988c"/><circle cx="60" cy="13" r="1.7" fill="#9a9084"/><circle cx="30" cy="89" r="2.8" fill="#7a7268"/><circle cx="21" cy="2" r="2.7" fill="#a0988c"/><circle cx="87" cy="92" r="1.9" fill="#9ab8c0"/><circle cx="6" cy="29" r="2.6" fill="#8a7a6a"/><circle cx="41" cy="98" r="1.5" fill="#7ac4d0"/><circle cx="0" cy="94" r="2.0" fill="#4a98b0"/><circle cx="0" cy="79" r="3.2" fill="#9ab8c0"/><circle cx="4" cy="54" r="2.4" fill="#9a9084"/><circle cx="74" cy="17" r="1.6" fill="#6f8f9f"/><circle cx="27" cy="1" r="2.9" fill="#9a9084"/><circle cx="6" cy="26" r="3.4" fill="#5ab0c0"/><circle cx="19" cy="19" r="1.6" fill="#a0988c"/><circle cx="29" cy="7" r="3.2" fill="#a0988c"/><circle cx="62" cy="2" r="3.5" fill="#6f8f9f"/><circle cx="20" cy="7" r="2.1" fill="#9a9084"/><circle cx="53" cy="89" r="1.6" fill="#4a98b0"/><circle cx="0" cy="43" r="2.0" fill="#4a98b0"/><circle cx="11" cy="38" r="1.7" fill="#5ab0c0"/><circle cx="41" cy="3" r="2.4" fill="#7ac4d0"/><circle cx="87" cy="92" r="3.3" fill="#4a98b0"/><circle cx="82" cy="90" r="2.7" fill="#a0988c"/><circle cx="73" cy="20" r="2.7" fill="#7a7268"/><circle cx="9" cy="61" r="2.1" fill="#5ab0c0"/><circle cx="63" cy="18" r="2.6" fill="#4a98b0"/><circle cx="95" cy="74" r="3.0" fill="#a0988c"/><circle cx="96" cy="83" r="2.0" fill="#9a9084"/><circle cx="99" cy="72" r="2.2" fill="#a0988c"/><circle cx="97" cy="41" r="2.2" fill="#6f8f9f"/><circle cx="82" cy="7" r="2.6" fill="#7ac4d0"/><circle cx="8" cy="65" r="2.0" fill="#9a9084"/><circle cx="68" cy="12" r="2.5" fill="#9a9084"/><circle cx="76" cy="87" r="3.0" fill="#9a9084"/><circle cx="4" cy="51" r="2.4" fill="#a0988c"/><circle cx="97" cy="52" r="3.5" fill="#9a9084"/><circle cx="59" cy="7" r="2.2" fill="#4a98b0"/><circle cx="10" cy="35" r="3.7" fill="#9a9084"/><circle cx="99" cy="87" r="2.1" fill="#9a9084"/><circle cx="46" cy="10" r="3.4" fill="#9ab8c0"/><circle cx="4" cy="97" r="3.0" fill="#7a7268"/><circle cx="59" cy="89" r="2.0" fill="#a0988c"/><circle cx="43" cy="13" r="2.3" fill="#7a7268"/><circle cx="73" cy="4" r="1.5" fill="#7a7268"/><circle cx="7" cy="8" r="2.8" fill="#8a7a6a"/><circle cx="100" cy="56" r="2.2" fill="#a0988c"/><circle cx="11" cy="89" r="2.2" fill="#9ab8c0"/><circle cx="94" cy="94" r="2.2" fill="#a0988c"/><circle cx="100" cy="13" r="3.1" fill="#6f8f9f"/><circle cx="93" cy="40" r="1.9" fill="#5ab0c0"/><circle cx="4" cy="82" r="2.9" fill="#7ac4d0"/><circle cx="69" cy="88" r="2.9" fill="#7a7268"/><circle cx="90" cy="78" r="2.0" fill="#9ab8c0"/><circle cx="85" cy="1" r="1.7" fill="#7a7268"/><circle cx="5" cy="22" r="3.8" fill="#9ab8c0"/><circle cx="3" cy="12" r="1.7" fill="#8a7a6a"/><circle cx="12" cy="90" r="2.8" fill="#9ab8c0"/><circle cx="7" cy="18" r="3.1" fill="#a0988c"/><circle cx="6" cy="75" r="3.2" fill="#6f8f9f"/><circle cx="10" cy="48" r="3.0" fill="#7a7268"/><circle cx="46" cy="12" r="1.4" fill="#7ac4d0"/><circle cx="61" cy="1" r="3.0" fill="#7a7268"/><circle cx="15" cy="1" r="2.7" fill="#7ac4d0"/><circle cx="91" cy="56" r="1.4" fill="#7ac4d0"/><circle cx="73" cy="21" r="3.6" fill="#9a9084"/><circle cx="57" cy="94" r="3.8" fill="#7a7268"/><circle cx="64" cy="13" r="2.4" fill="#6f8f9f"/><circle cx="91" cy="18" r="2.6" fill="#7ac4d0"/><circle cx="27" cy="16" r="2.2" fill="#8a7a6a"/><circle cx="8" cy="35" r="3.0" fill="#7ac4d0"/><circle cx="2" cy="23" r="1.9" fill="#4a98b0"/><circle cx="96" cy="61" r="1.3" fill="#6f8f9f"/><circle cx="50" cy="18" r="2.3" fill="#5ab0c0"/><circle cx="93" cy="71" r="3.0" fill="#7ac4d0"/><circle cx="98" cy="42" r="2.4" fill="#5ab0c0"/><circle cx="94" cy="44" r="2.7" fill="#7ac4d0"/><circle cx="96" cy="8" r="3.2" fill="#a0988c"/><circle cx="86" cy="15" r="2.5" fill="#5ab0c0"/><circle cx="96" cy="80" r="3.4" fill="#9a9084"/><circle cx="18" cy="12" r="1.3" fill="#4a98b0"/><circle cx="71" cy="97" r="2.5" fill="#a0988c"/><circle cx="85" cy="89" r="2.0" fill="#9ab8c0"/><circle cx="1" cy="99" r="1.7" fill="#6f8f9f"/><circle cx="93" cy="28" r="2.0" fill="#7ac4d0"/><circle cx="44" cy="7" r="2.5" fill="#a0988c"/><circle cx="23" cy="91" r="3.2" fill="#8a7a6a"/><circle cx="10" cy="56" r="1.9" fill="#6f8f9f"/><circle cx="11" cy="44" r="3.2" fill="#6f8f9f"/><circle cx="93" cy="22" r="2.0" fill="#5ab0c0"/><circle cx="4" cy="90" r="2.3" fill="#7a7268"/><circle cx="11" cy="83" r="2.6" fill="#4a98b0"/><rect x="0" y="90" width="100" height="10" fill="#7aa0c0" opacity="0.5"/><rect x="13" y="21" width="78" height="67" fill="#2a52bc"/><rect x="28" y="23" width="27" height="3.8" fill="#7ab0f0" opacity="0.8"/><rect x="61" y="40" width="30" height="2.2" fill="#a0c8f8" opacity="0.8"/><rect x="39" y="43" width="27" height="2.3" fill="#a0c8f8" opacity="0.8"/><rect x="39" y="28" width="16" height="4.0" fill="#5a90e8" opacity="0.8"/><rect x="25" y="28" width="42" height="3.1" fill="#7ab0f0" opacity="0.8"/><rect x="47" y="55" width="29" height="2.4" fill="#7ab0f0" opacity="0.8"/><rect x="14" y="57" width="31" height="2.5" fill="#a0c8f8" opacity="0.8"/><rect x="25" y="39" width="23" height="2.7" fill="#7ab0f0" opacity="0.8"/><rect x="37" y="34" width="21" height="2.2" fill="#4a78d8" opacity="0.8"/><rect x="35" y="70" width="33" height="2.7" fill="#5a90e8" opacity="0.8"/><rect x="16" y="55" width="26" height="3.6" fill="#7ab0f0" opacity="0.8"/><rect x="25" y="33" width="16" height="2.8" fill="#7ab0f0" opacity="0.8"/><rect x="60" y="34" width="31" height="3.1" fill="#7ab0f0" opacity="0.8"/><rect x="21" y="44" width="24" height="1.8" fill="#a0c8f8" opacity="0.8"/><rect x="62" y="37" width="23" height="3.8" fill="#7ab0f0" opacity="0.8"/><rect x="27" y="27" width="32" height="3.8" fill="#5a90e8" opacity="0.8"/><rect x="13" y="76" width="78" height="12" fill="#14288a"/><path d="M62 24 Q76 22 84 28 Q78 34 74 32 Q72 50 68 62 L66 62 Q69 46 66 34 Q60 30 62 24Z" fill="#e4eefc" opacity="0.9"/><circle cx="81" cy="56" r="4" fill="#fbfbe8"/><path d="M18 88 L18 72 Q17 62 21 58 L21 52 L24.5 56 L29 56 L32.5 52 L33 59 Q37 64 36 72 Q42 76 44 88Z" fill="#14162a"/><path d="M63 88 L78 70 L93 88Z" fill="#161a38"/><path d="M56 88 L60 82 L65 88Z" fill="#161a38"/><circle cx="24" cy="34" r="6.5" fill="none" stroke="#e89820" stroke-width="2.2"/><text x="32" y="36" font-size="8" font-weight="bold" fill="#e8b040" font-family="Liberation Serif,serif">zric</text><ellipse cx="50" cy="9" rx="4.5" ry="6" fill="#b8c8a8"/><ellipse cx="50" cy="10" rx="2.5" ry="3.5" fill="#5a6a4a"/></svg>
<span class="t" style="top:319.20px;line-height:10px;font-size:7.67px;color:#000;font-weight:bold;left:374.3px;transform:scaleX(0.9);transform-origin:0 50%;">Ozric Tentacles - Pixel Dream</span>
<span class="t" style="top:327.50px;line-height:10px;font-size:6.67px;color:#000;font-weight:bold;left:374.3px;transform:scaleX(0.9);transform-origin:0 50%;">The Hidden Step</span>
<span class="t" style="top:335.60px;line-height:10px;font-size:6.11px;color:#141414;left:374.3px;transform:scaleX(0.9);transform-origin:0 50%;">2004.03.09 Copyright © 2000 Snapper Music - Snapper Classics</span>
<span class="t" style="top:343.70px;line-height:10px;font-size:6.11px;color:#141414;left:374.3px;transform:scaleX(0.9);transform-origin:0 50%;">Track 5</span>
<span class="t" style="top:351.80px;line-height:10px;font-size:6.11px;color:#141414;left:374.3px;transform:scaleX(0.9);transform-origin:0 50%;">Psychedelic Rock</span>
<span class="t" style="top:359.90px;line-height:10px;font-size:6.11px;color:#141414;left:374.3px;transform:scaleX(0.9);transform-origin:0 50%;">00:06:21.51</span>
<span class="t" style="top:327.50px;line-height:10px;font-size:8.0px;color:#000;left:539px;transform:scaleX(0.9);transform-origin:0 50%;letter-spacing:-0.55px;">★★★★★</span>
<span class="t" style="top:335.60px;line-height:10px;font-size:6.17px;color:#141414;left:537.7px;transform:scaleX(0.9);transform-origin:0 50%;">Played 216 times</span>
<span class="t" style="top:327.50px;line-height:10px;font-size:6.17px;color:#141414;left:592.8px;transform:scaleX(0.9);transform-origin:0 50%;">MPEG 1 Layer 3</span>
<span class="t" style="top:335.60px;line-height:10px;font-size:6.17px;color:#141414;left:592.8px;transform:scaleX(0.9);transform-origin:0 50%;">~151 kbps</span>
<span class="t" style="top:343.70px;line-height:10px;font-size:6.17px;color:#141414;left:592.8px;transform:scaleX(0.9);transform-origin:0 50%;">44100 Hz</span>
<span class="t" style="top:351.80px;line-height:10px;font-size:6.17px;color:#141414;left:592.8px;transform:scaleX(0.9);transform-origin:0 50%;">32 bit float</span>
<span class="t" style="top:359.90px;line-height:10px;font-size:6.17px;color:#141414;left:592.8px;transform:scaleX(0.9);transform-origin:0 50%;">Joint Stereo</span>
<span class="t" style="top:327.50px;line-height:10px;font-size:6.17px;color:#141414;left:655.8px;transform:scaleX(0.9);transform-origin:0 50%;">Guitar, keyboards: Ed Wynne</span>
<span class="t" style="top:335.60px;line-height:10px;font-size:6.17px;color:#141414;left:655.8px;transform:scaleX(0.9);transform-origin:0 50%;">Flute, vocals: John Egan</span>
<span class="t" style="top:343.70px;line-height:10px;font-size:6.17px;color:#141414;left:655.8px;transform:scaleX(0.9);transform-origin:0 50%;">Bass: Zia Geelani</span>
<span class="t" style="top:351.80px;line-height:10px;font-size:6.17px;color:#141414;left:655.8px;transform:scaleX(0.9);transform-origin:0 50%;">Keyboards: Seaweed</span>
<span class="t" style="top:359.90px;line-height:10px;font-size:6.17px;color:#141414;left:655.8px;transform:scaleX(0.9);transform-origin:0 50%;">Drums, percussion: Rad</span>
<svg style="left:305.8px;top:340.3px" width="8" height="8" viewBox="0 0 8 8"><path d="M0.8 4.6 L3 7 L7.4 1.2" fill="none" stroke="#24a020" stroke-width="1.6"/></svg>
<svg style="left:318.4px;top:371.8px" width="50.6" height="49.8" viewBox="0 0 100 100" preserveAspectRatio="none"><rect width="100" height="100" fill="#f2ecbc"/><text x="50" y="5.5" text-anchor="middle" font-size="5.5" font-weight="bold" fill="#c06a30" letter-spacing="1.5">NIGHTMARES ON WAX</text><ellipse cx="22" cy="22" rx="16" ry="12" fill="#e8843a"/><ellipse cx="45" cy="18" rx="18" ry="10" fill="#3a2a78"/><ellipse cx="70" cy="20" rx="18" ry="11" fill="#e8a040"/><ellipse cx="88" cy="30" rx="10" ry="12" fill="#d8b8a0"/><ellipse cx="15" cy="42" rx="14" ry="14" fill="#d8285a"/><ellipse cx="38" cy="36" rx="16" ry="12" fill="#e86a2a"/><ellipse cx="62" cy="38" rx="18" ry="12" fill="#c83a30"/><ellipse cx="84" cy="48" rx="13" ry="12" fill="#e8843a"/><ellipse cx="12" cy="62" rx="10" ry="10" fill="#e85a9a"/><ellipse cx="28" cy="58" rx="14" ry="12" fill="#a02a6a"/><ellipse cx="50" cy="54" rx="16" ry="12" fill="#8a2a3a"/><ellipse cx="70" cy="58" rx="14" ry="12" fill="#d83a6a"/><ellipse cx="86" cy="66" rx="10" ry="9" fill="#3a8ad8"/><ellipse cx="22" cy="74" rx="10" ry="7" fill="#3a5ac8"/><ellipse cx="36" cy="72" rx="10" ry="8" fill="#7a3aa0"/><ellipse cx="58" cy="70" rx="12" ry="9" fill="#e86a9a"/><ellipse cx="74" cy="74" rx="10" ry="7" fill="#5a3a98"/><ellipse cx="47" cy="30" rx="9" ry="6" fill="#e8582a"/><ellipse cx="30" cy="28" rx="8" ry="6" fill="#c02838"/><path d="M33 66 Q40 60 47 66 L46 84 Q50 90 44 93 Q42 100 39 93 Q33 90 36 84Z" fill="#8ab860"/><text x="88" y="97" text-anchor="middle" font-size="4" fill="#555">Thought So</text></svg>
<span class="t" style="top:372.00px;line-height:10px;font-size:7.67px;color:#000;font-weight:bold;left:374.3px;transform:scaleX(0.9);transform-origin:0 50%;">Nightmares on Wax - 195lbs</span>
<span class="t" style="top:380.30px;line-height:10px;font-size:6.67px;color:#000;font-weight:bold;left:374.3px;transform:scaleX(0.9);transform-origin:0 50%;">Thought So...</span>
<span class="t" style="top:388.40px;line-height:10px;font-size:6.11px;color:#141414;left:374.3px;transform:scaleX(0.9);transform-origin:0 50%;">2008 Copyright © ©2008 Warp Records &lt;WARP CD 159&gt; - W…</span>
<span class="t" style="top:396.50px;line-height:10px;font-size:6.11px;color:#141414;left:374.3px;transform:scaleX(0.9);transform-origin:0 50%;">Track 3</span>
<span class="t" style="top:404.60px;line-height:10px;font-size:6.11px;color:#141414;left:374.3px;transform:scaleX(0.9);transform-origin:0 50%;">Downtempo, Trip Hop, Jazzy</span>
<span class="t" style="top:412.70px;line-height:10px;font-size:6.11px;color:#141414;left:374.3px;transform:scaleX(0.9);transform-origin:0 50%;">00:05:34.72</span>
<span class="t" style="top:380.30px;line-height:10px;font-size:6.17px;color:#141414;left:537.7px;transform:scaleX(0.9);transform-origin:0 50%;">Not rated</span>
<span class="t" style="top:388.40px;line-height:10px;font-size:6.17px;color:#141414;left:537.7px;transform:scaleX(0.9);transform-origin:0 50%;">Played 9 times</span>
<span class="t" style="top:380.30px;line-height:10px;font-size:6.17px;color:#141414;left:592.8px;transform:scaleX(0.9);transform-origin:0 50%;">WavPack</span>
<span class="t" style="top:388.40px;line-height:10px;font-size:6.17px;color:#141414;left:592.8px;transform:scaleX(0.9);transform-origin:0 50%;">787 kbps</span>
<span class="t" style="top:396.50px;line-height:10px;font-size:6.17px;color:#141414;left:592.8px;transform:scaleX(0.9);transform-origin:0 50%;">44100 Hz</span>
<span class="t" style="top:404.60px;line-height:10px;font-size:6.17px;color:#141414;left:592.8px;transform:scaleX(0.9);transform-origin:0 50%;">16 bit</span>
<span class="t" style="top:412.70px;line-height:10px;font-size:6.17px;color:#141414;left:592.8px;transform:scaleX(0.9);transform-origin:0 50%;">2 channels</span>
<span class="t" style="top:380.30px;line-height:10px;font-size:6.17px;color:#141414;left:655.8px;transform:scaleX(0.9);transform-origin:0 50%;">Composer: George "E.A.S.E." Evelyn</span>
<svg style="left:306px;top:393.5px" width="7.5" height="7.2" viewBox="0 0 7.5 7.2"><path d="M0.3 0.3 L7.2 3.6 L0.3 6.9Z" fill="#3f9fd0"/></svg>
<svg style="left:318.4px;top:424.6px" width="50.6" height="49.8" viewBox="0 0 100 100" preserveAspectRatio="none"><rect width="100" height="100" fill="#215a48"/><rect width="100" height="20" fill="#2a8088"/><rect y="20" width="100" height="10" fill="#2f786c"/><circle cx="74" cy="56" r="5.1" fill="#1a4e4c"/><circle cx="23" cy="66" r="3.5" fill="#1f4e3c"/><circle cx="42" cy="89" r="2.9" fill="#2e6e52"/><circle cx="75" cy="95" r="2.1" fill="#173f30"/><circle cx="10" cy="44" r="5.0" fill="#1a4e4c"/><circle cx="53" cy="92" r="4.7" fill="#173f30"/><circle cx="43" cy="44" r="2.9" fill="#173f30"/><circle cx="56" cy="56" r="3.3" fill="#2e6e52"/><circle cx="35" cy="59" r="3.1" fill="#1a4e4c"/><circle cx="31" cy="53" r="2.9" fill="#173f30"/><circle cx="76" cy="53" r="2.3" fill="#428664"/><circle cx="36" cy="51" r="3.2" fill="#102e22"/><circle cx="33" cy="79" r="5.1" fill="#2e6e52"/><circle cx="47" cy="96" r="3.8" fill="#1a4e4c"/><circle cx="27" cy="75" r="5.6" fill="#173f30"/><circle cx="79" cy="80" r="2.8" fill="#428664"/><circle cx="76" cy="66" r="4.8" fill="#102e22"/><circle cx="33" cy="48" r="2.1" fill="#173f30"/><circle cx="86" cy="69" r="5.8" fill="#337466"/><circle cx="68" cy="94" r="4.8" fill="#2e6e52"/><circle cx="67" cy="83" r="4.8" fill="#337466"/><circle cx="32" cy="79" r="2.8" fill="#428664"/><circle cx="71" cy="40" r="5.3" fill="#1f4e3c"/><circle cx="100" cy="58" r="3.8" fill="#337466"/><circle cx="27" cy="53" r="5.9" fill="#337466"/><circle cx="40" cy="73" r="5.1" fill="#2e6e52"/><circle cx="26" cy="35" r="2.4" fill="#102e22"/><circle cx="10" cy="59" r="4.6" fill="#173f30"/><circle cx="85" cy="99" r="4.0" fill="#428664"/><circle cx="4" cy="72" r="3.3" fill="#337466"/><circle cx="58" cy="39" r="5.8" fill="#102e22"/><circle cx="79" cy="74" r="2.8" fill="#102e22"/><circle cx="71" cy="65" r="5.6" fill="#173f30"/><circle cx="35" cy="39" r="5.3" fill="#337466"/><circle cx="23" cy="34" r="2.4" fill="#428664"/><circle cx="76" cy="45" r="4.7" fill="#337466"/><circle cx="8" cy="82" r="2.4" fill="#102e22"/><circle cx="79" cy="71" r="5.9" fill="#2e6e52"/><circle cx="58" cy="92" r="4.0" fill="#428664"/><circle cx="30" cy="46" r="4.2" fill="#102e22"/><circle cx="37" cy="76" r="5.4" fill="#173f30"/><circle cx="65" cy="74" r="3.6" fill="#1f4e3c"/><circle cx="13" cy="32" r="5.0" fill="#428664"/><circle cx="17" cy="55" r="4.7" fill="#337466"/><circle cx="48" cy="59" r="2.9" fill="#1a4e4c"/><circle cx="35" cy="83" r="4.7" fill="#428664"/><circle cx="12" cy="81" r="5.8" fill="#337466"/><circle cx="86" cy="92" r="2.8" fill="#1a4e4c"/><circle cx="72" cy="61" r="2.6" fill="#1f4e3c"/><circle cx="66" cy="75" r="6.0" fill="#1f4e3c"/><circle cx="27" cy="35" r="2.3" fill="#173f30"/><circle cx="7" cy="89" r="2.6" fill="#2e6e52"/><circle cx="89" cy="94" r="3.7" fill="#1a4e4c"/><circle cx="35" cy="47" r="3.5" fill="#2e6e52"/><circle cx="8" cy="76" r="5.9" fill="#1f4e3c"/><circle cx="27" cy="81" r="5.6" fill="#102e22"/><circle cx="39" cy="91" r="3.3" fill="#2e6e52"/><circle cx="59" cy="40" r="2.8" fill="#337466"/><circle cx="20" cy="89" r="4.7" fill="#1a4e4c"/><circle cx="26" cy="65" r="2.3" fill="#102e22"/><circle cx="8" cy="91" r="2.7" fill="#1a4e4c"/><circle cx="53" cy="85" r="4.3" fill="#337466"/><circle cx="2" cy="53" r="5.9" fill="#1a4e4c"/><circle cx="11" cy="91" r="5.3" fill="#173f30"/><circle cx="54" cy="47" r="3.8" fill="#173f30"/><circle cx="70" cy="56" r="2.5" fill="#1a4e4c"/><circle cx="11" cy="44" r="3.3" fill="#2e6e52"/><circle cx="36" cy="96" r="3.9" fill="#2e6e52"/><circle cx="24" cy="44" r="5.7" fill="#2e6e52"/><circle cx="12" cy="71" r="4.5" fill="#173f30"/><circle cx="68" cy="49" r="4.4" fill="#2e6e52"/><circle cx="1" cy="31" r="5.0" fill="#2e6e52"/><circle cx="14" cy="94" r="3.0" fill="#1f4e3c"/><circle cx="54" cy="78" r="3.1" fill="#2e6e52"/><circle cx="36" cy="89" r="5.9" fill="#337466"/><circle cx="37" cy="83" r="4.9" fill="#428664"/><circle cx="25" cy="53" r="2.7" fill="#337466"/><circle cx="95" cy="68" r="6.0" fill="#1a4e4c"/><circle cx="14" cy="38" r="3.8" fill="#173f30"/><circle cx="12" cy="39" r="5.0" fill="#1f4e3c"/><circle cx="27" cy="90" r="5.8" fill="#2e6e52"/><circle cx="66" cy="91" r="5.1" fill="#2e6e52"/><circle cx="46" cy="68" r="3.0" fill="#1a4e4c"/><circle cx="66" cy="75" r="2.8" fill="#337466"/><circle cx="43" cy="32" r="3.1" fill="#428664"/><circle cx="23" cy="38" r="5.5" fill="#337466"/><circle cx="47" cy="92" r="5.8" fill="#337466"/><circle cx="51" cy="91" r="2.5" fill="#1f4e3c"/><circle cx="79" cy="62" r="4.0" fill="#1a4e4c"/><circle cx="55" cy="72" r="3.2" fill="#337466"/><circle cx="58" cy="88" r="2.9" fill="#428664"/><circle cx="100" cy="97" r="2.2" fill="#173f30"/><circle cx="36" cy="60" r="3.5" fill="#1f4e3c"/><circle cx="20" cy="98" r="5.1" fill="#1f4e3c"/><circle cx="14" cy="82" r="2.8" fill="#2e6e52"/><circle cx="37" cy="35" r="5.7" fill="#102e22"/><circle cx="65" cy="91" r="4.9" fill="#337466"/><circle cx="83" cy="74" r="2.5" fill="#1f4e3c"/><circle cx="39" cy="94" r="3.7" fill="#1a4e4c"/><circle cx="97" cy="94" r="2.5" fill="#102e22"/><circle cx="37" cy="88" r="4.0" fill="#1f4e3c"/><circle cx="38" cy="62" r="3.7" fill="#428664"/><circle cx="61" cy="49" r="3.4" fill="#102e22"/><circle cx="33" cy="77" r="5.3" fill="#337466"/><circle cx="66" cy="91" r="5.6" fill="#102e22"/><circle cx="61" cy="38" r="5.5" fill="#1f4e3c"/><circle cx="18" cy="68" r="4.0" fill="#2e6e52"/><circle cx="2" cy="65" r="2.3" fill="#1f4e3c"/><circle cx="33" cy="47" r="4.5" fill="#102e22"/><circle cx="1" cy="41" r="2.4" fill="#1a4e4c"/><circle cx="63" cy="91" r="3.5" fill="#102e22"/><circle cx="15" cy="92" r="3.0" fill="#337466"/><circle cx="25" cy="95" r="2.6" fill="#337466"/><circle cx="18" cy="60" r="4.6" fill="#337466"/><circle cx="24" cy="42" r="5.8" fill="#173f30"/><circle cx="87" cy="42" r="5.2" fill="#102e22"/><circle cx="20" cy="84" r="5.9" fill="#2e6e52"/><circle cx="85" cy="98" r="4.5" fill="#102e22"/><circle cx="62" cy="84" r="2.0" fill="#337466"/><circle cx="44" cy="79" r="2.6" fill="#173f30"/><circle cx="72" cy="62" r="3.3" fill="#2e6e52"/><circle cx="6" cy="79" r="6.0" fill="#1a4e4c"/><circle cx="85" cy="95" r="2.8" fill="#337466"/><circle cx="93" cy="65" r="2.3" fill="#2e6e52"/><circle cx="72" cy="49" r="2.3" fill="#1a4e4c"/><circle cx="15" cy="37" r="4.7" fill="#428664"/><circle cx="86" cy="46" r="5.7" fill="#1a4e4c"/><circle cx="78" cy="81" r="3.7" fill="#428664"/><circle cx="7" cy="90" r="3.2" fill="#2e6e52"/><circle cx="47" cy="97" r="5.2" fill="#2e6e52"/><circle cx="3" cy="89" r="3.1" fill="#102e22"/><circle cx="94" cy="35" r="4.5" fill="#428664"/><circle cx="22" cy="36" r="4.2" fill="#102e22"/><circle cx="63" cy="92" r="3.0" fill="#1a4e4c"/><circle cx="44" cy="45" r="3.4" fill="#1f4e3c"/><circle cx="58" cy="46" r="5.6" fill="#428664"/><circle cx="53" cy="35" r="5.8" fill="#337466"/><circle cx="54" cy="68" r="3.1" fill="#102e22"/><circle cx="27" cy="81" r="3.4" fill="#1f4e3c"/><circle cx="68" cy="73" r="3.5" fill="#337466"/><circle cx="5" cy="39" r="4.7" fill="#102e22"/><circle cx="82" cy="51" r="2.7" fill="#1f4e3c"/><circle cx="31" cy="40" r="5.9" fill="#1f4e3c"/><circle cx="42" cy="47" r="5.5" fill="#1a4e4c"/><circle cx="25" cy="70" r="5.8" fill="#2e6e52"/><circle cx="53" cy="76" r="4.7" fill="#1a4e4c"/><circle cx="14" cy="72" r="3.2" fill="#337466"/><circle cx="96" cy="77" r="3.1" fill="#1a4e4c"/><circle cx="59" cy="41" r="5.2" fill="#2e6e52"/><circle cx="69" cy="83" r="4.8" fill="#1a4e4c"/><path d="M24 56 L28 46.4 L32 56Z" fill="#c8ccc0"/><path d="M36.5 53.5 L40 45.1 L43.5 53.5Z" fill="#c8ccc0"/><path d="M44 64 L48 54.4 L52 64Z" fill="#c8ccc0"/><path d="M53.5 72.5 L58 61.7 L62.5 72.5Z" fill="#c8ccc0"/><path d="M61 81 L66 69.0 L71 81Z" fill="#c8ccc0"/><path d="M17 53 L20 45.8 L23 53Z" fill="#c8ccc0"/><path d="M70 90 L74 80.4 L78 90Z" fill="#c8ccc0"/><text x="50" y="15" text-anchor="middle" font-size="14" fill="none" stroke="#c8f0e8" stroke-width="0.6" letter-spacing="1">ovnimoon</text><rect y="84" width="100" height="16" fill="#0f2a18" opacity="0.6"/><rect x="5" y="92" width="16" height="2.5" fill="#dfe8e0"/></svg>
<span class="t" style="top:424.80px;line-height:10px;font-size:7.67px;color:#000;font-weight:bold;left:374.3px;transform:scaleX(0.9);transform-origin:0 50%;">Ovnimoon - Ramirufias</span>
<span class="t" style="top:433.10px;line-height:10px;font-size:6.67px;color:#000;font-weight:bold;left:374.3px;transform:scaleX(0.9);transform-origin:0 50%;">Human Spirit</span>
<span class="t" style="top:441.20px;line-height:10px;font-size:6.11px;color:#141414;left:374.3px;transform:scaleX(0.9);transform-origin:0 50%;">2007</span>
<span class="t" style="top:449.30px;line-height:10px;font-size:6.11px;color:#141414;left:374.3px;transform:scaleX(0.9);transform-origin:0 50%;">Track 7</span>
<span class="t" style="top:457.40px;line-height:10px;font-size:6.11px;color:#141414;left:374.3px;transform:scaleX(0.9);transform-origin:0 50%;">Psychedelic</span>
<span class="t" style="top:465.50px;line-height:10px;font-size:6.11px;color:#141414;left:374.3px;transform:scaleX(0.9);transform-origin:0 50%;">00:08:00.28</span>
<span class="t" style="top:433.10px;line-height:10px;font-size:6.17px;color:#141414;left:537.7px;transform:scaleX(0.9);transform-origin:0 50%;">Not rated</span>
<span class="t" style="top:441.20px;line-height:10px;font-size:6.17px;color:#141414;left:537.7px;transform:scaleX(0.9);transform-origin:0 50%;">Played 107 times</span>
<span class="t" style="top:433.10px;line-height:10px;font-size:6.17px;color:#141414;left:592.8px;transform:scaleX(0.9);transform-origin:0 50%;">MPEG 1 Layer 3</span>
<span class="t" style="top:441.20px;line-height:10px;font-size:6.17px;color:#141414;left:592.8px;transform:scaleX(0.9);transform-origin:0 50%;">~204 kbps</span>
<span class="t" style="top:449.30px;line-height:10px;font-size:6.17px;color:#141414;left:592.8px;transform:scaleX(0.9);transform-origin:0 50%;">44100 Hz</span>
<span class="t" style="top:457.40px;line-height:10px;font-size:6.17px;color:#141414;left:592.8px;transform:scaleX(0.9);transform-origin:0 50%;">32 bit float</span>
<span class="t" style="top:465.50px;line-height:10px;font-size:6.17px;color:#141414;left:592.8px;transform:scaleX(0.9);transform-origin:0 50%;">Joint Stereo</span>
<div style="left:307px;top:446.5px;width:6.2px;height:7.2px;background:#f4f6fa;border:0.5px solid #9aa0b0;"></div>
<div style="left:308.2px;top:448.7px;width:3.4px;height:3.4px;background:#3fc030;border-radius:1.7px;"></div>
<svg style="left:318.4px;top:477.4px" width="50.6" height="49.8" viewBox="0 0 100 100" preserveAspectRatio="none"><defs><linearGradient id="g4" x1="0" y1="0" x2="0" y2="1"><stop offset="0" stop-color="#141a3a"/><stop offset="0.25" stop-color="#1f2f6a"/><stop offset="0.5" stop-color="#3a5aa8"/><stop offset="0.62" stop-color="#8ab0d8"/><stop offset="0.7" stop-color="#b8a080"/><stop offset="1" stop-color="#4a2a10"/></linearGradient><radialGradient id="r4"><stop offset="0" stop-color="#0a1030" stop-opacity="0.9"/><stop offset="1" stop-color="#1a2a60" stop-opacity="0"/></radialGradient></defs><rect width="100" height="100" fill="url(#g4)"/><circle cx="50" cy="48" r="26" fill="url(#r4)"/><circle cx="50" cy="26" r="3.5" fill="none" stroke="#c8d8f8" stroke-width="1.2"/><path d="M0 62 L12 56 L25 66 L40 72 L55 78 L70 70 L85 60 L100 55 L100 100 L0 100Z" fill="#6a4a28"/><path d="M0 75 L20 70 L38 82 L60 88 L80 78 L100 72 L100 100 L0 100Z" fill="#8a5a28"/><path d="M0 88 L30 84 L60 94 L100 86 L100 100 L0 100Z" fill="#4a2c12"/><rect width="100" height="17" fill="#2a1c10"/><text x="50" y="13" text-anchor="middle" font-size="11.5" fill="#c8a060" font-family="Liberation Serif,serif" letter-spacing="0.5">OVNIMOON</text><rect y="93" width="100" height="7" fill="#1a1008"/><text x="50" y="98.5" text-anchor="middle" font-size="4.5" fill="#b08040" letter-spacing="1">FAMILY OF LIGHT</text></svg>
<span class="t" style="top:477.60px;line-height:10px;font-size:7.67px;color:#000;font-weight:bold;left:374.3px;transform:scaleX(0.9);transform-origin:0 50%;">Ovnimoon - The Door Of My Soul</span>
<span class="t" style="top:485.90px;line-height:10px;font-size:6.67px;color:#000;font-weight:bold;left:374.3px;transform:scaleX(0.9);transform-origin:0 50%;">Family Of Light</span>
<span class="t" style="top:494.00px;line-height:10px;font-size:6.11px;color:#141414;left:374.3px;transform:scaleX(0.9);transform-origin:0 50%;">2008</span>
<span class="t" style="top:502.10px;line-height:10px;font-size:6.11px;color:#141414;left:374.3px;transform:scaleX(0.9);transform-origin:0 50%;">Track 6</span>
<span class="t" style="top:510.20px;line-height:10px;font-size:6.11px;color:#141414;left:374.3px;transform:scaleX(0.9);transform-origin:0 50%;">Psychedelic</span>
<span class="t" style="top:518.30px;line-height:10px;font-size:6.11px;color:#141414;left:374.3px;transform:scaleX(0.9);transform-origin:0 50%;">00:07:57.14</span>
<span class="t" style="top:485.90px;line-height:10px;font-size:6.17px;color:#141414;left:537.7px;transform:scaleX(0.9);transform-origin:0 50%;">Not rated</span>
<span class="t" style="top:494.00px;line-height:10px;font-size:6.17px;color:#141414;left:537.7px;transform:scaleX(0.9);transform-origin:0 50%;">Played 77 times</span>
<span class="t" style="top:485.90px;line-height:10px;font-size:6.17px;color:#141414;left:592.8px;transform:scaleX(0.9);transform-origin:0 50%;">MPEG 1 Layer 3</span>
<span class="t" style="top:494.00px;line-height:10px;font-size:6.17px;color:#141414;left:592.8px;transform:scaleX(0.9);transform-origin:0 50%;">~224 kbps</span>
<span class="t" style="top:502.10px;line-height:10px;font-size:6.17px;color:#141414;left:592.8px;transform:scaleX(0.9);transform-origin:0 50%;">44100 Hz</span>
<span class="t" style="top:510.20px;line-height:10px;font-size:6.17px;color:#141414;left:592.8px;transform:scaleX(0.9);transform-origin:0 50%;">32 bit float</span>
<span class="t" style="top:518.30px;line-height:10px;font-size:6.17px;color:#141414;left:592.8px;transform:scaleX(0.9);transform-origin:0 50%;">Joint Stereo (MS)</span>
<svg style="left:305.8px;top:498.7px" width="8" height="8" viewBox="0 0 8 8"><path d="M0.8 4.6 L3 7 L7.4 1.2" fill="none" stroke="#24a020" stroke-width="1.6"/></svg>
</div></div>
<div style="left:751.2px;top:254px;width:137.6px;height:282.2px;background:#fff;border:0.6px solid #a8acb2;border-top:0.9px solid #8c8c8c;"></div>
<div style="left:751.8px;top:254.8px;width:136.4px;height:11.2px;background:linear-gradient(#ffffff,#f8f9fb 60%,#eef0f4);border-bottom:0.6px solid #dde0e6;"></div>
<div style="left:827px;top:254.8px;width:0.6px;height:11.2px;background:#e0e3ea;"></div>
<div style="left:857.8px;top:254.8px;width:0.6px;height:11.2px;background:#e0e3ea;"></div>
<span class="t" style="top:256.70px;line-height:10px;font-size:6.44px;color:#2a2a3a;left:755.7px;transform:scaleX(0.9);transform-origin:0 50%;">Plugins Global</span>
<span class="t" style="top:256.70px;line-height:10px;font-size:6.44px;color:#2a2a3a;right:116px;text-align:right;transform:scaleX(0.9);transform-origin:100% 50%;">Act</span>
<span class="t" style="top:256.70px;line-height:10px;font-size:6.44px;color:#2a2a3a;left:860.6px;transform:scaleX(0.9);transform-origin:0 50%;">Response</span>
<div style="left:754.2px;top:268.5px;width:6.6px;height:6.4px;background:linear-gradient(135deg,#d8d8d8,#f8f8f8);border:0.6px solid #b0b4ba;"></div>
<span class="t" style="top:267.60px;line-height:10px;font-size:6.5px;color:#0c0c2c;left:763.6px;transform:scaleX(0.9);transform-origin:0 50%;">BassFX All Pass Filter</span>
<span class="t" style="top:267.60px;line-height:10px;font-size:6.78px;color:#0c0c2c;left:751.5px;width:200px;text-align:center;transform:scaleX(0.9);transform-origin:50% 50%;">-</span>
<span class="t" style="top:267.60px;line-height:10px;font-size:6.5px;color:#0c0c2c;left:861px;transform:scaleX(0.9);transform-origin:0 50%;">Ready</span>
<div style="left:754.2px;top:277.655px;width:6.6px;height:6.4px;background:linear-gradient(135deg,#d8d8d8,#f8f8f8);border:0.6px solid #b0b4ba;"></div>
<span class="t" style="top:276.75px;line-height:10px;font-size:6.5px;color:#0c0c2c;left:763.6px;transform:scaleX(0.9);transform-origin:0 50%;">BassFX Auto Wah</span>
<span class="t" style="top:276.75px;line-height:10px;font-size:6.78px;color:#0c0c2c;left:751.5px;width:200px;text-align:center;transform:scaleX(0.9);transform-origin:50% 50%;">-</span>
<span class="t" style="top:276.75px;line-height:10px;font-size:6.5px;color:#0c0c2c;left:861px;transform:scaleX(0.9);transform-origin:0 50%;">Ready</span>
<div style="left:754.2px;top:286.81px;width:6.6px;height:6.4px;background:linear-gradient(135deg,#d8d8d8,#f8f8f8);border:0.6px solid #b0b4ba;"></div>
<span class="t" style="top:285.91px;line-height:10px;font-size:6.5px;color:#0c0c2c;left:763.6px;transform:scaleX(0.9);transform-origin:0 50%;">BassFX Chorus</span>
<span class="t" style="top:285.91px;line-height:10px;font-size:6.78px;color:#0c0c2c;left:751.5px;width:200px;text-align:center;transform:scaleX(0.9);transform-origin:50% 50%;">-</span>
<span class="t" style="top:285.91px;line-height:10px;font-size:6.5px;color:#0c0c2c;left:861px;transform:scaleX(0.9);transform-origin:0 50%;">Ready</span>
<div style="left:754.2px;top:295.965px;width:6.6px;height:6.4px;background:linear-gradient(135deg,#d8d8d8,#f8f8f8);border:0.6px solid #b0b4ba;"></div>
<span class="t" style="top:295.06px;line-height:10px;font-size:6.5px;color:#0c0c2c;left:763.6px;transform:scaleX(0.9);transform-origin:0 50%;">BassFX Compressor</span>
<span class="t" style="top:295.06px;line-height:10px;font-size:6.78px;color:#0c0c2c;left:751.5px;width:200px;text-align:center;transform:scaleX(0.9);transform-origin:50% 50%;">-</span>
<span class="t" style="top:295.06px;line-height:10px;font-size:6.5px;color:#0c0c2c;left:861px;transform:scaleX(0.9);transform-origin:0 50%;">Ready</span>
<div style="left:754.2px;top:305.12px;width:6.6px;height:6.4px;background:linear-gradient(135deg,#d8d8d8,#f8f8f8);border:0.6px solid #b0b4ba;"></div>
<span class="t" style="top:304.22px;line-height:10px;font-size:6.5px;color:#0c0c2c;left:763.6px;transform:scaleX(0.9);transform-origin:0 50%;">BassFX Distortion</span>
<span class="t" style="top:304.22px;line-height:10px;font-size:6.78px;color:#0c0c2c;left:751.5px;width:200px;text-align:center;transform:scaleX(0.9);transform-origin:50% 50%;">-</span>
<span class="t" style="top:304.22px;line-height:10px;font-size:6.5px;color:#0c0c2c;left:861px;transform:scaleX(0.9);transform-origin:0 50%;">Ready</span>
<div style="left:754.2px;top:314.275px;width:6.6px;height:6.4px;background:linear-gradient(135deg,#d8d8d8,#f8f8f8);border:0.6px solid #b0b4ba;"></div>
<span class="t" style="top:313.37px;line-height:10px;font-size:6.5px;color:#0c0c2c;left:763.6px;transform:scaleX(0.9);transform-origin:0 50%;">BassFX DynAmp</span>
<span class="t" style="top:313.37px;line-height:10px;font-size:6.78px;color:#0c0c2c;left:751.5px;width:200px;text-align:center;transform:scaleX(0.9);transform-origin:50% 50%;">-</span>
<span class="t" style="top:313.37px;line-height:10px;font-size:6.5px;color:#0c0c2c;left:861px;transform:scaleX(0.9);transform-origin:0 50%;">Ready</span>
<div style="left:754.2px;top:323.43px;width:6.6px;height:6.4px;background:linear-gradient(135deg,#d8d8d8,#f8f8f8);border:0.6px solid #b0b4ba;"></div>
<span class="t" style="top:322.53px;line-height:10px;font-size:6.5px;color:#0c0c2c;left:763.6px;transform:scaleX(0.9);transform-origin:0 50%;">BassFX Echo 2</span>
<span class="t" style="top:322.53px;line-height:10px;font-size:6.78px;color:#0c0c2c;left:751.5px;width:200px;text-align:center;transform:scaleX(0.9);transform-origin:50% 50%;">-</span>
<span class="t" style="top:322.53px;line-height:10px;font-size:6.5px;color:#0c0c2c;left:861px;transform:scaleX(0.9);transform-origin:0 50%;">Ready</span>
<div style="left:754.2px;top:332.585px;width:6.6px;height:6.4px;background:linear-gradient(135deg,#d8d8d8,#f8f8f8);border:0.6px solid #b0b4ba;"></div>
<span class="t" style="top:331.68px;line-height:10px;font-size:6.5px;color:#0c0c2c;left:763.6px;transform:scaleX(0.9);transform-origin:0 50%;">BassFX Equalizer</span>
<span class="t" style="top:331.68px;line-height:10px;font-size:6.78px;color:#0c0c2c;left:751.5px;width:200px;text-align:center;transform:scaleX(0.9);transform-origin:50% 50%;">-</span>
<span class="t" style="top:331.68px;line-height:10px;font-size:6.5px;color:#0c0c2c;left:861px;transform:scaleX(0.9);transform-origin:0 50%;">Ready</span>
<div style="left:754.2px;top:341.74px;width:6.6px;height:6.4px;background:linear-gradient(135deg,#d8d8d8,#f8f8f8);border:0.6px solid #b0b4ba;"></div>
<span class="t" style="top:340.84px;line-height:10px;font-size:6.5px;color:#0c0c2c;left:763.6px;transform:scaleX(0.9);transform-origin:0 50%;">BassFX Flanger</span>
<span class="t" style="top:340.84px;line-height:10px;font-size:6.78px;color:#0c0c2c;left:751.5px;width:200px;text-align:center;transform:scaleX(0.9);transform-origin:50% 50%;">-</span>
<span class="t" style="top:340.84px;line-height:10px;font-size:6.5px;color:#0c0c2c;left:861px;transform:scaleX(0.9);transform-origin:0 50%;">Ready</span>
<div style="left:754.2px;top:350.895px;width:6.6px;height:6.4px;background:linear-gradient(135deg,#d8d8d8,#f8f8f8);border:0.6px solid #b0b4ba;"></div>
<span class="t" style="top:349.99px;line-height:10px;font-size:6.5px;color:#0c0c2c;left:763.6px;transform:scaleX(0.9);transform-origin:0 50%;">BassFX Low Pass Filter</span>
<span class="t" style="top:349.99px;line-height:10px;font-size:6.78px;color:#0c0c2c;left:751.5px;width:200px;text-align:center;transform:scaleX(0.9);transform-origin:50% 50%;">-</span>
<span class="t" style="top:349.99px;line-height:10px;font-size:6.5px;color:#0c0c2c;left:861px;transform:scaleX(0.9);transform-origin:0 50%;">Ready</span>
<div style="left:754.2px;top:360.05px;width:6.6px;height:6.4px;background:linear-gradient(135deg,#d8d8d8,#f8f8f8);border:0.6px solid #b0b4ba;"></div>
<span class="t" style="top:359.15px;line-height:10px;font-size:6.5px;color:#0c0c2c;left:763.6px;transform:scaleX(0.9);transform-origin:0 50%;">Normalize Volume</span>
<span class="t" style="top:359.15px;line-height:10px;font-size:6.78px;color:#0c0c2c;left:751.5px;width:200px;text-align:center;transform:scaleX(0.9);transform-origin:50% 50%;">-</span>
<span class="t" style="top:359.15px;line-height:10px;font-size:6.5px;color:#0c0c2c;left:861px;transform:scaleX(0.9);transform-origin:0 50%;">Ready</span>
<div style="left:754.2px;top:369.205px;width:6.6px;height:6.4px;background:linear-gradient(135deg,#d8d8d8,#f8f8f8);border:0.6px solid #b0b4ba;"></div>
<span class="t" style="top:368.30px;line-height:10px;font-size:6.5px;color:#0c0c2c;left:763.6px;transform:scaleX(0.9);transform-origin:0 50%;">BassFX Phaser</span>
<span class="t" style="top:368.30px;line-height:10px;font-size:6.78px;color:#0c0c2c;left:751.5px;width:200px;text-align:center;transform:scaleX(0.9);transform-origin:50% 50%;">-</span>
<span class="t" style="top:368.30px;line-height:10px;font-size:6.5px;color:#0c0c2c;left:861px;transform:scaleX(0.9);transform-origin:0 50%;">Ready</span>
<div style="left:754.2px;top:378.35999999999996px;width:6.6px;height:6.4px;background:linear-gradient(135deg,#d8d8d8,#f8f8f8);border:0.6px solid #b0b4ba;"></div>
<span class="t" style="top:377.46px;line-height:10px;font-size:6.5px;color:#0c0c2c;left:763.6px;transform:scaleX(0.9);transform-origin:0 50%;">Remove Vocal</span>
<span class="t" style="top:377.46px;line-height:10px;font-size:6.78px;color:#0c0c2c;left:751.5px;width:200px;text-align:center;transform:scaleX(0.9);transform-origin:50% 50%;">-</span>
<span class="t" style="top:377.46px;line-height:10px;font-size:6.5px;color:#0c0c2c;left:861px;transform:scaleX(0.9);transform-origin:0 50%;">Ready</span>
<div style="left:754.2px;top:387.515px;width:6.6px;height:6.4px;background:linear-gradient(135deg,#d8d8d8,#f8f8f8);border:0.6px solid #b0b4ba;"></div>
<span class="t" style="top:386.61px;line-height:10px;font-size:6.5px;color:#0c0c2c;left:763.6px;transform:scaleX(0.9);transform-origin:0 50%;">UnDistort</span>
<span class="t" style="top:386.61px;line-height:10px;font-size:6.78px;color:#0c0c2c;left:751.5px;width:200px;text-align:center;transform:scaleX(0.9);transform-origin:50% 50%;">-</span>
<span class="t" style="top:386.61px;line-height:10px;font-size:6.5px;color:#0c0c2c;left:861px;transform:scaleX(0.9);transform-origin:0 50%;">Ready</span>
<div style="left:754.2px;top:396.67px;width:6.6px;height:6.4px;background:linear-gradient(135deg,#d8d8d8,#f8f8f8);border:0.6px solid #b0b4ba;"></div>
<span class="t" style="top:395.77px;line-height:10px;font-size:6.5px;color:#0c0c2c;left:763.6px;transform:scaleX(0.9);transform-origin:0 50%;">WMA Broadcast</span>
<span class="t" style="top:395.77px;line-height:10px;font-size:6.78px;color:#0c0c2c;left:751.5px;width:200px;text-align:center;transform:scaleX(0.9);transform-origin:50% 50%;">-</span>
<span class="t" style="top:395.77px;line-height:10px;font-size:6.5px;color:#0c0c2c;left:861px;transform:scaleX(0.9);transform-origin:0 50%;">Ready</span>
<div style="left:754.2px;top:405.825px;width:6.6px;height:6.4px;background:linear-gradient(135deg,#d8d8d8,#f8f8f8);border:0.6px solid #b0b4ba;"></div>
<span class="t" style="top:404.92px;line-height:10px;font-size:6.5px;color:#0c0c2c;left:763.6px;transform:scaleX(0.9);transform-origin:0 50%;">Stream Direct Strea...</span>
<span class="t" style="top:404.92px;line-height:10px;font-size:6.78px;color:#0c0c2c;left:751.5px;width:200px;text-align:center;transform:scaleX(0.9);transform-origin:50% 50%;">-</span>
<span class="t" style="top:404.92px;line-height:10px;font-size:6.5px;color:#0c0c2c;left:861px;transform:scaleX(0.9);transform-origin:0 50%;">Ready</span>
<div style="left:754.2px;top:414.97999999999996px;width:6.6px;height:6.4px;background:linear-gradient(135deg,#d8d8d8,#f8f8f8);border:0.6px solid #b0b4ba;"></div>
<span class="t" style="top:414.08px;line-height:10px;font-size:6.5px;color:#0c0c2c;left:763.6px;transform:scaleX(0.9);transform-origin:0 50%;">Stream MP4</span>
<span class="t" style="top:414.08px;line-height:10px;font-size:6.78px;color:#0c0c2c;left:751.5px;width:200px;text-align:center;transform:scaleX(0.9);transform-origin:50% 50%;">-</span>
<span class="t" style="top:414.08px;line-height:10px;font-size:6.5px;color:#0c0c2c;left:861px;transform:scaleX(0.9);transform-origin:0 50%;">Ready</span>
<div style="left:754.2px;top:424.135px;width:6.6px;height:6.4px;background:linear-gradient(135deg,#d8d8d8,#f8f8f8);border:0.6px solid #b0b4ba;"></div>
<span class="t" style="top:423.23px;line-height:10px;font-size:6.5px;color:#0c0c2c;left:763.6px;transform:scaleX(0.9);transform-origin:0 50%;">Stream Opus</span>
<span class="t" style="top:423.23px;line-height:10px;font-size:6.78px;color:#0c0c2c;left:751.5px;width:200px;text-align:center;transform:scaleX(0.9);transform-origin:50% 50%;">-</span>
<span class="t" style="top:423.23px;line-height:10px;font-size:6.5px;color:#0c0c2c;left:861px;transform:scaleX(0.9);transform-origin:0 50%;">Ready</span>
<div style="left:754.2px;top:433.29px;width:6.6px;height:6.4px;background:linear-gradient(135deg,#d8d8d8,#f8f8f8);border:0.6px solid #b0b4ba;"></div>
<span class="t" style="top:432.39px;line-height:10px;font-size:6.5px;color:#0c0c2c;left:763.6px;transform:scaleX(0.9);transform-origin:0 50%;">Stream Ogg Vorbis</span>
<span class="t" style="top:432.39px;line-height:10px;font-size:6.78px;color:#0c0c2c;left:751.5px;width:200px;text-align:center;transform:scaleX(0.9);transform-origin:50% 50%;">-</span>
<span class="t" style="top:432.39px;line-height:10px;font-size:6.5px;color:#0c0c2c;left:861px;transform:scaleX(0.9);transform-origin:0 50%;">Ready</span>
<div style="left:754.2px;top:442.445px;width:6.6px;height:6.4px;background:linear-gradient(135deg,#d8d8d8,#f8f8f8);border:0.6px solid #b0b4ba;"></div>
<span class="t" style="top:441.54px;line-height:10px;font-size:6.5px;color:#0c0c2c;left:763.6px;transform:scaleX(0.9);transform-origin:0 50%;">Stream WAV</span>
<span class="t" style="top:441.54px;line-height:10px;font-size:6.78px;color:#0c0c2c;left:751.5px;width:200px;text-align:center;transform:scaleX(0.9);transform-origin:50% 50%;">-</span>
<span class="t" style="top:441.54px;line-height:10px;font-size:6.5px;color:#0c0c2c;left:861px;transform:scaleX(0.9);transform-origin:0 50%;">Ready</span>
<div style="left:754.2px;top:451.59999999999997px;width:6.6px;height:6.4px;background:linear-gradient(135deg,#d8d8d8,#f8f8f8);border:0.6px solid #b0b4ba;"></div>
<span class="t" style="top:450.70px;line-height:10px;font-size:6.5px;color:#0c0c2c;left:763.6px;transform:scaleX(0.9);transform-origin:0 50%;">Vis Spectrum</span>
<span class="t" style="top:450.70px;line-height:10px;font-size:6.78px;color:#0c0c2c;left:751.5px;width:200px;text-align:center;transform:scaleX(0.9);transform-origin:50% 50%;">-</span>
<span class="t" style="top:450.70px;line-height:10px;font-size:6.5px;color:#0c0c2c;left:861px;transform:scaleX(0.9);transform-origin:0 50%;">Ready</span>
<div style="left:754.2px;top:460.755px;width:6.6px;height:6.4px;background:linear-gradient(135deg,#d8d8d8,#f8f8f8);border:0.6px solid #b0b4ba;"></div>
<span class="t" style="top:459.85px;line-height:10px;font-size:6.5px;color:#0c0c2c;left:763.6px;transform:scaleX(0.9);transform-origin:0 50%;">Vis Plugins</span>
<span class="t" style="top:459.85px;line-height:10px;font-size:6.78px;color:#0c0c2c;left:751.5px;width:200px;text-align:center;transform:scaleX(0.9);transform-origin:50% 50%;">-</span>
<span class="t" style="top:459.85px;line-height:10px;font-size:6.5px;color:#0c0c2c;left:861px;transform:scaleX(0.9);transform-origin:0 50%;">Ready</span>
<div style="left:754.2px;top:469.91px;width:6.6px;height:6.4px;background:linear-gradient(135deg,#d8d8d8,#f8f8f8);border:0.6px solid #b0b4ba;"></div>
<span class="t" style="top:469.01px;line-height:10px;font-size:6.5px;color:#0c0c2c;left:763.6px;transform:scaleX(0.9);transform-origin:0 50%;">Enhancer v0.17</span>
<span class="t" style="top:469.01px;line-height:10px;font-size:6.78px;color:#0c0c2c;left:751.5px;width:200px;text-align:center;transform:scaleX(0.9);transform-origin:50% 50%;">-</span>
<span class="t" style="top:469.01px;line-height:10px;font-size:6.5px;color:#0c0c2c;left:861px;transform:scaleX(0.9);transform-origin:0 50%;">Ready</span>
<div style="left:754.2px;top:479.065px;width:6.6px;height:6.4px;background:linear-gradient(135deg,#d8d8d8,#f8f8f8);border:0.6px solid #b0b4ba;"></div>
<span class="t" style="top:478.16px;line-height:10px;font-size:6.5px;color:#0c0c2c;left:763.6px;transform:scaleX(0.9);transform-origin:0 50%;">Surround sound plu...</span>
<span class="t" style="top:478.16px;line-height:10px;font-size:6.78px;color:#0c0c2c;left:751.5px;width:200px;text-align:center;transform:scaleX(0.9);transform-origin:50% 50%;">-</span>
<span class="t" style="top:478.16px;line-height:10px;font-size:6.5px;color:#0c0c2c;left:861px;transform:scaleX(0.9);transform-origin:0 50%;">Ready</span>
<div style="left:754.2px;top:488.21999999999997px;width:6.6px;height:6.4px;background:linear-gradient(135deg,#d8d8d8,#f8f8f8);border:0.6px solid #b0b4ba;"></div>
<span class="t" style="top:487.32px;line-height:10px;font-size:6.5px;color:#0c0c2c;left:763.6px;transform:scaleX(0.9);transform-origin:0 50%;">Sound Solution V1.1</span>
<span class="t" style="top:487.32px;line-height:10px;font-size:6.78px;color:#0c0c2c;left:751.5px;width:200px;text-align:center;transform:scaleX(0.9);transform-origin:50% 50%;">-</span>
<span class="t" style="top:487.32px;line-height:10px;font-size:6.5px;color:#0c0c2c;left:861px;transform:scaleX(0.9);transform-origin:0 50%;">Ready</span>
<div style="left:754.2px;top:497.37499999999994px;width:6.6px;height:6.4px;background:linear-gradient(135deg,#d8d8d8,#f8f8f8);border:0.6px solid #b0b4ba;"></div>
<span class="t" style="top:496.47px;line-height:10px;font-size:6.5px;color:#0c0c2c;left:763.6px;transform:scaleX(0.9);transform-origin:0 50%;">VST Broadcast</span>
<span class="t" style="top:496.47px;line-height:10px;font-size:6.78px;color:#0c0c2c;left:751.5px;width:200px;text-align:center;transform:scaleX(0.9);transform-origin:50% 50%;">-</span>
<span class="t" style="top:496.47px;line-height:10px;font-size:6.5px;color:#0c0c2c;left:861px;transform:scaleX(0.9);transform-origin:0 50%;">Ready</span>
<div style="left:754.2px;top:506.53px;width:6.6px;height:6.4px;background:linear-gradient(135deg,#d8d8d8,#f8f8f8);border:0.6px solid #b0b4ba;"></div>
<span class="t" style="top:505.63px;line-height:10px;font-size:6.5px;color:#0c0c2c;left:763.6px;transform:scaleX(0.9);transform-origin:0 50%;">VST Pitch-Shifter</span>
<span class="t" style="top:505.63px;line-height:10px;font-size:6.78px;color:#0c0c2c;left:751.5px;width:200px;text-align:center;transform:scaleX(0.9);transform-origin:50% 50%;">-</span>
<span class="t" style="top:505.63px;line-height:10px;font-size:6.5px;color:#0c0c2c;left:861px;transform:scaleX(0.9);transform-origin:0 50%;">Ready</span>
<div style="left:754.2px;top:515.685px;width:6.6px;height:6.4px;background:linear-gradient(135deg,#d8d8d8,#f8f8f8);border:0.6px solid #b0b4ba;"></div>
<span class="t" style="top:514.78px;line-height:10px;font-size:6.5px;color:#0c0c2c;left:763.6px;transform:scaleX(0.9);transform-origin:0 50%;">VST SA Perfect De...</span>
<span class="t" style="top:514.78px;line-height:10px;font-size:6.78px;color:#0c0c2c;left:751.5px;width:200px;text-align:center;transform:scaleX(0.9);transform-origin:50% 50%;">-</span>
<span class="t" style="top:514.78px;line-height:10px;font-size:6.5px;color:#0c0c2c;left:861px;transform:scaleX(0.9);transform-origin:0 50%;">Ready</span>
<div style="left:751.8px;top:528.2px;width:136.4px;height:7.3px;background:#ececec;"></div>
<span class="t" style="top:527.10px;line-height:10px;font-size:5.56px;color:#333;left:655.5px;width:200px;text-align:center;transform:scaleX(0.9);transform-origin:50% 50%;">◂</span>
<div style="left:760.5px;top:528.7px;width:37px;height:6px;background:linear-gradient(#f6f6f6,#dcdcdc 60%,#cacaca);border:0.5px solid #b0b0b0;border-radius:1px;"></div>
<span class="t" style="top:527.00px;line-height:10px;font-size:4.44px;color:#555;left:679px;width:200px;text-align:center;transform:scaleX(0.9);transform-origin:50% 50%;">⦀</span>
<span class="t" style="top:527.10px;line-height:10px;font-size:5.56px;color:#333;left:784px;width:200px;text-align:center;transform:scaleX(0.9);transform-origin:50% 50%;">▸</span>
<div style="left:890.3px;top:234px;width:0.6px;height:302px;background:#d0d0d0;"></div>
<span class="t" style="top:233.40px;line-height:10px;font-size:6.56px;color:#111;font-weight:bold;left:895px;transform:scaleX(0.9);transform-origin:0 50%;">Mixer:</span>
<div style="left:913px;top:237.7px;width:58px;height:0.6px;background:#d8d8d8;"></div>
<div style="left:892px;top:242.8px;width:78.5px;height:9.8px;background:#f6f6f6;border:0.6px solid #b8b8b8;"></div>
<span class="t" style="top:243.30px;line-height:10px;font-size:7.11px;color:#4a4a4a;left:894.6px;transform:scaleX(0.9);transform-origin:0 50%;letter-spacing:0.2px;">00:39:54.91/00:26:40.49</span>
<svg style="left:898.2px;top:256.3px" width="7.2" height="7" viewBox="0 0 10 10" preserveAspectRatio="none"><path d="M5 0 V10 L0 5Z M10 0 V10 L5 5Z" fill="#2a3cc8"/></svg>
<svg style="left:910.4px;top:256.3px" width="5.6" height="7" viewBox="0 0 10 10" preserveAspectRatio="none"><path d="M0 0 L10 5 L0 10Z" fill="#2a3cc8"/></svg>
<div style="left:922px;top:256.4px;width:2.6px;height:6.8px;background:#2a3cc8;"></div>
<div style="left:926px;top:256.4px;width:2.6px;height:6.8px;background:#2a3cc8;"></div>
<div style="left:933.2px;top:256.4px;width:7px;height:6.8px;background:#2a3cc8;"></div>
<svg style="left:944.8px;top:256.3px" width="7.2" height="7" viewBox="0 0 10 10" preserveAspectRatio="none"><path d="M0 0 V10 L5 5Z M5 0 V10 L10 5Z" fill="#2a3cc8"/></svg>
<div style="left:957px;top:256.3px;width:6.8px;height:6.8px;background:radial-gradient(circle at 40% 35%,#f06060,#c01010 70%);border-radius:3.5px;"></div>
<div style="left:898.2px;top:269.3px;width:7.6px;height:7.6px;background:radial-gradient(circle at 45% 40%,#b8f090,#2fb020 60%,#1a8a10);border-radius:4px;"></div>
<div style="left:910.6px;top:269.6px;width:5px;height:7px;background:#c8ccd4;border:0.5px solid #8a8e98;"></div>
<div style="left:911.8px;top:271px;width:2.4px;height:4px;background:#6a7080;"></div>
<div style="left:922px;top:269.7px;width:7.4px;height:7.4px;background:linear-gradient(135deg,#f8a040,#e07010);border-radius:1.2px;"></div>
<svg style="left:922px;top:269.7px" width="7.4" height="7.4" viewBox="0 0 10 10" preserveAspectRatio="none"><circle cx="2.6" cy="7.4" r="1" fill="#fff"/><path d="M1.8 4.3 A3.9 3.9 0 0 1 5.7 8.2 M1.8 1.9 A6.3 6.3 0 0 1 8.1 8.2" fill="none" stroke="#fff" stroke-width="1.1"/></svg>
<span class="t" style="top:264.50px;line-height:10px;font-size:6.33px;color:#223;left:938.4px;transform:scaleX(0.9);transform-origin:0 50%;">L</span>
<span class="t" style="top:264.50px;line-height:10px;font-size:6.33px;color:#223;left:854.4px;width:200px;text-align:center;transform:scaleX(0.9);transform-origin:50% 50%;">100%</span>
<span class="t" style="top:264.50px;line-height:10px;font-size:6.33px;color:#223;left:966.2px;transform:scaleX(0.9);transform-origin:0 50%;">R</span>
<div style="left:942.5px;top:275px;width:7.6px;height:40.39999999999998px;background:#e6e6e6;border:0.5px solid #cfcfcf;"></div>
<div style="left:943.9px;top:302px;width:5px;height:12.899999999999977px;background:#3a8ae8;"></div>
<div style="left:941.2px;top:284.4px;width:10.2px;height:4.6px;background:linear-gradient(#fdfdfd,#d4d4d4);border:0.5px solid #8a8a8a;border-radius:1px;"></div>
<div style="left:939.5px;top:275.7px;width:1.2px;height:0.7px;background:#cdcdcd;"></div>
<div style="left:952.1px;top:275.7px;width:1.2px;height:0.7px;background:#cdcdcd;"></div>
<div style="left:939.5px;top:280.5px;width:1.2px;height:0.7px;background:#cdcdcd;"></div>
<div style="left:952.1px;top:280.5px;width:1.2px;height:0.7px;background:#cdcdcd;"></div>
<div style="left:939.5px;top:285.3px;width:1.2px;height:0.7px;background:#cdcdcd;"></div>
<div style="left:952.1px;top:285.3px;width:1.2px;height:0.7px;background:#cdcdcd;"></div>
<div style="left:939.5px;top:290.09999999999997px;width:1.2px;height:0.7px;background:#cdcdcd;"></div>
<div style="left:952.1px;top:290.09999999999997px;width:1.2px;height:0.7px;background:#cdcdcd;"></div>
<div style="left:939.5px;top:294.9px;width:1.2px;height:0.7px;background:#555;"></div>
<div style="left:952.1px;top:294.9px;width:1.2px;height:0.7px;background:#555;"></div>
<div style="left:939.5px;top:299.7px;width:1.2px;height:0.7px;background:#cdcdcd;"></div>
<div style="left:952.1px;top:299.7px;width:1.2px;height:0.7px;background:#cdcdcd;"></div>
<div style="left:939.5px;top:304.49999999999994px;width:1.2px;height:0.7px;background:#cdcdcd;"></div>
<div style="left:952.1px;top:304.49999999999994px;width:1.2px;height:0.7px;background:#cdcdcd;"></div>
<div style="left:939.5px;top:309.29999999999995px;width:1.2px;height:0.7px;background:#cdcdcd;"></div>
<div style="left:952.1px;top:309.29999999999995px;width:1.2px;height:0.7px;background:#cdcdcd;"></div>
<div style="left:939.5px;top:314.09999999999997px;width:1.2px;height:0.7px;background:#555;"></div>
<div style="left:952.1px;top:314.09999999999997px;width:1.2px;height:0.7px;background:#555;"></div>
<div style="left:959.1px;top:275px;width:7.6px;height:40.39999999999998px;background:#e6e6e6;border:0.5px solid #cfcfcf;"></div>
<div style="left:960.5px;top:302px;width:5px;height:12.899999999999977px;background:#3a8ae8;"></div>
<div style="left:957.8000000000001px;top:284.4px;width:10.2px;height:4.6px;background:linear-gradient(#fdfdfd,#d4d4d4);border:0.5px solid #8a8a8a;border-radius:1px;"></div>
<div style="left:956.1px;top:275.7px;width:1.2px;height:0.7px;background:#cdcdcd;"></div>
<div style="left:968.7px;top:275.7px;width:1.2px;height:0.7px;background:#cdcdcd;"></div>
<div style="left:956.1px;top:280.5px;width:1.2px;height:0.7px;background:#cdcdcd;"></div>
<div style="left:968.7px;top:280.5px;width:1.2px;height:0.7px;background:#cdcdcd;"></div>
<div style="left:956.1px;top:285.3px;width:1.2px;height:0.7px;background:#cdcdcd;"></div>
<div style="left:968.7px;top:285.3px;width:1.2px;height:0.7px;background:#cdcdcd;"></div>
<div style="left:956.1px;top:290.09999999999997px;width:1.2px;height:0.7px;background:#cdcdcd;"></div>
<div style="left:968.7px;top:290.09999999999997px;width:1.2px;height:0.7px;background:#cdcdcd;"></div>
<div style="left:956.1px;top:294.9px;width:1.2px;height:0.7px;background:#555;"></div>
<div style="left:968.7px;top:294.9px;width:1.2px;height:0.7px;background:#555;"></div>
<div style="left:956.1px;top:299.7px;width:1.2px;height:0.7px;background:#cdcdcd;"></div>
<div style="left:968.7px;top:299.7px;width:1.2px;height:0.7px;background:#cdcdcd;"></div>
<div style="left:956.1px;top:304.49999999999994px;width:1.2px;height:0.7px;background:#cdcdcd;"></div>
<div style="left:968.7px;top:304.49999999999994px;width:1.2px;height:0.7px;background:#cdcdcd;"></div>
<div style="left:956.1px;top:309.29999999999995px;width:1.2px;height:0.7px;background:#cdcdcd;"></div>
<div style="left:968.7px;top:309.29999999999995px;width:1.2px;height:0.7px;background:#cdcdcd;"></div>
<div style="left:956.1px;top:314.09999999999997px;width:1.2px;height:0.7px;background:#555;"></div>
<div style="left:968.7px;top:314.09999999999997px;width:1.2px;height:0.7px;background:#555;"></div>
<div style="left:897.2px;top:283.09999999999997px;width:6.6px;height:6.6px;background:linear-gradient(135deg,#dcdcdc,#fafafa);border:0.6px solid #a4a8ae;"></div>
<svg style="left:897.2px;top:283.09999999999997px" width="6.6" height="6.6" viewBox="0 0 6 6"><path d="M1.3 3 L2.5 4.4 L4.7 1.3" fill="none" stroke="#2a3ea0" stroke-width="1"/></svg>
<span class="t" style="top:281.80px;line-height:10px;font-size:6.56px;color:#223;left:905.6px;transform:scaleX(0.9);transform-origin:0 50%;">Follow</span>
<div style="left:897.2px;top:293.65px;width:6.6px;height:6.6px;background:linear-gradient(135deg,#dcdcdc,#fafafa);border:0.6px solid #a4a8ae;"></div>
<span class="t" style="top:292.35px;line-height:10px;font-size:6.56px;color:#223;left:905.6px;transform:scaleX(0.9);transform-origin:0 50%;">Loop</span>
<div style="left:897.2px;top:304.2px;width:6.6px;height:6.6px;background:linear-gradient(135deg,#dcdcdc,#fafafa);border:0.6px solid #a4a8ae;"></div>
<span class="t" style="top:302.90px;line-height:10px;font-size:6.56px;color:#223;left:905.6px;transform:scaleX(0.9);transform-origin:0 50%;">Shuffle</span>
<div style="left:897.2px;top:314.74999999999994px;width:6.6px;height:6.6px;background:linear-gradient(135deg,#dcdcdc,#fafafa);border:0.6px solid #a4a8ae;"></div>
<span class="t" style="top:313.45px;line-height:10px;font-size:6.56px;color:#223;left:905.6px;transform:scaleX(0.9);transform-origin:0 50%;">Shutdown</span>
<span class="t" style="top:319.80px;line-height:10px;font-size:6.33px;color:#334;left:853.4px;width:200px;text-align:center;transform:scaleX(0.9);transform-origin:50% 50%;">Mute</span>
<span class="t" style="top:327.30px;line-height:10px;font-size:6.56px;color:#111;font-weight:bold;left:895.8px;transform:scaleX(0.9);transform-origin:0 50%;">Stream Channel:</span>
<div style="left:944px;top:331.6px;width:27px;height:0.6px;background:#d8d8d8;"></div>
<div style="left:897.1px;top:337.8px;width:35.2px;height:8px;background:#f4f4f4;border:0.6px solid #c0c0c0;border-radius:1.5px;"></div>
<span class="t" style="top:337.30px;line-height:10px;font-size:6.33px;color:#a8a8a8;left:814.7px;width:200px;text-align:center;transform:scaleX(0.9);transform-origin:50% 50%;">Acquire</span>
<span class="t" style="top:334.80px;line-height:10px;font-size:6.33px;color:#b0b0b0;left:938.4px;transform:scaleX(0.9);transform-origin:0 50%;">L</span>
<span class="t" style="top:334.80px;line-height:10px;font-size:6.33px;color:#b0b0b0;left:854.4px;width:200px;text-align:center;transform:scaleX(0.9);transform-origin:50% 50%;">100%</span>
<span class="t" style="top:334.80px;line-height:10px;font-size:6.33px;color:#b0b0b0;left:966.2px;transform:scaleX(0.9);transform-origin:0 50%;">R</span>
<div style="left:899.5px;top:347.8px;width:0.7px;height:1px;background:#b8b8b8;"></div>
<div style="left:902.8px;top:347.8px;width:0.7px;height:1px;background:#b8b8b8;"></div>
<div style="left:906.1px;top:347.8px;width:0.7px;height:1px;background:#b8b8b8;"></div>
<div style="left:909.4px;top:347.8px;width:0.7px;height:1px;background:#b8b8b8;"></div>
<div style="left:912.7px;top:347.8px;width:0.7px;height:1px;background:#b8b8b8;"></div>
<div style="left:916.0px;top:347.8px;width:0.7px;height:1px;background:#b8b8b8;"></div>
<div style="left:919.3px;top:347.8px;width:0.7px;height:1px;background:#b8b8b8;"></div>
<div style="left:922.6px;top:347.8px;width:0.7px;height:1px;background:#b8b8b8;"></div>
<div style="left:925.9px;top:347.8px;width:0.7px;height:1px;background:#b8b8b8;"></div>
<div style="left:929.2px;top:347.8px;width:0.7px;height:1px;background:#b8b8b8;"></div>
<div style="left:898.2px;top:350.5px;width:32.6px;height:7.6px;background:#e6e6e6;border:0.5px solid #d0d0d0;"></div>
<div style="left:898.2px;top:349.8px;width:3.4px;height:9px;background:linear-gradient(90deg,#fdfdfd,#d8d8d8);border:0.5px solid #b0b0b0;border-radius:1px;"></div>
<span class="t" style="top:359.00px;line-height:10px;font-size:6.56px;color:#b0b0b0;left:897.7px;transform:scaleX(0.9);transform-origin:0 50%;">Min. Reset 2x</span>
<div style="left:898.2px;top:370.3px;width:32.6px;height:7.2px;background:#e6e6e6;border:0.5px solid #d0d0d0;"></div>
<div style="left:898.2px;top:369.5px;width:3.6px;height:8.8px;background:linear-gradient(90deg,#fdfdfd,#d0d0d0);border:0.5px solid #888;border-radius:1px;"></div>
<div style="left:942.5px;top:345.3px;width:7.6px;height:26.899999999999977px;background:#e6e6e6;border:0.5px solid #cfcfcf;"></div>
<div style="left:941.2px;top:345.3px;width:10.2px;height:4.6px;background:linear-gradient(#fdfdfd,#d4d4d4);border:0.5px solid #b0b0b0;border-radius:1px;"></div>
<div style="left:939.5px;top:346.0px;width:1.2px;height:0.7px;background:#cdcdcd;"></div>
<div style="left:952.1px;top:346.0px;width:1.2px;height:0.7px;background:#cdcdcd;"></div>
<div style="left:939.5px;top:349.1125px;width:1.2px;height:0.7px;background:#cdcdcd;"></div>
<div style="left:952.1px;top:349.1125px;width:1.2px;height:0.7px;background:#cdcdcd;"></div>
<div style="left:939.5px;top:352.22499999999997px;width:1.2px;height:0.7px;background:#cdcdcd;"></div>
<div style="left:952.1px;top:352.22499999999997px;width:1.2px;height:0.7px;background:#cdcdcd;"></div>
<div style="left:939.5px;top:355.3375px;width:1.2px;height:0.7px;background:#cdcdcd;"></div>
<div style="left:952.1px;top:355.3375px;width:1.2px;height:0.7px;background:#cdcdcd;"></div>
<div style="left:939.5px;top:358.45px;width:1.2px;height:0.7px;background:#cdcdcd;"></div>
<div style="left:952.1px;top:358.45px;width:1.2px;height:0.7px;background:#cdcdcd;"></div>
<div style="left:939.5px;top:361.5625px;width:1.2px;height:0.7px;background:#cdcdcd;"></div>
<div style="left:952.1px;top:361.5625px;width:1.2px;height:0.7px;background:#cdcdcd;"></div>
<div style="left:939.5px;top:364.675px;width:1.2px;height:0.7px;background:#cdcdcd;"></div>
<div style="left:952.1px;top:364.675px;width:1.2px;height:0.7px;background:#cdcdcd;"></div>
<div style="left:939.5px;top:367.78749999999997px;width:1.2px;height:0.7px;background:#cdcdcd;"></div>
<div style="left:952.1px;top:367.78749999999997px;width:1.2px;height:0.7px;background:#cdcdcd;"></div>
<div style="left:939.5px;top:370.9px;width:1.2px;height:0.7px;background:#555;"></div>
<div style="left:952.1px;top:370.9px;width:1.2px;height:0.7px;background:#555;"></div>
<div style="left:959.1px;top:345.3px;width:7.6px;height:26.899999999999977px;background:#e6e6e6;border:0.5px solid #cfcfcf;"></div>
<div style="left:957.8000000000001px;top:345.3px;width:10.2px;height:4.6px;background:linear-gradient(#fdfdfd,#d4d4d4);border:0.5px solid #b0b0b0;border-radius:1px;"></div>
<div style="left:956.1px;top:346.0px;width:1.2px;height:0.7px;background:#cdcdcd;"></div>
<div style="left:968.7px;top:346.0px;width:1.2px;height:0.7px;background:#cdcdcd;"></div>
<div style="left:956.1px;top:349.1125px;width:1.2px;height:0.7px;background:#cdcdcd;"></div>
<div style="left:968.7px;top:349.1125px;width:1.2px;height:0.7px;background:#cdcdcd;"></div>
<div style="left:956.1px;top:352.22499999999997px;width:1.2px;height:0.7px;background:#cdcdcd;"></div>
<div style="left:968.7px;top:352.22499999999997px;width:1.2px;height:0.7px;background:#cdcdcd;"></div>
<div style="left:956.1px;top:355.3375px;width:1.2px;height:0.7px;background:#cdcdcd;"></div>
<div style="left:968.7px;top:355.3375px;width:1.2px;height:0.7px;background:#cdcdcd;"></div>
<div style="left:956.1px;top:358.45px;width:1.2px;height:0.7px;background:#cdcdcd;"></div>
<div style="left:968.7px;top:358.45px;width:1.2px;height:0.7px;background:#cdcdcd;"></div>
<div style="left:956.1px;top:361.5625px;width:1.2px;height:0.7px;background:#cdcdcd;"></div>
<div style="left:968.7px;top:361.5625px;width:1.2px;height:0.7px;background:#cdcdcd;"></div>
<div style="left:956.1px;top:364.675px;width:1.2px;height:0.7px;background:#cdcdcd;"></div>
<div style="left:968.7px;top:364.675px;width:1.2px;height:0.7px;background:#cdcdcd;"></div>
<div style="left:956.1px;top:367.78749999999997px;width:1.2px;height:0.7px;background:#cdcdcd;"></div>
<div style="left:968.7px;top:367.78749999999997px;width:1.2px;height:0.7px;background:#cdcdcd;"></div>
<div style="left:956.1px;top:370.9px;width:1.2px;height:0.7px;background:#555;"></div>
<div style="left:968.7px;top:370.9px;width:1.2px;height:0.7px;background:#555;"></div>
<span class="t" style="top:375.10px;line-height:10px;font-size:6.33px;color:#b8b8b8;left:853.4px;width:200px;text-align:center;transform:scaleX(0.9);transform-origin:50% 50%;">Mute</span>
<svg style="left:900px;top:382px" width="5.8" height="6.5" viewBox="0 0 10 10" preserveAspectRatio="none"><path d="M0 0 L10 5 L0 10Z" fill="#3a3a3a"/></svg>
<div style="left:911.2px;top:382.2px;width:2.6px;height:6.2px;background:#444;"></div>
<div style="left:915.2px;top:382.2px;width:2.6px;height:6.2px;background:#444;"></div>
<div style="left:922.8px;top:382.2px;width:6.8px;height:6.2px;background:#444;"></div>
<div style="left:938.4px;top:383.2px;width:6.2px;height:6.2px;background:linear-gradient(135deg,#dcdcdc,#fafafa);border:0.6px solid #a4a8ae;"></div>
<svg style="left:938.4px;top:383.2px" width="6.2" height="6.2" viewBox="0 0 6 6"><path d="M1.3 3 L2.5 4.4 L4.7 1.3" fill="none" stroke="#2a3ea0" stroke-width="1"/></svg>
<span class="t" style="top:381.70px;line-height:10px;font-size:6.33px;color:#112;left:946px;transform:scaleX(0.9);transform-origin:0 50%;">Fade</span>
<div style="left:895px;top:393.3px;width:71.7px;height:5.6px;background:#e6e6e6;border:0.5px solid #d0d0d0;"></div>
<div style="left:895px;top:392.5px;width:3.6px;height:7.6px;background:linear-gradient(90deg,#fdfdfd,#d0d0d0);border:0.5px solid #888;border-radius:1px;"></div>
<div style="left:897px;top:402.8px;width:2px;height:0.6px;background:#c8c8c8;"></div>
<div style="left:901px;top:402.8px;width:2px;height:0.6px;background:#c8c8c8;"></div>
<div style="left:905px;top:402.8px;width:2px;height:0.6px;background:#c8c8c8;"></div>
<div style="left:909px;top:402.8px;width:2px;height:0.6px;background:#c8c8c8;"></div>
<div style="left:913px;top:402.8px;width:2px;height:0.6px;background:#c8c8c8;"></div>
<div style="left:917px;top:402.8px;width:2px;height:0.6px;background:#c8c8c8;"></div>
<div style="left:921px;top:402.8px;width:2px;height:0.6px;background:#c8c8c8;"></div>
<div style="left:925px;top:402.8px;width:2px;height:0.6px;background:#c8c8c8;"></div>
<div style="left:929px;top:402.8px;width:2px;height:0.6px;background:#c8c8c8;"></div>
<div style="left:933px;top:402.8px;width:2px;height:0.6px;background:#c8c8c8;"></div>
<div style="left:937px;top:402.8px;width:2px;height:0.6px;background:#c8c8c8;"></div>
<div style="left:941px;top:402.8px;width:2px;height:0.6px;background:#c8c8c8;"></div>
<div style="left:945px;top:402.8px;width:2px;height:0.6px;background:#c8c8c8;"></div>
<div style="left:949px;top:402.8px;width:2px;height:0.6px;background:#c8c8c8;"></div>
<div style="left:953px;top:402.8px;width:2px;height:0.6px;background:#c8c8c8;"></div>
<div style="left:957px;top:402.8px;width:2px;height:0.6px;background:#c8c8c8;"></div>
<div style="left:961px;top:402.8px;width:2px;height:0.6px;background:#c8c8c8;"></div>
<div style="left:965px;top:402.8px;width:2px;height:0.6px;background:#c8c8c8;"></div>
<div style="left:890.4px;top:405.3px;width:81px;height:10.5px;background:#fafafa;border-top:0.8px solid #8c8c8c;border-left:0.7px solid #a0a0a0;"></div>
<span class="t" style="top:405.90px;line-height:10px;font-size:7.11px;color:#111;left:831.2px;width:200px;text-align:center;transform:scaleX(0.9);transform-origin:50% 50%;">Ready.</span>
<div style="left:890.6px;top:416px;width:81px;height:24.2px;background:#000;"></div>
<svg style="left:0px;top:0px" width="971" height="546" viewBox="0 0 971 546" preserveAspectRatio="none"><defs><linearGradient id="sg" gradientUnits="userSpaceOnUse" x1="891" y1="0" x2="971" y2="0"><stop offset="0" stop-color="#f07808"/><stop offset="0.1" stop-color="#f0a010"/><stop offset="0.25" stop-color="#f8d400"/><stop offset="1" stop-color="#f8dc00"/></linearGradient></defs><rect x="901.7" y="416" width="0.6" height="24" fill="#1e1e1e"/><rect x="911.5" y="416" width="0.6" height="24" fill="#1e1e1e"/><rect x="921.6" y="416" width="0.6" height="24" fill="#1e1e1e"/><rect x="931.7" y="416" width="0.6" height="24" fill="#1e1e1e"/><rect x="941.8" y="416" width="0.6" height="24" fill="#1e1e1e"/><rect x="952" y="416" width="0.6" height="24" fill="#1e1e1e"/><rect x="962" y="416" width="0.6" height="24" fill="#1e1e1e"/><rect x="890.6" y="419" width="81" height="0.6" fill="#1e1e1e"/><rect x="890.6" y="426.6" width="81" height="0.6" fill="#1e1e1e"/><rect x="890.6" y="434.5" width="81" height="0.6" fill="#1e1e1e"/><path d="M891.2 426.2 L892.0 428.2 L892.8 429.7 L893.6 430.1 L894.4 431.0 L895.2 432.2 L896.0 432.5 L896.8 432.6 L897.6 432.9 L898.4 433.0 L899.2 433.3 L900.0 433.6 L900.8 433.3 L901.6 434.0 L902.4 434.0 L903.2 434.1 L904.0 433.9 L904.8 434.1 L905.6 434.6 L906.4 434.0 L907.2 434.9 L908.0 434.7 L908.8 434.6 L909.6 434.6 L910.4 434.9 L911.2 435.1 L912.0 435.3 L912.8 435.2 L913.6 435.4 L914.4 435.5 L915.2 435.4 L916.0 435.6 L916.8 435.2 L917.6 435.7 L918.4 435.1 L919.2 435.4 L920.0 435.4 L920.8 435.9 L921.6 435.7 L922.4 435.9 L923.2 436.1 L924.0 435.8 L924.8 435.6 L925.6 435.9 L926.4 435.6 L927.2 436.0 L928.0 435.5 L928.8 435.8 L929.6 436.3 L930.4 436.0 L931.2 436.2 L932.0 436.1 L932.8 436.5 L933.6 436.0 L934.4 435.9 L935.2 436.6 L936.0 436.2 L936.8 436.1 L937.6 435.8 L938.4 436.3 L939.2 436.4 L940.0 436.4 L940.8 436.5 L941.6 435.9 L942.4 436.5 L943.2 436.1 L944.0 436.4 L944.8 436.2 L945.6 436.2 L946.4 436.2 L947.2 436.6 L948.0 436.4 L948.8 436.2 L949.6 436.7 L950.4 436.1 L951.2 436.6 L952.0 436.3 L952.8 436.7 L953.6 436.8 L954.4 436.3 L955.2 436.8 L956.0 436.2 L956.8 436.5 L957.6 436.7 L958.4 436.2 L959.2 436.8 L960.0 436.8 L960.8 436.2 L961.6 436.8 L962.4 436.4 L963.2 436.4 L964.0 436.9 L964.8 436.1 L965.6 436.9 L966.4 436.5 L967.2 436.9 L968.0 436.7 L968.8 436.7 L969.6 436.3 L970.4 436.3 L970.4 438.8 L969.6 439.0 L968.8 439.4 L968.0 439.7 L967.2 439.5 L966.4 439.4 L965.6 439.9 L964.8 439.0 L964.0 439.5 L963.2 439.1 L962.4 439.1 L961.6 439.4 L960.8 438.8 L960.0 439.4 L959.2 439.6 L958.4 438.8 L957.6 439.7 L956.8 439.1 L956.0 438.8 L955.2 439.5 L954.4 439.1 L953.6 439.3 L952.8 439.4 L952.0 438.9 L951.2 439.1 L950.4 438.8 L949.6 439.3 L948.8 438.8 L948.0 439.3 L947.2 439.1 L946.4 438.9 L945.6 439.0 L944.8 438.9 L944.0 439.1 L943.2 438.8 L942.4 439.4 L941.6 438.4 L940.8 439.3 L940.0 439.1 L939.2 439.1 L938.4 438.9 L937.6 438.6 L936.8 438.9 L936.0 438.7 L935.2 439.3 L934.4 438.5 L933.6 438.9 L932.8 439.2 L932.0 438.9 L931.2 439.0 L930.4 438.7 L929.6 439.0 L928.8 438.8 L928.0 438.4 L927.2 438.6 L926.4 438.3 L925.6 438.4 L924.8 438.2 L924.0 438.8 L923.2 439.1 L922.4 438.5 L921.6 438.3 L920.8 438.5 L920.0 438.2 L919.2 438.0 L918.4 438.0 L917.6 438.7 L916.8 437.7 L916.0 438.4 L915.2 438.0 L914.4 438.3 L913.6 438.4 L912.8 437.8 L912.0 438.3 L911.2 438.0 L910.4 437.8 L909.6 437.4 L908.8 437.3 L908.0 437.3 L907.2 437.6 L906.4 436.6 L905.6 437.1 L904.8 437.1 L904.0 436.8 L903.2 437.1 L902.4 436.9 L901.6 436.7 L900.8 435.8 L900.0 436.4 L899.2 435.9 L898.4 435.9 L897.6 435.8 L896.8 435.2 L896.0 435.2 L895.2 434.9 L894.4 433.6 L893.6 433.0 L892.8 432.2 L892.0 431.0 L891.2 428.9Z" fill="url(#sg)"/><path d="M891.6 428 L892.2 422.3 L892.9 428Z" fill="#f07010"/></svg>
<div style="left:890.6px;top:440.2px;width:81px;height:96.5px;background:#f0f0f0;"></div>
<span class="t" style="top:439.70px;line-height:10px;font-size:6.56px;color:#111;font-weight:bold;left:895.5px;transform:scaleX(0.9);transform-origin:0 50%;">Stream Info:</span>
<div style="left:931px;top:444px;width:40px;height:0.6px;background:#d8d8d8;"></div>
<span class="t" style="top:447.70px;line-height:10px;font-size:6.17px;color:#101018;left:893px;transform:scaleX(0.9);transform-origin:0 50%;">Type:</span>
<span class="t" style="top:447.70px;line-height:10px;font-size:6.17px;color:#101018;right:1px;text-align:right;transform:scaleX(0.9);transform-origin:100% 50%;">MPEG 1 Layer 3</span>
<span class="t" style="top:454.80px;line-height:10px;font-size:6.17px;color:#101018;left:893px;transform:scaleX(0.9);transform-origin:0 50%;">Size:</span>
<span class="t" style="top:454.80px;line-height:10px;font-size:6.17px;color:#101018;right:1px;text-align:right;transform:scaleX(0.9);transform-origin:100% 50%;">14.50 MB</span>
<span class="t" style="top:461.90px;line-height:10px;font-size:6.17px;color:#101018;left:893px;transform:scaleX(0.9);transform-origin:0 50%;">Playtime:</span>
<span class="t" style="top:461.90px;line-height:10px;font-size:6.17px;color:#101018;right:1px;text-align:right;transform:scaleX(0.9);transform-origin:100% 50%;">00:06:19.90</span>
<span class="t" style="top:469.00px;line-height:10px;font-size:6.17px;color:#101018;left:893px;transform:scaleX(0.9);transform-origin:0 50%;">1st frame @:</span>
<span class="t" style="top:469.00px;line-height:10px;font-size:6.17px;color:#101018;right:1px;text-align:right;transform:scaleX(0.9);transform-origin:100% 50%;">4221 byte</span>
<span class="t" style="top:476.10px;line-height:10px;font-size:6.17px;color:#101018;left:893px;transform:scaleX(0.9);transform-origin:0 50%;">Bitrate:</span>
<span class="t" style="top:476.10px;line-height:10px;font-size:6.17px;color:#101018;right:1px;text-align:right;transform:scaleX(0.9);transform-origin:100% 50%;">320 kbps</span>
<span class="t" style="top:483.20px;line-height:10px;font-size:6.17px;color:#101018;left:893px;transform:scaleX(0.9);transform-origin:0 50%;">Sample rate:</span>
<span class="t" style="top:483.20px;line-height:10px;font-size:6.17px;color:#101018;right:1px;text-align:right;transform:scaleX(0.9);transform-origin:100% 50%;">44100 Hz</span>
<span class="t" style="top:490.30px;line-height:10px;font-size:6.17px;color:#101018;left:893px;transform:scaleX(0.9);transform-origin:0 50%;">Bits:</span>
<span class="t" style="top:490.30px;line-height:10px;font-size:6.17px;color:#101018;right:1px;text-align:right;transform:scaleX(0.9);transform-origin:100% 50%;">32 bit float</span>
<span class="t" style="top:497.40px;line-height:10px;font-size:6.17px;color:#101018;left:893px;transform:scaleX(0.9);transform-origin:0 50%;">Mode:</span>
<span class="t" style="top:497.40px;line-height:10px;font-size:6.17px;color:#101018;right:1px;text-align:right;transform:scaleX(0.9);transform-origin:100% 50%;">Stereo</span>
<span class="t" style="top:504.50px;line-height:10px;font-size:6.17px;color:#101018;left:893px;transform:scaleX(0.9);transform-origin:0 50%;">Emphasis:</span>
<span class="t" style="top:504.50px;line-height:10px;font-size:6.17px;color:#101018;right:1px;text-align:right;transform:scaleX(0.9);transform-origin:100% 50%;">No</span>
<span class="t" style="top:511.60px;line-height:10px;font-size:6.17px;color:#101018;left:893px;transform:scaleX(0.9);transform-origin:0 50%;">Copyright:</span>
<span class="t" style="top:511.60px;line-height:10px;font-size:6.17px;color:#101018;right:1px;text-align:right;transform:scaleX(0.9);transform-origin:100% 50%;">No</span>
<span class="t" style="top:518.70px;line-height:10px;font-size:6.17px;color:#101018;left:893px;transform:scaleX(0.9);transform-origin:0 50%;">Original:</span>
<span class="t" style="top:518.70px;line-height:10px;font-size:6.17px;color:#101018;right:1px;text-align:right;transform:scaleX(0.9);transform-origin:100% 50%;">Yes</span>
<span class="t" style="top:525.80px;line-height:10px;font-size:6.17px;color:#101018;left:893px;transform:scaleX(0.9);transform-origin:0 50%;">Frame size:</span>
<span class="t" style="top:525.80px;line-height:10px;font-size:6.17px;color:#101018;right:1px;text-align:right;transform:scaleX(0.9);transform-origin:100% 50%;">1045 bytes</span>
<span class="t" style="top:532.90px;line-height:10px;font-size:6.17px;color:#101018;left:893px;transform:scaleX(0.9);transform-origin:0 50%;">Padded:</span>
<span class="t" style="top:532.90px;line-height:10px;font-size:6.17px;color:#101018;right:1px;text-align:right;transform:scaleX(0.9);transform-origin:100% 50%;">No</span>
<div style="left:0px;top:536.6px;width:971px;height:9.4px;background:#f0f0f0;border-top:0.6px solid #d4d4d4;"></div>
<span class="t" style="top:537.60px;line-height:10px;font-size:6.56px;color:#222;left:651.7px;transform:scaleX(0.9);transform-origin:0 50%;">Streams: 6</span>
<span class="t" style="top:537.60px;line-height:10px;font-size:6.56px;color:#222;left:709.3px;transform:scaleX(0.9);transform-origin:0 50%;">BASS CPU: 0.2 %</span>
<span class="t" style="top:537.60px;line-height:10px;font-size:6.56px;color:#222;left:769.5px;transform:scaleX(0.9);transform-origin:0 50%;">RAM: 309.40 MB</span>
<span class="t" style="top:537.60px;line-height:10px;font-size:6.56px;color:#222;left:867.6px;transform:scaleX(0.9);transform-origin:0 50%;">Registered for 3delite</span>
</div></body></html>
